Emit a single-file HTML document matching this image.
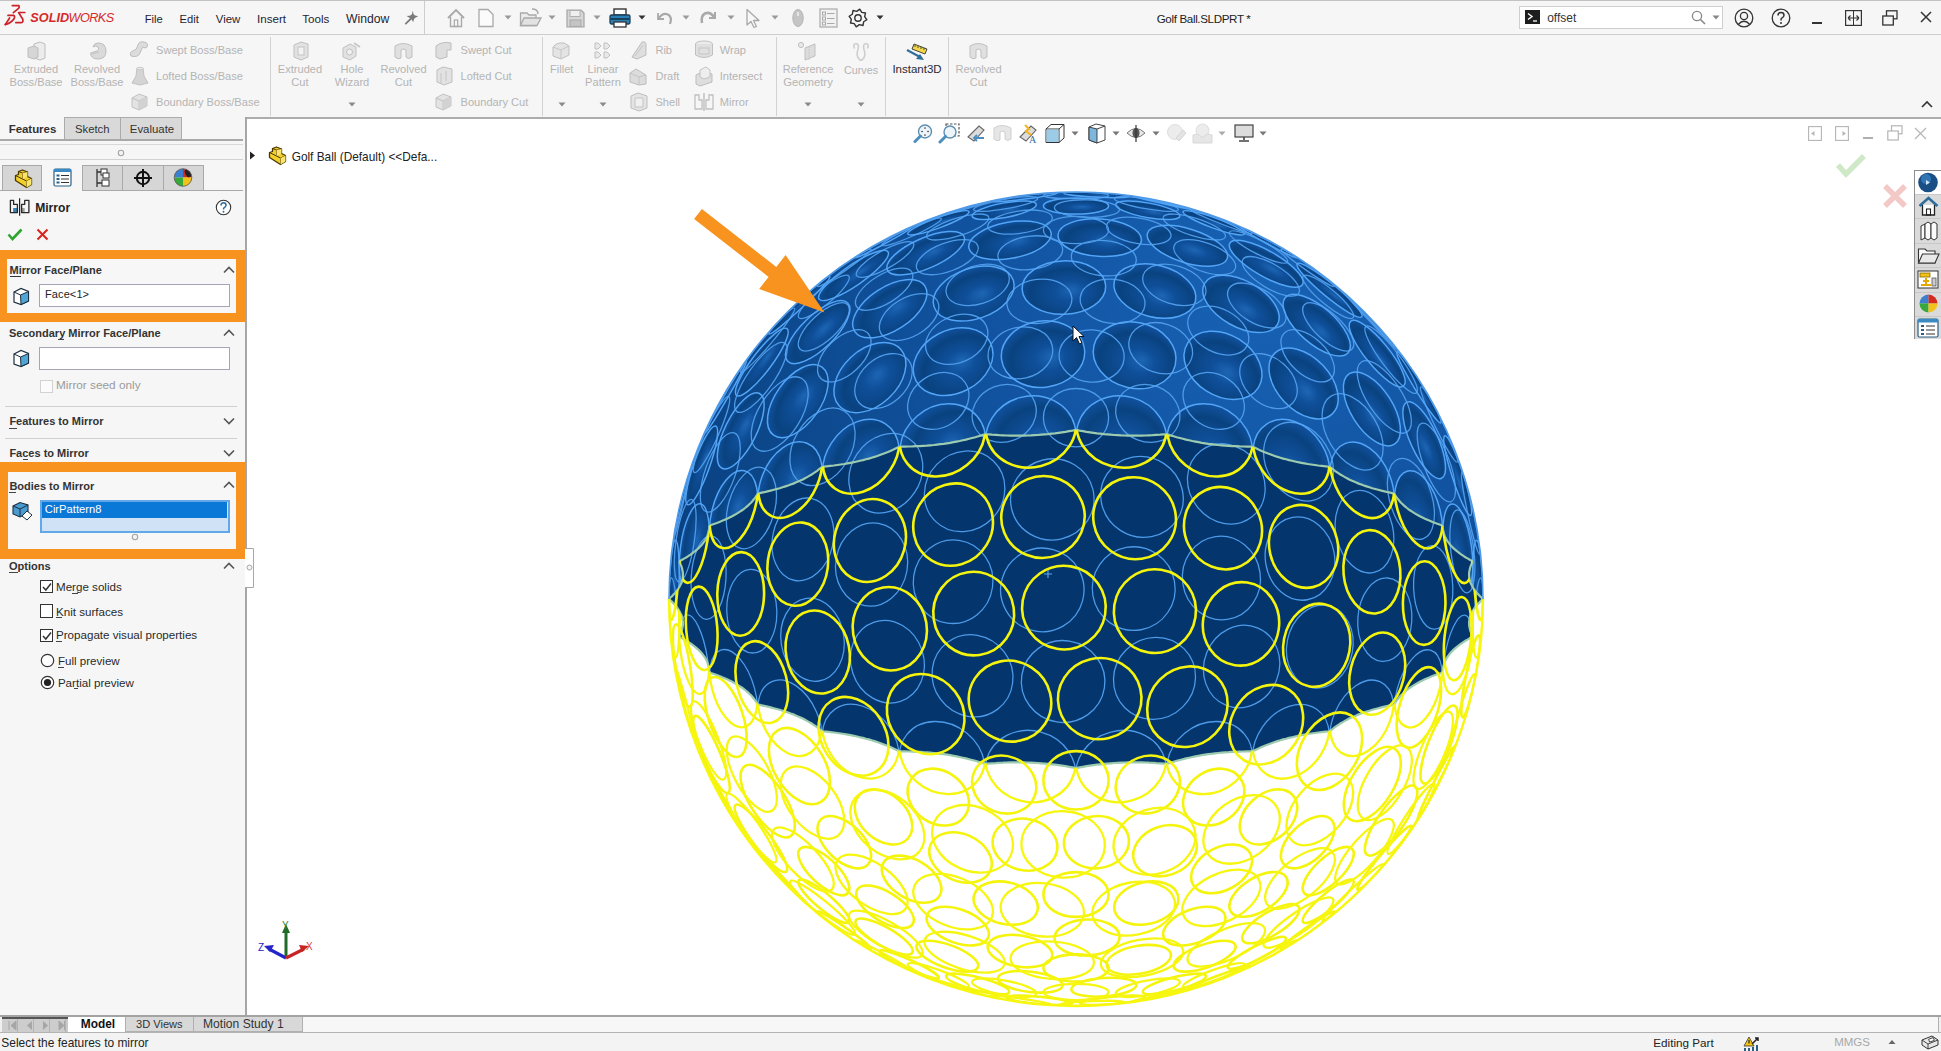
<!DOCTYPE html>
<html><head><meta charset="utf-8"><title>SOLIDWORKS - Golf Ball</title>
<style>
*{box-sizing:border-box}
html,body{margin:0;padding:0;width:1941px;height:1051px;overflow:hidden;background:#fff;font-family:"Liberation Sans",sans-serif;color:#222}
.a{position:absolute;display:block}
.t{position:absolute;white-space:nowrap;line-height:1}
</style></head><body>
<div class="a" style="left:0px;top:0px;width:1941px;height:35px;background:#f6f6f6;border-top:1px solid #c2c2c2;border-bottom:1px solid #cdcdcd"></div>
<svg class="a" style="left:0px;top:0px;" width="30" height="30" viewBox="0 0 30 30"><g fill="none" stroke="#cc2229" stroke-width="1.7" stroke-linecap="round" stroke-linejoin="round"><path d="M12.3 5.6 H18.6 Q19.8 6.3 18.6 8.3 L13.4 12.6"/><path d="M8 15.4 H13.6 Q15.4 16 14 18.8 Q11.5 23 5.2 24.6"/><path d="M9.6 18 L5.4 24.4"/><path d="M24.8 12.5 H18.6 L22.8 19.2 Q23.4 22.6 21.4 22.6 H15.8"/></g></svg>
<div class="t" style="left:30.3px;top:12.1px;font-size:12.7px;color:#d42a2a;font-weight:bold;font-style:italic;">SOLID</div>
<div class="t" style="left:68.6px;top:12.1px;font-size:12.7px;color:#d42a2a;font-weight:normal;font-style:italic;letter-spacing:-0.6px;">WORKS</div>
<div class="t" style="left:144.7px;top:13.7px;font-size:11.2px;color:#1f1f33;font-weight:normal;">File</div>
<div class="t" style="left:179.5px;top:13.7px;font-size:11.2px;color:#1f1f33;font-weight:normal;">Edit</div>
<div class="t" style="left:215.8px;top:13.5px;font-size:11.4px;color:#1f1f33;font-weight:normal;">View</div>
<div class="t" style="left:257.0px;top:13.4px;font-size:11.6px;color:#1f1f33;font-weight:normal;">Insert</div>
<div class="t" style="left:302.3px;top:13.4px;font-size:11.6px;color:#1f1f33;font-weight:normal;">Tools</div>
<div class="t" style="left:346.0px;top:12.9px;font-size:12.2px;color:#1f1f33;font-weight:normal;">Window</div>
<svg class="a" style="left:404px;top:9px;" width="16" height="16" viewBox="0 0 16 16"><path d="M8.8 1.7 Q9.2 5.5 10.6 6.3 Q12 7 14.2 7.2 Q11.2 8.6 10.4 9.6 Q9.6 10.8 9.2 13.2 Q7.8 10.2 6.6 9.6 Q4.6 8.4 2.6 7 Q5.8 6.8 7 6.2 Q8.2 5.2 8.8 1.7 Z" fill="#7a7a7a"/><path d="M7.6 9 L1.8 14.6" stroke="#7a7a7a" stroke-width="1.8" stroke-linecap="round"/></svg>
<div class="a" style="left:424px;top:1px;width:1px;height:33px;background:#cdcdcd"></div>
<svg class="a" style="left:446px;top:8px;" width="20" height="20" viewBox="0 0 20 20"><path d="M2 10 L10 2 L18 10" fill="none" stroke="#a9a9a9" stroke-width="1.8"/><path d="M4.5 9 V18.5 H15.5 V9" fill="none" stroke="#a9a9a9" stroke-width="1.4"/><rect x="8.3" y="12" width="3.4" height="6.5" fill="none" stroke="#a9a9a9" stroke-width="1.2"/></svg>
<svg class="a" style="left:477px;top:8px;" width="18" height="20" viewBox="0 0 18 20"><path d="M2 1.5 H11 L16 6.5 V18.5 H2 Z" fill="#fbfbfb" stroke="#a9a9a9" stroke-width="1.3"/></svg>
<svg class="a" style="left:504px;top:15px;" width="8" height="5" viewBox="0 0 8 5"><path d="M0.5 0.5 L7.5 0.5 L4 4.5 Z" fill="#9a9a9a"/></svg>
<svg class="a" style="left:519px;top:8px;" width="24" height="20" viewBox="0 0 24 20"><path d="M1.5 5 H8 L10 7 H17 V17.5 H1.5 Z" fill="#ececec" stroke="#a9a9a9" stroke-width="1.3"/><path d="M1.5 17.5 L5 10 H22 L18 17.5 Z" fill="#e2e2e2" stroke="#a9a9a9" stroke-width="1.3"/><path d="M13 1 Q19 1 19 6" fill="none" stroke="#a9a9a9" stroke-width="1.5"/></svg>
<svg class="a" style="left:548.4px;top:15px;" width="8" height="5" viewBox="0 0 8 5"><path d="M0.5 0.5 L7.5 0.5 L4 4.5 Z" fill="#9a9a9a"/></svg>
<svg class="a" style="left:566px;top:9px;" width="19" height="19" viewBox="0 0 19 19"><path d="M1 1 H15 L18 4 V18 H1 Z" fill="#d6d6d6" stroke="#a3a3a3" stroke-width="1.2"/><rect x="4" y="1.5" width="10" height="6" fill="#efefef" stroke="#b0b0b0"/><rect x="4" y="11" width="11" height="6.5" fill="#c4c4c4" stroke="#a8a8a8"/></svg>
<svg class="a" style="left:593px;top:15px;" width="8" height="5" viewBox="0 0 8 5"><path d="M0.5 0.5 L7.5 0.5 L4 4.5 Z" fill="#9a9a9a"/></svg>
<svg class="a" style="left:609px;top:8px;" width="22" height="20" viewBox="0 0 22 20"><rect x="5" y="1" width="12" height="6" fill="#fff" stroke="#333" stroke-width="1.4"/><rect x="1" y="7" width="20" height="9" rx="1.5" fill="#2a7fb4" stroke="#1d3f5a" stroke-width="1.3"/><rect x="1.5" y="10" width="19" height="2" fill="#16425e"/><rect x="5" y="14" width="12" height="5" fill="#fff" stroke="#333" stroke-width="1.3"/></svg>
<svg class="a" style="left:637.5px;top:15px;" width="8" height="5" viewBox="0 0 8 5"><path d="M0.5 0.5 L7.5 0.5 L4 4.5 Z" fill="#333"/></svg>
<svg class="a" style="left:654px;top:9px;" width="20" height="18" viewBox="0 0 20 18"><path d="M4 4 V10 H10" fill="none" stroke="#a9a9a9" stroke-width="1.8"/><path d="M4.5 9.5 Q9 3 14 5.5 Q18.5 8 16 15" fill="none" stroke="#a9a9a9" stroke-width="2.2"/></svg>
<svg class="a" style="left:682px;top:15px;" width="8" height="5" viewBox="0 0 8 5"><path d="M0.5 0.5 L7.5 0.5 L4 4.5 Z" fill="#9a9a9a"/></svg>
<svg class="a" style="left:699px;top:9px;" width="20" height="18" viewBox="0 0 20 18"><path d="M16 3 V9 H10" fill="none" stroke="#a9a9a9" stroke-width="2"/><path d="M15.5 8.5 Q11 2 6 4.5 Q1.5 7 3 14" fill="none" stroke="#a9a9a9" stroke-width="2.6"/></svg>
<svg class="a" style="left:726.6px;top:15px;" width="8" height="5" viewBox="0 0 8 5"><path d="M0.5 0.5 L7.5 0.5 L4 4.5 Z" fill="#9a9a9a"/></svg>
<svg class="a" style="left:745px;top:8px;" width="16" height="21" viewBox="0 0 16 21"><path d="M2 1.5 V17 L6 13.5 L9 19.5 L11.5 18.5 L8.5 12.5 H14 Z" fill="#f7f7f7" stroke="#a9a9a9" stroke-width="1.3" stroke-linejoin="round"/></svg>
<svg class="a" style="left:771px;top:15px;" width="8" height="5" viewBox="0 0 8 5"><path d="M0.5 0.5 L7.5 0.5 L4 4.5 Z" fill="#9a9a9a"/></svg>
<svg class="a" style="left:791px;top:8px;" width="14" height="20" viewBox="0 0 14 20"><ellipse cx="7" cy="10" rx="5.2" ry="8.5" fill="#c5c5c5" stroke="#b5b5b5"/><rect x="6" y="4" width="2" height="4" fill="#e6e6e6"/></svg>
<svg class="a" style="left:819px;top:8px;" width="19" height="20" viewBox="0 0 19 20"><rect x="1" y="1" width="17" height="18" fill="#f2f2f2" stroke="#a9a9a9" stroke-width="1.2"/><rect x="3.5" y="4" width="3" height="3" fill="none" stroke="#a9a9a9"/><rect x="3.5" y="9" width="3" height="3" fill="none" stroke="#a9a9a9"/><rect x="3.5" y="14" width="3" height="3" fill="none" stroke="#a9a9a9"/><path d="M8 5.5 H15.5 M8 10.5 H15.5 M8 15.5 H15.5" stroke="#a9a9a9" stroke-width="1.2"/></svg>
<svg class="a" style="left:848px;top:8px;" width="20" height="20" viewBox="0 0 20 20"><polygon points="18.83,11.76 15.65,13.78 15.00,17.48 11.33,16.67 8.24,18.83 6.22,15.65 2.52,15.00 3.33,11.33 1.17,8.24 4.35,6.22 5.00,2.52 8.67,3.33 11.76,1.17 13.78,4.35 17.48,5.00 16.67,8.67" fill="none" stroke="#333" stroke-width="1.4" stroke-linejoin="round"/><circle cx="10" cy="10" r="3.2" fill="none" stroke="#333" stroke-width="1.4"/></svg>
<svg class="a" style="left:876.4px;top:15px;" width="8" height="5" viewBox="0 0 8 5"><path d="M0.5 0.5 L7.5 0.5 L4 4.5 Z" fill="#333"/></svg>
<div class="t" style="left:1156.7px;top:13.0px;font-size:11.6px;color:#222;font-weight:normal;letter-spacing:-0.35px;">Golf Ball.SLDPRT *</div>
<div class="a" style="left:1519px;top:6px;width:204px;height:23px;background:#fff;border:1px solid #cfcfcf"></div>
<svg class="a" style="left:1525px;top:10px;" width="15" height="14" viewBox="0 0 15 14"><rect x="0" y="0" width="15" height="14" fill="#1e1e1e"/><path d="M3 3.5 L7 6.5 L3 9.5" fill="none" stroke="#fff" stroke-width="1.4"/><path d="M8 11 H12" stroke="#fff" stroke-width="1.3"/></svg>
<div class="t" style="left:1547.2px;top:12.4px;font-size:12px;color:#333;font-weight:normal;">offset</div>
<svg class="a" style="left:1691px;top:10px;" width="15" height="15" viewBox="0 0 15 15"><circle cx="6" cy="6" r="4.6" fill="none" stroke="#888" stroke-width="1.3"/><path d="M9.5 9.5 L14 14" stroke="#888" stroke-width="1.6"/></svg>
<svg class="a" style="left:1712px;top:15px;" width="8" height="5" viewBox="0 0 8 5"><path d="M0.5 0.5 L7.5 0.5 L4 4.5 Z" fill="#888"/></svg>
<svg class="a" style="left:1734px;top:8px;" width="20" height="20" viewBox="0 0 20 20"><circle cx="10" cy="10" r="8.8" fill="none" stroke="#333" stroke-width="1.3"/><circle cx="10" cy="8" r="3.6" fill="none" stroke="#333" stroke-width="1.3"/><path d="M4.2 16.5 Q10 10 15.8 16.5" fill="none" stroke="#333" stroke-width="1.3"/></svg>
<svg class="a" style="left:1771px;top:8px;" width="20" height="20" viewBox="0 0 20 20"><circle cx="10" cy="10" r="8.8" fill="none" stroke="#333" stroke-width="1.3"/><path d="M7 7.5 Q7 4.5 10 4.5 Q13 4.5 13 7.2 Q13 9 10.5 10.3 Q10 10.8 10 12.5" fill="none" stroke="#333" stroke-width="1.5"/><circle cx="10" cy="15" r="1" fill="#333"/></svg>
<div class="a" style="left:1812px;top:22px;width:10px;height:2px;background:#333"></div>
<svg class="a" style="left:1845px;top:10px;" width="17" height="16" viewBox="0 0 17 16"><rect x="0.6" y="0.6" width="15.8" height="14.8" fill="none" stroke="#333" stroke-width="1.2"/><path d="M8.5 1 V15" stroke="#333" stroke-width="1"/><path d="M3 8 H14 M3 8 L5.5 5.5 M3 8 L5.5 10.5 M14 8 L11.5 5.5 M14 8 L11.5 10.5" stroke="#333" stroke-width="1.1"/></svg>
<svg class="a" style="left:1882px;top:10px;" width="16" height="16" viewBox="0 0 16 16"><rect x="4.5" y="0.8" width="10.5" height="8" fill="none" stroke="#333" stroke-width="1.3"/><rect x="0.8" y="6" width="10.5" height="9" fill="#f6f6f6" stroke="#333" stroke-width="1.3"/></svg>
<svg class="a" style="left:1920px;top:11px;" width="12" height="12" viewBox="0 0 12 12"><path d="M1 1 L11 11 M11 1 L1 11" stroke="#333" stroke-width="1.5"/></svg>
<div class="a" style="left:0px;top:35px;width:1941px;height:83px;background:#f6f6f6"></div>
<div class="a" style="left:246px;top:117px;width:1695px;height:2px;background:#acacac"></div>
<div class="a" style="left:270px;top:37px;width:1px;height:79px;background:#d2d2d2"></div>
<div class="a" style="left:542px;top:37px;width:1px;height:79px;background:#d2d2d2"></div>
<div class="a" style="left:776px;top:37px;width:1px;height:79px;background:#d2d2d2"></div>
<div class="a" style="left:885px;top:37px;width:1px;height:79px;background:#d2d2d2"></div>
<div class="a" style="left:948px;top:37px;width:1px;height:79px;background:#d2d2d2"></div>
<svg class="a" style="left:26px;top:41px;" width="21" height="20" viewBox="0 0 21 20"><g stroke="#bdbdbd" stroke-width="1"><path d="M8 3 L14 1 L19 3 V17 L14 19 L8 17 Z" fill="#ececec"/><path d="M2 7 L8 5 L12 7 V16 L8 18 L2 16 Z" fill="#d6d6d6"/></g></svg>
<div class="t" style="left:-64.0px;top:64.3px;width:200px;text-align:center;font-size:11.1px;color:#b4b4b4;font-weight:normal;">Extruded</div>
<div class="t" style="left:-64.0px;top:77.3px;width:200px;text-align:center;font-size:11.1px;color:#b4b4b4;font-weight:normal;">Boss/Base</div>
<svg class="a" style="left:88px;top:41px;" width="20" height="20" viewBox="0 0 20 20"><path d="M10 2 Q18 2 18 10 Q18 18 10 18 Q3 18 2.5 12 L9 10 Q12 9 10 6 Q8 4 5 6 Q6 2 10 2 Z" fill="#dadada" stroke="#bdbdbd"/><path d="M4 13 L11 11" stroke="#c4c4c4"/></svg>
<div class="t" style="left:-3.0px;top:64.3px;width:200px;text-align:center;font-size:11.1px;color:#b4b4b4;font-weight:normal;">Revolved</div>
<div class="t" style="left:-3.0px;top:77.3px;width:200px;text-align:center;font-size:11.1px;color:#b4b4b4;font-weight:normal;">Boss/Base</div>
<svg class="a" style="left:128px;top:40px;" width="22" height="19" viewBox="0 0 22 19"><path d="M3 16 Q1 12 5 11 Q9 10 10 5 Q11 1 16 2 Q21 3 19 7 Q17 9 15 7 Q13 10 12 13 Q10 18 3 16 Z" fill="#dcdcdc" stroke="#bdbdbd"/></svg>
<div class="t" style="left:156.0px;top:45.1px;font-size:11.1px;color:#b4b4b4;font-weight:normal;">Swept Boss/Base</div>
<svg class="a" style="left:131px;top:66px;" width="18" height="20" viewBox="0 0 18 20"><path d="M6 2 H12 L13 10 L17 17 L9 19 L1 17 L5 10 Z" fill="#d4d4d4" stroke="#c2c2c2"/><ellipse cx="9" cy="2.5" rx="3" ry="1.2" fill="#eee" stroke="#c8c8c8"/></svg>
<div class="t" style="left:156.0px;top:71.0px;font-size:11.1px;color:#b4b4b4;font-weight:normal;">Lofted Boss/Base</div>
<svg class="a" style="left:130px;top:92px;" width="20" height="20" viewBox="0 0 20 20"><g stroke="#c2c2c2" stroke-width="1" fill="#e3e3e3"><path d="M2 6 L9 2 L17 5 L17 14 L9 18 L2 15 Z"/><path d="M2 6 L9 9 L17 5 M9 9 V18" fill="none"/></g><path d="M9 9 L17 5 L17 14 L9 18 Z" fill="#d2d2d2"/></svg>
<div class="t" style="left:156.0px;top:97.2px;font-size:11.1px;color:#b4b4b4;font-weight:normal;">Boundary Boss/Base</div>
<svg class="a" style="left:292px;top:41px;" width="18" height="20" viewBox="0 0 18 20"><path d="M2 4 L9 1 L16 3 V16 L9 19 L2 16 Z" fill="#e2e2e2" stroke="#c0c0c0"/><rect x="6" y="6" width="6" height="8" fill="#f2f2f2" stroke="#c4c4c4"/></svg>
<div class="t" style="left:200.0px;top:64.3px;width:200px;text-align:center;font-size:11.1px;color:#b4b4b4;font-weight:normal;">Extruded</div>
<div class="t" style="left:200.0px;top:77.3px;width:200px;text-align:center;font-size:11.1px;color:#b4b4b4;font-weight:normal;">Cut</div>
<svg class="a" style="left:341px;top:41px;" width="21" height="20" viewBox="0 0 21 20"><path d="M2 7 L9 3 L15 6 V15 L9 19 L2 16 Z" fill="#e2e2e2" stroke="#c0c0c0"/><circle cx="8.5" cy="11" r="3" fill="#f0f0f0" stroke="#c0c0c0"/><path d="M13 2 L19 6" stroke="#c8c8c8" stroke-width="2"/></svg>
<div class="t" style="left:252.0px;top:64.3px;width:200px;text-align:center;font-size:11.1px;color:#b4b4b4;font-weight:normal;">Hole</div>
<div class="t" style="left:252.0px;top:77.3px;width:200px;text-align:center;font-size:11.1px;color:#b4b4b4;font-weight:normal;">Wizard</div>
<svg class="a" style="left:347.5px;top:102.3px;" width="8" height="5" viewBox="0 0 8 5"><path d="M0.5 0.5 L7.5 0.5 L4 4.5 Z" fill="#8a8a8a"/></svg>
<svg class="a" style="left:393px;top:41px;" width="21" height="20" viewBox="0 0 21 20"><path d="M2 5 Q10 0 19 5 V16 Q15 19 13 16 V9 Q10 7 8 9 V17 Q5 19 2 16 Z" fill="#e0e0e0" stroke="#bfbfbf"/></svg>
<div class="t" style="left:303.5px;top:64.3px;width:200px;text-align:center;font-size:11.1px;color:#b4b4b4;font-weight:normal;">Revolved</div>
<div class="t" style="left:303.5px;top:77.3px;width:200px;text-align:center;font-size:11.1px;color:#b4b4b4;font-weight:normal;">Cut</div>
<svg class="a" style="left:434px;top:40px;" width="20" height="20" viewBox="0 0 20 20"><path d="M2 6 Q8 1 17 3 V10 H13 V17 L6 19 L2 17 Z" fill="#dedede" stroke="#bdbdbd"/></svg>
<div class="t" style="left:460.5px;top:45.1px;font-size:11.1px;color:#b4b4b4;font-weight:normal;">Swept Cut</div>
<svg class="a" style="left:435px;top:66px;" width="19" height="20" viewBox="0 0 19 20"><path d="M2 4 L8 1 L17 3 V16 L9 19 L2 16 Z" fill="#e2e2e2" stroke="#bfbfbf"/><path d="M6 7 V17 M11 5 V15" stroke="#c4c4c4"/></svg>
<div class="t" style="left:460.5px;top:71.0px;font-size:11.1px;color:#b4b4b4;font-weight:normal;">Lofted Cut</div>
<svg class="a" style="left:434px;top:92px;" width="20" height="20" viewBox="0 0 20 20"><g stroke="#c2c2c2" stroke-width="1" fill="#e3e3e3"><path d="M2 6 L9 2 L17 5 L17 14 L9 18 L2 15 Z"/><path d="M2 6 L9 9 L17 5 M9 9 V18" fill="none"/></g><path d="M9 9 L17 5 L17 14 L9 18 Z" fill="#d2d2d2"/></svg>
<div class="t" style="left:460.5px;top:97.2px;font-size:11.1px;color:#b4b4b4;font-weight:normal;">Boundary Cut</div>
<svg class="a" style="left:551px;top:41px;" width="20" height="20" viewBox="0 0 20 20"><path d="M2 6 Q6 1 13 2 L18 5 V14 L10 18 L2 15 Z" fill="#e4e4e4" stroke="#c0c0c0"/><path d="M2 6 L10 9 L18 5 M10 9 V18" fill="none" stroke="#c6c6c6"/></svg>
<div class="t" style="left:461.7px;top:64.3px;width:200px;text-align:center;font-size:11.1px;color:#b4b4b4;font-weight:normal;">Fillet</div>
<svg class="a" style="left:557.6px;top:102.3px;" width="8" height="5" viewBox="0 0 8 5"><path d="M0.5 0.5 L7.5 0.5 L4 4.5 Z" fill="#8a8a8a"/></svg>
<svg class="a" style="left:594px;top:41px;" width="18" height="20" viewBox="0 0 18 20"><g fill="#e8e8e8" stroke="#c0c0c0"><path d="M1 2 H4 L7 5 L4 8 H1 Z"/><path d="M10 2 H13 L16 5 L13 8 H10 Z"/><path d="M1 11 H4 L7 14 L4 17 H1 Z"/><path d="M10 11 H13 L16 14 L13 17 H10 Z"/></g></svg>
<div class="t" style="left:503.0px;top:64.3px;width:200px;text-align:center;font-size:11.1px;color:#b4b4b4;font-weight:normal;">Linear</div>
<div class="t" style="left:503.0px;top:77.3px;width:200px;text-align:center;font-size:11.1px;color:#b4b4b4;font-weight:normal;">Pattern</div>
<svg class="a" style="left:599px;top:102.3px;" width="8" height="5" viewBox="0 0 8 5"><path d="M0.5 0.5 L7.5 0.5 L4 4.5 Z" fill="#8a8a8a"/></svg>
<svg class="a" style="left:629px;top:40px;" width="20" height="20" viewBox="0 0 20 20"><path d="M3 17 L13 2 Q17 1 17 5 V15 L8 19 Z" fill="#dedede" stroke="#bdbdbd"/><path d="M6 16 L14 5" stroke="#c8c8c8"/></svg>
<div class="t" style="left:655.4px;top:45.1px;font-size:11.1px;color:#b4b4b4;font-weight:normal;">Rib</div>
<svg class="a" style="left:628px;top:67px;" width="21" height="19" viewBox="0 0 21 19"><path d="M2 6 L8 2 L18 8 V17 L11 18 L2 15 Z" fill="#dcdcdc" stroke="#bdbdbd"/><path d="M2 6 L11 10 V18 M11 10 L18 8" fill="none" stroke="#c4c4c4"/></svg>
<div class="t" style="left:655.4px;top:71.0px;font-size:11.1px;color:#b4b4b4;font-weight:normal;">Draft</div>
<svg class="a" style="left:629px;top:92px;" width="20" height="20" viewBox="0 0 20 20"><path d="M2 4 L9 1 L18 4 V16 L10 19 L2 16 Z" fill="#e4e4e4" stroke="#bdbdbd"/><path d="M6 6 L14 6 V15 L6 15 Z" fill="#f0f0f0" stroke="#c4c4c4"/></svg>
<div class="t" style="left:655.4px;top:97.2px;font-size:11.1px;color:#b4b4b4;font-weight:normal;">Shell</div>
<svg class="a" style="left:694px;top:40px;" width="20" height="20" viewBox="0 0 20 20"><ellipse cx="10" cy="4" rx="8.5" ry="3" fill="#ececec" stroke="#c0c0c0"/><path d="M1.5 4 V15 Q10 20 18.5 15 V4" fill="#e0e0e0" stroke="#c0c0c0"/><rect x="5" y="8" width="10" height="6" fill="none" stroke="#c4c4c4"/></svg>
<div class="t" style="left:719.7px;top:45.1px;font-size:11.1px;color:#b4b4b4;font-weight:normal;">Wrap</div>
<svg class="a" style="left:694px;top:66px;" width="20" height="21" viewBox="0 0 20 21"><path d="M2 9 L10 5 L18 8 V16 L6 20 L2 18 Z" fill="#dedede" stroke="#bdbdbd"/><path d="M6 4 L12 1 L16 4 V11 L10 13 L6 11 Z" fill="#eeeeee" stroke="#c2c2c2"/></svg>
<div class="t" style="left:719.7px;top:71.0px;font-size:11.1px;color:#b4b4b4;font-weight:normal;">Intersect</div>
<svg class="a" style="left:694px;top:92px;" width="20" height="20" viewBox="0 0 20 20"><g fill="none" stroke="#c0c0c0" stroke-width="1.3"><path d="M1 3 H5 V8 H8 V17 H1 Z"/><path d="M19 3 H15 V8 H12 V17 H19 Z"/></g><path d="M10 1 V19" stroke="#bdbdbd" stroke-width="1.4"/></svg>
<div class="t" style="left:719.7px;top:97.2px;font-size:11.1px;color:#b4b4b4;font-weight:normal;">Mirror</div>
<svg class="a" style="left:797px;top:41px;" width="21" height="21" viewBox="0 0 21 21"><circle cx="4" cy="4" r="2.6" fill="#e8e8e8" stroke="#c0c0c0"/><path d="M8 7 L18 3 V15 L8 19 Z" fill="#dcdcdc" stroke="#c0c0c0"/><path d="M12 5 V20" stroke="#c8c8c8" stroke-dasharray="2 1"/></svg>
<div class="t" style="left:708.0px;top:64.4px;width:200px;text-align:center;font-size:10.95px;color:#b4b4b4;font-weight:normal;">Reference</div>
<div class="t" style="left:708.0px;top:77.1px;width:200px;text-align:center;font-size:11.3px;color:#b4b4b4;font-weight:normal;">Geometry</div>
<svg class="a" style="left:804.2px;top:102.3px;" width="8" height="5" viewBox="0 0 8 5"><path d="M0.5 0.5 L7.5 0.5 L4 4.5 Z" fill="#8a8a8a"/></svg>
<svg class="a" style="left:851px;top:41px;" width="20" height="21" viewBox="0 0 20 21"><path d="M3.5 7.5 Q1.5 3 5 2.5 Q8.5 3 7 8.5 Q4.5 14.5 8.5 18.5 Q10 19.8 11.5 18.5 Q15.5 14.5 13 8.5 Q11.5 3 15 2.5 Q18.5 3 16.5 7.5" fill="none" stroke="#cfcfcf" stroke-width="1.7"/></svg>
<div class="t" style="left:761.0px;top:64.6px;width:200px;text-align:center;font-size:10.8px;color:#b4b4b4;font-weight:normal;">Curves</div>
<svg class="a" style="left:856.6px;top:102.3px;" width="8" height="5" viewBox="0 0 8 5"><path d="M0.5 0.5 L7.5 0.5 L4 4.5 Z" fill="#8a8a8a"/></svg>
<svg class="a" style="left:906px;top:42px;" width="22" height="19" viewBox="0 0 22 19"><path d="M8 2 L21 7 L19 12 L6 7 Z" fill="#f1d84a" stroke="#333" stroke-width="0.9"/><path d="M9 3 V5 M12 4 V6 M15 5 V7 M18 6 V8" stroke="#333" stroke-width="0.8"/><path d="M1 8 L14 15" stroke="#2f6d9a" stroke-width="2"/><path d="M10 17 L18 18 L14 12 Z" fill="#2f6d9a"/></svg>
<div class="t" style="left:817.0px;top:64.0px;width:200px;text-align:center;font-size:11.5px;color:#2a2a35;font-weight:normal;">Instant3D</div>
<svg class="a" style="left:968px;top:41px;" width="21" height="20" viewBox="0 0 21 20"><path d="M2 5 Q10 0 19 5 V16 Q15 19 13 16 V9 Q10 7 8 9 V17 Q5 19 2 16 Z" fill="#e0e0e0" stroke="#bfbfbf"/></svg>
<div class="t" style="left:878.5px;top:64.3px;width:200px;text-align:center;font-size:11.1px;color:#b4b4b4;font-weight:normal;">Revolved</div>
<div class="t" style="left:878.5px;top:77.3px;width:200px;text-align:center;font-size:11.1px;color:#b4b4b4;font-weight:normal;">Cut</div>
<svg class="a" style="left:1921px;top:100px;" width="12" height="8" viewBox="0 0 12 8"><path d="M1 7 L6 2 L11 7" fill="none" stroke="#333" stroke-width="1.6"/></svg>
<div class="a" style="left:0px;top:117px;width:245px;height:899px;background:#f6f6f6"></div>
<div class="a" style="left:245px;top:117px;width:2px;height:899px;background:#a6a6a6"></div>
<div class="t" style="left:8.7px;top:123.8px;font-size:11.5px;color:#333;font-weight:bold;letter-spacing:-0.05px;">Features</div>
<div class="a" style="left:64px;top:117px;width:57px;height:23px;background:#d9d9d9;border:1px solid #ababab;border-bottom:none"></div>
<div class="a" style="left:120px;top:117px;width:62px;height:23px;background:#d9d9d9;border:1px solid #ababab;border-bottom:none"></div>
<div class="t" style="left:75.0px;top:123.9px;font-size:11.3px;color:#333;font-weight:normal;">Sketch</div>
<div class="t" style="left:129.8px;top:123.8px;font-size:11.4px;color:#333;font-weight:normal;">Evaluate</div>
<div class="a" style="left:0px;top:139px;width:243px;height:2px;background:#a9a9a9"></div>
<div class="a" style="left:0px;top:144px;width:243px;height:1px;background:#d8d8d8"></div>
<svg class="a" style="left:117px;top:149px;" width="8" height="8" viewBox="0 0 8 8"><circle cx="4" cy="4" r="2.7" fill="#f4f4f4" stroke="#a5a5a5" stroke-width="1.1"/></svg>
<div class="a" style="left:0px;top:159px;width:243px;height:1px;background:#d2d2d2"></div>
<div class="a" style="left:2px;top:165px;width:40px;height:26px;background:#d6d6d6;border:1px solid #a9a9a9;border-bottom:none"></div>
<div class="a" style="left:82px;top:165px;width:41px;height:26px;background:#d6d6d6;border:1px solid #a9a9a9;border-bottom:none"></div>
<div class="a" style="left:122px;top:165px;width:42px;height:26px;background:#d6d6d6;border:1px solid #a9a9a9;border-bottom:none"></div>
<div class="a" style="left:163px;top:165px;width:41px;height:26px;background:#d6d6d6;border:1px solid #a9a9a9;border-bottom:none"></div>
<div class="a" style="left:0px;top:190px;width:243px;height:1px;background:#a9a9a9"></div>
<div class="a" style="left:42px;top:190px;width:40px;height:1px;background:#f7f7f7"></div>
<svg class="a" style="left:8px;top:163px;" width="30" height="30" viewBox="0 0 30 30"><path d="M7.5 12.5 L10.5 11.5 V8.5 L14.5 7 L19.5 9 V13.5 L23.5 15.5 V21.5 L18.5 24.5 L7.5 17.5 Z" fill="#f3cf2a" stroke="#4a3800" stroke-width="1.3" stroke-linejoin="round"/><path d="M10.5 8.5 L14.5 10 L19.5 9 M14.5 10 V16 M7.5 12.5 L18.5 18 L23.5 15.5 M18.5 18 V24.5" fill="none" stroke="#4a3800" stroke-width="1"/><path d="M14.5 10 L19.5 9 V13.5 L14.5 16 Z M18.5 18 L23.5 15.5 V21.5 L18.5 24.5 Z" fill="#fbe46a"/></svg>
<svg class="a" style="left:53px;top:168px;" width="19" height="19" viewBox="0 0 19 19"><rect x="1" y="1" width="17" height="17" rx="1.5" fill="#fff" stroke="#2b5f86" stroke-width="1.2"/><rect x="1" y="1" width="17" height="3" fill="#3a8ac3"/><rect x="3.5" y="6.5" width="3" height="2" fill="#2b5f86"/><rect x="3.5" y="10" width="3" height="2" fill="#2b5f86"/><rect x="3.5" y="13.5" width="3" height="2" fill="#2b5f86"/><path d="M8 7.5 H16 M8 11 H16 M8 14.5 H16" stroke="#333" stroke-width="1"/></svg>
<svg class="a" style="left:94px;top:168px;" width="18" height="20" viewBox="0 0 18 20"><path d="M3 1 V19 M3 4 H8 M3 15 H8" stroke="#333" stroke-width="1.3" fill="none"/><rect x="7" y="1" width="6" height="6" fill="#fff" stroke="#333"/><rect x="9" y="5" width="6" height="5" fill="#fff" stroke="#333"/><rect x="8" y="12" width="7" height="6" fill="#fff" stroke="#333"/></svg>
<svg class="a" style="left:133px;top:168px;" width="20" height="20" viewBox="0 0 20 20"><circle cx="10" cy="10" r="6.2" fill="none" stroke="#111" stroke-width="2"/><path d="M10 1 V19 M1 10 H19" stroke="#111" stroke-width="2"/></svg>
<svg class="a" style="left:173px;top:167px;" width="20" height="21" viewBox="0 0 20 21"><defs><clipPath id="dmc"><circle cx="10" cy="10.5" r="8.8"/></clipPath></defs><g clip-path="url(#dmc)"><rect x="0" y="0" width="10" height="10.5" fill="#3c7fd0"/><rect x="10" y="0" width="10" height="10.5" fill="#d42a1f"/><rect x="0" y="10.5" width="10" height="10.5" fill="#38a83a"/><rect x="10" y="10.5" width="10" height="10.5" fill="#f2c21b"/><ellipse cx="15" cy="6" rx="2.8" ry="4.5" fill="#222" transform="rotate(-25 15 6)"/></g><circle cx="10" cy="10.5" r="8.8" fill="none" stroke="#555" stroke-width="0.8"/></svg>
<svg class="a" style="left:8px;top:196px;" width="24" height="22" viewBox="0 0 24 22"><rect x="5.1" y="12" width="4.3" height="4.6" fill="#3a86b8"/><rect x="13.6" y="12" width="3.1" height="4.6" fill="#a0a0a0"/><g fill="none" stroke="#2a2a2a" stroke-width="1.3" stroke-linejoin="round"><path d="M2.4 4.4 H5.6 V8.4 H9.4 V16.6 H2.4 Z"/><path d="M13.6 8.4 H16.7 V4.4 H20.9 V16.6 H13.6 Z"/></g><path d="M11.6 2.3 V19.7" stroke="#222" stroke-width="1.2"/></svg>
<div class="t" style="left:35.2px;top:202.1px;font-size:12.1px;color:#222;font-weight:bold;">Mirror</div>
<svg class="a" style="left:215px;top:199px;" width="17" height="17" viewBox="0 0 17 17"><circle cx="8.5" cy="8.5" r="7.2" fill="#fff" stroke="#333" stroke-width="1.1"/><path d="M6 6.5 Q6 3.8 8.5 3.8 Q11 3.8 11 6.3 Q11 7.8 9 8.8 Q8.5 9.3 8.5 10.6" fill="none" stroke="#2e6b9e" stroke-width="1.5"/><circle cx="8.5" cy="12.8" r="0.95" fill="#2e6b9e"/></svg>
<svg class="a" style="left:7px;top:228px;" width="16" height="13" viewBox="0 0 16 13"><path d="M1.5 6.5 L5.5 11 L14.5 1.5" fill="none" stroke="#2fa52f" stroke-width="2.6"/></svg>
<svg class="a" style="left:36px;top:228px;" width="13" height="13" viewBox="0 0 13 13"><path d="M1.5 1.5 L11.5 11.5 M11.5 1.5 L1.5 11.5" stroke="#d9241c" stroke-width="2"/></svg>
<div class="a" style="left:0px;top:250px;width:245px;height:72px;background:#f7931e"></div>
<div class="a" style="left:7px;top:259px;width:229px;height:54px;background:#f7f7f7"></div>
<div class="t" style="left:9.5px;top:265.1px;font-size:11.0px;color:#333;font-weight:bold;">Mirror Face/Plane</div>
<div class="a" style="left:9.5px;top:275.5px;width:11px;height:1px;background:#333"></div>
<svg class="a" style="left:223px;top:266px;" width="12" height="8" viewBox="0 0 12 8"><path d="M1 6.5 L6 1.5 L11 6.5" fill="none" stroke="#555" stroke-width="1.6"/></svg>
<svg class="a" style="left:12px;top:287px;" width="18" height="19" viewBox="0 0 18 19"><path d="M2 5 L9 1.5 L16.5 4.5 V14 L9 17.5 L2 15 Z" fill="#fff" stroke="#1c2f40" stroke-width="1.2"/><path d="M8.5 8 L16.5 4.5 V14 L9 17.5 Z" fill="#4fa6d4" stroke="#1c2f40" stroke-width="1"/><path d="M2 5 L8.5 8" fill="none" stroke="#1c2f40" stroke-width="1"/></svg>
<div class="a" style="left:39px;top:284px;width:191px;height:23px;background:#fff;border:1px solid #a5a5b5"></div>
<div class="t" style="left:45.0px;top:288.7px;font-size:11px;color:#222;font-weight:normal;letter-spacing:0.1px;">Face&lt;1&gt;</div>
<div class="t" style="left:9.0px;top:328.4px;font-size:11.0px;color:#333;font-weight:bold;">Secondary Mirror Face/Plane</div>
<svg class="a" style="left:223px;top:329px;" width="12" height="8" viewBox="0 0 12 8"><path d="M1 6.5 L6 1.5 L11 6.5" fill="none" stroke="#555" stroke-width="1.6"/></svg>
<svg class="a" style="left:12px;top:349px;" width="18" height="19" viewBox="0 0 18 19"><path d="M2 5 L9 1.5 L16.5 4.5 V14 L9 17.5 L2 15 Z" fill="#fff" stroke="#1c2f40" stroke-width="1.2"/><path d="M8.5 8 L16.5 4.5 V14 L9 17.5 Z" fill="#4fa6d4" stroke="#1c2f40" stroke-width="1"/><path d="M2 5 L8.5 8" fill="none" stroke="#1c2f40" stroke-width="1"/></svg>
<div class="a" style="left:39px;top:347px;width:191px;height:23px;background:#fff;border:1px solid #a5a5b5"></div>
<div class="a" style="left:40px;top:380px;width:13px;height:13px;background:#fbfbfb;border:1px solid #d2d2d2"></div>
<div class="t" style="left:56.0px;top:380.3px;font-size:11.8px;color:#9a9a9a;font-weight:normal;">Mirror seed only</div>
<div class="a" style="left:5px;top:406px;width:232px;height:1px;background:#cfcfcf"></div>
<div class="t" style="left:9.4px;top:416.1px;font-size:11.0px;color:#333;font-weight:bold;">Features to Mirror</div>
<svg class="a" style="left:223px;top:417px;" width="12" height="8" viewBox="0 0 12 8"><path d="M1 1.5 L6 6.5 L11 1.5" fill="none" stroke="#555" stroke-width="1.6"/></svg>
<div class="a" style="left:5px;top:438px;width:232px;height:1px;background:#cfcfcf"></div>
<div class="t" style="left:9.4px;top:448.4px;font-size:11.0px;color:#333;font-weight:bold;">Faces to Mirror</div>
<svg class="a" style="left:223px;top:449px;" width="12" height="8" viewBox="0 0 12 8"><path d="M1 1.5 L6 6.5 L11 1.5" fill="none" stroke="#555" stroke-width="1.6"/></svg>
<div class="a" style="left:0px;top:462px;width:245px;height:97px;background:#f7931e"></div>
<div class="a" style="left:8px;top:472px;width:228px;height:77px;background:#f7f7f7"></div>
<div class="t" style="left:9.4px;top:480.5px;font-size:11.0px;color:#333;font-weight:bold;">Bodies to Mirror</div>
<svg class="a" style="left:223px;top:481px;" width="12" height="8" viewBox="0 0 12 8"><path d="M1 6.5 L6 1.5 L11 6.5" fill="none" stroke="#555" stroke-width="1.6"/></svg>
<svg class="a" style="left:11px;top:500px;" width="22" height="22" viewBox="0 0 22 22"><path d="M2 6 L9 2.5 L17 5 V13 L9 17 L2 14 Z" fill="#4a9bd0" stroke="#1c2f40" stroke-width="1.1"/><path d="M2 6 L9 9 L17 5 M9 9 V17" fill="none" stroke="#1c2f40" stroke-width="1"/><path d="M11 16 L16 11 L21 15 L16 20 Z" fill="#fff" stroke="#1c2f40" stroke-width="1"/></svg>
<div class="a" style="left:39.5px;top:499.5px;width:190px;height:33px;background:#cfe2f6;border:2px solid #62a8e8"></div>
<div class="a" style="left:42px;top:502px;width:185px;height:16px;background:#0a78d7"></div>
<div class="t" style="left:44.8px;top:503.8px;font-size:11.2px;color:#fff;font-weight:normal;">CirPattern8</div>
<svg class="a" style="left:131px;top:533px;" width="8" height="8" viewBox="0 0 8 8"><circle cx="4" cy="4" r="2.7" fill="#f4f4f4" stroke="#a5a5a5" stroke-width="1.1"/></svg>
<div class="t" style="left:9.0px;top:560.7px;font-size:11.0px;color:#333;font-weight:bold;">Options</div>
<svg class="a" style="left:223px;top:562px;" width="12" height="8" viewBox="0 0 12 8"><path d="M1 6.5 L6 1.5 L11 6.5" fill="none" stroke="#555" stroke-width="1.6"/></svg>
<div class="a" style="left:39.5px;top:579.5px;width:13.5px;height:13.5px;background:#fff;border:1.3px solid #333"></div><svg class="a" style="left:39.5px;top:579.5px;" width="14" height="14" viewBox="0 0 14 14"><path d="M3 7 L5.8 10 L11 3.5" fill="none" stroke="#333" stroke-width="1.5"/></svg>
<div class="t" style="left:56.0px;top:581.2px;font-size:11.6px;color:#2a2a2a;font-weight:normal;">Merge solids</div>
<div class="a" style="left:39.5px;top:604px;width:13.5px;height:13.5px;background:#fff;border:1.3px solid #333"></div>
<div class="t" style="left:56.0px;top:605.6px;font-size:11.6px;color:#2a2a2a;font-weight:normal;">Knit surfaces</div>
<div class="a" style="left:39.5px;top:628.5px;width:13.5px;height:13.5px;background:#fff;border:1.3px solid #333"></div><svg class="a" style="left:39.5px;top:628.5px;" width="14" height="14" viewBox="0 0 14 14"><path d="M3 7 L5.8 10 L11 3.5" fill="none" stroke="#333" stroke-width="1.5"/></svg>
<div class="t" style="left:56.0px;top:629.1px;font-size:11.6px;color:#2a2a2a;font-weight:normal;">Propagate visual properties</div>
<svg class="a" style="left:40px;top:653px;" width="15" height="15" viewBox="0 0 15 15"><circle cx="7.5" cy="7.5" r="6.2" fill="#fff" stroke="#333" stroke-width="1.2"/></svg>
<div class="t" style="left:57.9px;top:655.2px;font-size:11.6px;color:#2a2a2a;font-weight:normal;">Full preview</div>
<svg class="a" style="left:40px;top:675px;" width="15" height="15" viewBox="0 0 15 15"><circle cx="7.5" cy="7.5" r="6.2" fill="#fff" stroke="#333" stroke-width="1.2"/><circle cx="7.5" cy="7.5" r="3.6" fill="#222"/></svg>
<div class="t" style="left:57.9px;top:676.6px;font-size:11.6px;color:#2a2a2a;font-weight:normal;">Partial preview</div>
<div class="a" style="left:9.4px;top:427.5px;width:8px;height:1px;background:#444"></div>
<div class="a" style="left:22.6px;top:459px;width:5px;height:1px;background:#444"></div>
<div class="a" style="left:9.4px;top:491.5px;width:7px;height:1px;background:#444"></div>
<div class="a" style="left:9px;top:571.5px;width:9px;height:1px;background:#444"></div>
<div class="a" style="left:72.3px;top:592.5px;width:6px;height:1px;background:#444"></div>
<div class="a" style="left:56px;top:616.5px;width:6px;height:1px;background:#444"></div>
<div class="a" style="left:56px;top:640.5px;width:6px;height:1px;background:#444"></div>
<div class="a" style="left:58px;top:667px;width:5.5px;height:1px;background:#444"></div>
<div class="a" style="left:74px;top:688px;width:4px;height:1px;background:#444"></div>
<div class="a" style="left:58px;top:339px;width:5.5px;height:1px;background:#444"></div>
<div class="a" style="left:247px;top:119px;width:1694px;height:897px;background:#fff"></div>
<svg class="a" style="left:249px;top:151px;" width="7" height="9" viewBox="0 0 7 9"><path d="M1 0.5 L6 4.5 L1 8.5 Z" fill="#222"/></svg>
<svg class="a" style="left:262px;top:140px;" width="30" height="30" viewBox="0 0 30 30"><path d="M7.5 12.5 L10.5 11.5 V8.5 L14.5 7 L19.5 9 V13.5 L23.5 15.5 V21.5 L18.5 24.5 L7.5 17.5 Z" fill="#f3cf2a" stroke="#4a3800" stroke-width="1.3" stroke-linejoin="round"/><path d="M10.5 8.5 L14.5 10 L19.5 9 M14.5 10 V16 M7.5 12.5 L18.5 18 L23.5 15.5 M18.5 18 V24.5" fill="none" stroke="#4a3800" stroke-width="1"/><path d="M14.5 10 L19.5 9 V13.5 L14.5 16 Z M18.5 18 L23.5 15.5 V21.5 L18.5 24.5 Z" fill="#fbe46a"/></svg>
<div class="t" style="left:291.7px;top:151.5px;font-size:11.85px;color:#222;font-weight:normal;">Golf Ball (Default) &lt;&lt;Defa...</div>
<svg class="a" style="left:913px;top:123px;" width="21" height="21" viewBox="0 0 21 21"><circle cx="12" cy="8.5" r="6.5" fill="#eef5fa" stroke="#5d8fb0" stroke-width="1.4"/><path d="M7.5 13 L2 18.5" stroke="#4c8fbf" stroke-width="3" stroke-linecap="round"/><path d="M12 5 L12 5.1 M9 8.5 L9.1 8.5 M15 8.5 L15.1 8.5 M12 12 L12 12.1" stroke="#333" stroke-width="1.6" stroke-linecap="round"/></svg>
<svg class="a" style="left:938px;top:123px;" width="23" height="21" viewBox="0 0 23 21"><rect x="8" y="1" width="13" height="12" fill="none" stroke="#555" stroke-width="1.2" stroke-dasharray="2.5 1.5"/><circle cx="12" cy="9" r="6" fill="#eef5fa" stroke="#5d8fb0" stroke-width="1.4"/><path d="M7.5 13.5 L2 19" stroke="#4c8fbf" stroke-width="3" stroke-linecap="round"/></svg>
<svg class="a" style="left:965px;top:123px;" width="22" height="21" viewBox="0 0 22 21"><path d="M3 14 L14 3 L19 7 L9 18 Z" fill="#dcdcdc" stroke="#666" stroke-width="1.1"/><path d="M9 15 H19 M12 12 L9 15 L12 18" fill="none" stroke="#4c8fbf" stroke-width="1.8"/></svg>
<svg class="a" style="left:992px;top:123px;" width="21" height="21" viewBox="0 0 21 21"><path d="M2 5 Q10 0 19 5 V16 Q15 19 13 16 V9 Q10 7 8 9 V17 Q5 19 2 16 Z" fill="#e6e6e6" stroke="#cfcfcf"/></svg>
<svg class="a" style="left:1017px;top:123px;" width="22" height="21" viewBox="0 0 22 21"><path d="M3 14 L14 3 L19 7 L9 18 Z" fill="#dcdcdc" stroke="#666" stroke-width="1.1"/><path d="M8 2 L12 6 L9 8 L14 12" fill="none" stroke="#f2b51b" stroke-width="2"/><text x="12" y="20" font-size="10" font-family="Liberation Serif" fill="#2f6d9a">A</text></svg>
<svg class="a" style="left:1044px;top:123px;" width="22" height="21" viewBox="0 0 22 21"><path d="M2 6 L7 1.5 H20 V15 L15 19.5 H2 Z" fill="#fff" stroke="#333" stroke-width="1"/><path d="M2 6 H15 V19.5 M15 6 L20 1.5" fill="none" stroke="#333"/><rect x="2.5" y="6.5" width="12" height="12.5" fill="#9ccbe8"/></svg>
<svg class="a" style="left:1070.8px;top:131px;" width="8" height="5" viewBox="0 0 8 5"><path d="M0.5 0.5 L7.5 0.5 L4 4.5 Z" fill="#777"/></svg>
<svg class="a" style="left:1087px;top:123px;" width="20" height="21" viewBox="0 0 20 21"><path d="M2 4 L9 1 L18 3 V17 L10 20 L2 17 Z" fill="#fff" stroke="#444" stroke-width="1"/><path d="M2 4 L10 6 V20 L2 17 Z" fill="#7fb6dc" stroke="#333" stroke-width="0.9"/><path d="M10 6 L18 3" stroke="#444"/></svg>
<svg class="a" style="left:1111.5px;top:131px;" width="8" height="5" viewBox="0 0 8 5"><path d="M0.5 0.5 L7.5 0.5 L4 4.5 Z" fill="#777"/></svg>
<svg class="a" style="left:1126px;top:123px;" width="20" height="21" viewBox="0 0 20 21"><path d="M1 10 Q10 1 19 10 Q10 19 1 10 Z" fill="#e8e8e8" stroke="#777" stroke-width="1"/><ellipse cx="10" cy="10" rx="3.5" ry="5" fill="#555"/><path d="M10 2 V19" stroke="#333" stroke-width="1.2"/></svg>
<svg class="a" style="left:1152px;top:131px;" width="8" height="5" viewBox="0 0 8 5"><path d="M0.5 0.5 L7.5 0.5 L4 4.5 Z" fill="#777"/></svg>
<svg class="a" style="left:1166px;top:123px;" width="21" height="21" viewBox="0 0 21 21"><circle cx="9" cy="9" r="7.5" fill="#ececec" stroke="#dedede"/><path d="M10 15 L17 7 L20 10 L13 18 Z" fill="#e4e4e4" stroke="#d6d6d6"/></svg>
<svg class="a" style="left:1192px;top:123px;" width="21" height="21" viewBox="0 0 21 21"><circle cx="10.5" cy="7.5" r="6.5" fill="#ececec" stroke="#dedede"/><path d="M1 12 L6 11 L10.5 15 L15 11 L20 12 V20 H1 Z" fill="#e6e6e6" stroke="#d8d8d8"/></svg>
<svg class="a" style="left:1218px;top:131px;" width="8" height="5" viewBox="0 0 8 5"><path d="M0.5 0.5 L7.5 0.5 L4 4.5 Z" fill="#aaa"/></svg>
<svg class="a" style="left:1234px;top:123px;" width="20" height="21" viewBox="0 0 20 21"><rect x="1" y="2" width="18" height="12" fill="#dcdcdc" stroke="#444" stroke-width="1.2"/><path d="M10 14 V17 M5 18 H15" stroke="#444" stroke-width="1.6"/></svg>
<svg class="a" style="left:1259px;top:131px;" width="8" height="5" viewBox="0 0 8 5"><path d="M0.5 0.5 L7.5 0.5 L4 4.5 Z" fill="#777"/></svg>
<svg class="a" style="left:1808px;top:126px;" width="14" height="15" viewBox="0 0 14 15"><rect x="0.6" y="0.6" width="12.8" height="13.8" fill="none" stroke="#b5b5b5" stroke-width="1.1"/><path d="M3 7.5 L6.5 5 V10 Z" fill="#b5b5b5"/></svg>
<svg class="a" style="left:1835px;top:126px;" width="14" height="15" viewBox="0 0 14 15"><rect x="0.6" y="0.6" width="12.8" height="13.8" fill="none" stroke="#b5b5b5" stroke-width="1.1"/><path d="M11 7.5 L7.5 5 V10 Z" fill="#b5b5b5"/></svg>
<div class="a" style="left:1863px;top:137px;width:10px;height:2px;background:#b0b0b0"></div>
<svg class="a" style="left:1887px;top:125px;" width="16" height="16" viewBox="0 0 16 16"><rect x="4.5" y="0.8" width="10.5" height="8" fill="none" stroke="#b5b5b5" stroke-width="1.2"/><rect x="0.8" y="6" width="10.5" height="9" fill="#fff" stroke="#b5b5b5" stroke-width="1.2"/></svg>
<svg class="a" style="left:1914px;top:127px;" width="13" height="13" viewBox="0 0 13 13"><path d="M1 1 L12 12 M12 1 L1 12" stroke="#b5b5b5" stroke-width="1.2"/></svg>
<svg class="a" style="left:1836px;top:153px;" width="30" height="25" viewBox="0 0 30 25"><path d="M2 12 L10 21 L28 3" fill="none" stroke="#cfe8c8" stroke-width="5.5"/></svg>
<svg class="a" style="left:1882px;top:183px;" width="26" height="26" viewBox="0 0 26 26"><path d="M3 3 L23 23 M23 3 L3 23" stroke="#f2c9c6" stroke-width="5.5"/></svg>
<div class="a" style="left:1914px;top:170px;width:27px;height:169px;background:#dadada;border-left:1px solid #8e8e8e;border-top:1px solid #8e8e8e"></div>
<div class="a" style="left:1915px;top:171px;width:26px;height:23px;background:#fff"></div>
<div class="a" style="left:1915px;top:194px;width:26px;height:1px;background:#c8c8c8"></div>
<div class="a" style="left:1915px;top:218px;width:26px;height:1px;background:#c8c8c8"></div>
<div class="a" style="left:1915px;top:243px;width:26px;height:1px;background:#c8c8c8"></div>
<div class="a" style="left:1915px;top:267px;width:26px;height:1px;background:#c8c8c8"></div>
<div class="a" style="left:1915px;top:292px;width:26px;height:1px;background:#c8c8c8"></div>
<div class="a" style="left:1915px;top:316px;width:26px;height:1px;background:#c8c8c8"></div>
<svg class="a" style="left:1917px;top:172px;" width="22" height="21" viewBox="0 0 22 21"><circle cx="11" cy="10.5" r="9.8" fill="#1a4f86"/><circle cx="9" cy="7" r="5" fill="#3d86c8" opacity="0.7"/><path d="M9 8 L13 10.5 L9 13 Z" fill="#cfe3f5"/></svg>
<svg class="a" style="left:1918px;top:196px;" width="21" height="21" viewBox="0 0 21 21"><path d="M1.5 10 L10.5 2 L19.5 10" fill="none" stroke="#2c6d9e" stroke-width="2.5"/><path d="M4.5 9 V19 H16.5 V9" fill="#fff" stroke="#222" stroke-width="1.3"/><rect x="8.5" y="13" width="4" height="6" fill="none" stroke="#222" stroke-width="1.1"/></svg>
<svg class="a" style="left:1918px;top:220px;" width="21" height="21" viewBox="0 0 21 21"><g fill="#fafafa" stroke="#333" stroke-width="1"><path d="M3 6 L7 4 V18 L3 20 Z"/><path d="M7 4 L10 2 L13 4 V18 L10 20 L7 18 Z"/><path d="M13 4 L16 2 L19 4 V18 L16 20 L13 18 Z"/></g></svg>
<svg class="a" style="left:1917px;top:245px;" width="23" height="21" viewBox="0 0 23 21"><path d="M1.5 4 H8 L10 6 H18 V18 H1.5 Z" fill="#fafafa" stroke="#333" stroke-width="1.1"/><path d="M1.5 18 L5.5 9 H22 L18 18 Z" fill="#e8e8e8" stroke="#333" stroke-width="1.1"/></svg>
<svg class="a" style="left:1917px;top:269px;" width="22" height="21" viewBox="0 0 22 21"><rect x="1" y="2" width="20" height="17" fill="#fff" stroke="#333" stroke-width="1"/><rect x="3" y="4" width="10" height="4" fill="#f1c21a" stroke="#8a6a00" stroke-width="0.8"/><path d="M4 16 H14 M9 9 V16 M6 12 H12" stroke="#e5a800" stroke-width="2"/><rect x="15" y="9" width="4" height="8" fill="#ccc" stroke="#555" stroke-width="0.8"/></svg>
<svg class="a" style="left:1918px;top:293px;" width="21" height="21" viewBox="0 0 21 21"><defs><clipPath id="dm2"><circle cx="10.5" cy="10.5" r="9"/></clipPath></defs><g clip-path="url(#dm2)"><rect x="0" y="0" width="10.5" height="10.5" fill="#3c7fd0"/><rect x="10.5" y="0" width="11" height="10.5" fill="#d42a1f"/><rect x="0" y="10.5" width="10.5" height="11" fill="#38a83a"/><rect x="10.5" y="10.5" width="11" height="11" fill="#f2c21b"/></g></svg>
<svg class="a" style="left:1917px;top:318px;" width="22" height="20" viewBox="0 0 22 20"><rect x="1" y="1" width="20" height="18" rx="1.5" fill="#fff" stroke="#2b5f86" stroke-width="1.2"/><rect x="1" y="1" width="20" height="3.5" fill="#3a8ac3"/><rect x="4" y="7" width="3" height="2" fill="#2b5f86"/><rect x="4" y="11" width="3" height="2" fill="#2b5f86"/><rect x="4" y="15" width="3" height="2" fill="#2b5f86"/><path d="M9 8 H18 M9 12 H18 M9 16 H18" stroke="#333" stroke-width="1"/></svg>
<svg class="a" style="left:255px;top:918px;" width="62" height="46" viewBox="0 0 62 46"><path d="M31 40 L31 12" stroke="#1f6b28" stroke-width="3"/><path d="M27 15 L31 6 L35 15 Z" fill="#1f6b28"/><path d="M31 40 L14 31" stroke="#2424c8" stroke-width="3.2"/><path d="M19 27 L9 28 L15 34 Z" fill="#2424c8"/><path d="M31 40 L49 31" stroke="#c82424" stroke-width="3.2"/><path d="M44 27 L54 28 L47 34 Z" fill="#c82424"/><text x="27" y="11" font-size="10" font-family="Liberation Sans" fill="#2f8a36">Y</text><text x="3" y="33" font-size="10" font-family="Liberation Sans" fill="#2424c8">Z</text><text x="51" y="32" font-size="10" font-family="Liberation Sans" fill="#d83a3a">X</text></svg>
<svg class="a" style="left:245px;top:548px;" width="10" height="40" viewBox="0 0 10 40"><path d="M0 0.5 H8.5 V39.5 H0" fill="#fff" stroke="#a8a8a8"/><circle cx="4.5" cy="19.5" r="2.5" fill="#f4f4f4" stroke="#a5a5a5"/></svg>
<svg class="a" style="left:0;top:0" width="1941" height="1051" viewBox="0 0 1941 1051">
<defs>
<clipPath id="cTop"><path clip-rule="evenodd" d="M 669.0 599.0 A 407.0 407.0 0 0 1 1483.0 599.0 Z M 1483.0 599.0 L 1483.0 599.0 L 1481.4 597.5 L 1479.9 596.1 L 1478.5 594.6 L 1477.1 593.2 L 1475.9 591.7 L 1474.8 590.3 L 1473.8 588.9 L 1472.9 587.5 L 1472.1 586.0 L 1471.4 584.6 L 1470.7 583.2 L 1470.2 581.8 L 1469.8 580.4 L 1469.5 578.9 L 1469.3 577.5 L 1469.1 576.0 L 1469.1 574.6 L 1469.1 573.1 L 1469.3 571.7 L 1469.6 570.2 L 1469.9 568.7 L 1470.3 567.2 L 1470.9 565.6 L 1471.5 564.1 L 1472.2 562.5 L 1472.1 561.0 L 1469.8 559.7 L 1467.5 558.4 L 1465.4 557.2 L 1463.4 555.9 L 1461.5 554.6 L 1459.7 553.3 L 1457.9 552.0 L 1456.3 550.7 L 1454.8 549.4 L 1453.4 548.1 L 1452.0 546.7 L 1450.8 545.4 L 1449.6 544.0 L 1448.6 542.7 L 1447.6 541.3 L 1446.7 539.9 L 1445.9 538.5 L 1445.2 537.0 L 1444.6 535.6 L 1444.1 534.1 L 1443.7 532.6 L 1443.3 531.1 L 1443.0 529.5 L 1442.8 527.9 L 1442.7 526.3 L 1441.0 525.0 L 1438.0 524.0 L 1435.2 523.0 L 1432.5 521.9 L 1429.8 520.8 L 1427.3 519.7 L 1424.9 518.7 L 1422.5 517.5 L 1420.3 516.4 L 1418.1 515.3 L 1416.0 514.1 L 1414.0 512.9 L 1412.1 511.7 L 1410.3 510.5 L 1408.6 509.3 L 1406.9 508.0 L 1405.3 506.7 L 1403.8 505.4 L 1402.4 504.0 L 1401.0 502.7 L 1399.7 501.3 L 1398.5 499.8 L 1397.4 498.4 L 1396.3 496.9 L 1395.3 495.4 L 1394.3 493.8 L 1391.2 492.9 L 1387.8 492.2 L 1384.5 491.4 L 1381.3 490.6 L 1378.2 489.8 L 1375.2 489.0 L 1372.3 488.2 L 1369.4 487.3 L 1366.6 486.4 L 1363.9 485.5 L 1361.3 484.5 L 1358.7 483.6 L 1356.3 482.6 L 1353.9 481.5 L 1351.5 480.5 L 1349.2 479.4 L 1347.0 478.2 L 1344.9 477.1 L 1342.8 475.9 L 1340.7 474.7 L 1338.7 473.4 L 1336.8 472.1 L 1334.9 470.8 L 1333.1 469.4 L 1331.3 468.0 L 1329.2 466.7 L 1325.5 466.3 L 1321.8 465.9 L 1318.2 465.5 L 1314.7 465.0 L 1311.2 464.5 L 1307.8 464.0 L 1304.5 463.4 L 1301.3 462.8 L 1298.1 462.2 L 1295.0 461.5 L 1292.0 460.8 L 1289.0 460.1 L 1286.0 459.3 L 1283.1 458.6 L 1280.3 457.7 L 1277.5 456.9 L 1274.8 456.0 L 1272.1 455.0 L 1269.4 454.0 L 1266.7 453.0 L 1264.1 452.0 L 1261.6 450.9 L 1259.0 449.8 L 1256.5 448.6 L 1254.0 447.4 L 1250.9 446.6 L 1247.1 446.6 L 1243.3 446.5 L 1239.5 446.4 L 1235.9 446.2 L 1232.3 446.1 L 1228.7 445.8 L 1225.2 445.6 L 1221.7 445.3 L 1218.3 445.0 L 1214.9 444.6 L 1211.6 444.2 L 1208.3 443.8 L 1205.0 443.3 L 1201.8 442.8 L 1198.6 442.2 L 1195.4 441.6 L 1192.3 441.0 L 1189.1 440.3 L 1186.0 439.6 L 1182.9 438.8 L 1179.8 438.0 L 1176.7 437.2 L 1173.6 436.3 L 1170.5 435.4 L 1167.4 434.4 L 1163.8 434.4 L 1160.1 434.7 L 1156.3 434.9 L 1152.7 435.2 L 1149.0 435.3 L 1145.4 435.5 L 1141.8 435.6 L 1138.3 435.7 L 1134.7 435.7 L 1131.2 435.7 L 1127.8 435.6 L 1124.3 435.5 L 1120.9 435.4 L 1117.4 435.2 L 1114.0 435.0 L 1110.6 434.7 L 1107.2 434.4 L 1103.8 434.1 L 1100.3 433.7 L 1096.9 433.3 L 1093.5 432.8 L 1090.0 432.3 L 1086.5 431.8 L 1083.0 431.2 L 1079.5 430.6 L 1076.0 429.9 L 1072.5 430.6 L 1069.0 431.2 L 1065.5 431.8 L 1062.0 432.3 L 1058.5 432.8 L 1055.1 433.3 L 1051.7 433.7 L 1048.2 434.1 L 1044.8 434.4 L 1041.4 434.7 L 1038.0 435.0 L 1034.6 435.2 L 1031.1 435.4 L 1027.7 435.5 L 1024.2 435.6 L 1020.8 435.7 L 1017.3 435.7 L 1013.7 435.7 L 1010.2 435.6 L 1006.6 435.5 L 1003.0 435.3 L 999.3 435.2 L 995.7 434.9 L 991.9 434.7 L 988.2 434.4 L 984.6 434.4 L 981.5 435.4 L 978.4 436.3 L 975.3 437.2 L 972.2 438.0 L 969.1 438.8 L 966.0 439.6 L 962.9 440.3 L 959.7 441.0 L 956.6 441.6 L 953.4 442.2 L 950.2 442.8 L 947.0 443.3 L 943.7 443.8 L 940.4 444.2 L 937.1 444.6 L 933.7 445.0 L 930.3 445.3 L 926.8 445.6 L 923.3 445.8 L 919.7 446.1 L 916.1 446.2 L 912.5 446.4 L 908.7 446.5 L 904.9 446.6 L 901.1 446.6 L 898.0 447.4 L 895.5 448.6 L 893.0 449.8 L 890.4 450.9 L 887.9 452.0 L 885.3 453.0 L 882.6 454.0 L 879.9 455.0 L 877.2 456.0 L 874.5 456.9 L 871.7 457.7 L 868.9 458.6 L 866.0 459.3 L 863.0 460.1 L 860.0 460.8 L 857.0 461.5 L 853.9 462.2 L 850.7 462.8 L 847.5 463.4 L 844.2 464.0 L 840.8 464.5 L 837.3 465.0 L 833.8 465.5 L 830.2 465.9 L 826.5 466.3 L 822.8 466.7 L 820.7 468.0 L 818.9 469.4 L 817.1 470.8 L 815.2 472.1 L 813.3 473.4 L 811.3 474.7 L 809.2 475.9 L 807.1 477.1 L 805.0 478.2 L 802.8 479.4 L 800.5 480.5 L 798.1 481.5 L 795.7 482.6 L 793.3 483.6 L 790.7 484.5 L 788.1 485.5 L 785.4 486.4 L 782.6 487.3 L 779.7 488.2 L 776.8 489.0 L 773.8 489.8 L 770.7 490.6 L 767.5 491.4 L 764.2 492.2 L 760.8 492.9 L 757.7 493.8 L 756.7 495.4 L 755.7 496.9 L 754.6 498.4 L 753.5 499.8 L 752.3 501.3 L 751.0 502.7 L 749.6 504.0 L 748.2 505.4 L 746.7 506.7 L 745.1 508.0 L 743.4 509.3 L 741.7 510.5 L 739.9 511.7 L 738.0 512.9 L 736.0 514.1 L 733.9 515.3 L 731.7 516.4 L 729.5 517.5 L 727.1 518.7 L 724.7 519.7 L 722.2 520.8 L 719.5 521.9 L 716.8 523.0 L 714.0 524.0 L 711.0 525.0 L 709.3 526.3 L 709.2 527.9 L 709.0 529.5 L 708.7 531.1 L 708.3 532.6 L 707.9 534.1 L 707.4 535.6 L 706.8 537.0 L 706.1 538.5 L 705.3 539.9 L 704.4 541.3 L 703.4 542.7 L 702.4 544.0 L 701.2 545.4 L 700.0 546.7 L 698.6 548.1 L 697.2 549.4 L 695.7 550.7 L 694.1 552.0 L 692.3 553.3 L 690.5 554.6 L 688.6 555.9 L 686.6 557.2 L 684.5 558.4 L 682.2 559.7 L 679.9 561.0 L 679.8 562.5 L 680.5 564.1 L 681.1 565.6 L 681.7 567.2 L 682.1 568.7 L 682.4 570.2 L 682.7 571.7 L 682.9 573.1 L 682.9 574.6 L 682.9 576.0 L 682.7 577.5 L 682.5 578.9 L 682.2 580.4 L 681.8 581.8 L 681.3 583.2 L 680.6 584.6 L 679.9 586.0 L 679.1 587.5 L 678.2 588.9 L 677.2 590.3 L 676.1 591.7 L 674.9 593.2 L 673.5 594.6 L 672.1 596.1 L 670.6 597.5 L 669.0 599.0 Z"/></clipPath>
<clipPath id="cBot"><path clip-rule="evenodd" d="M 669.0 599.0 A 407.0 407.0 0 0 0 1483.0 599.0 Z M 669.0 599.0 L 669.0 599.0 L 670.6 600.5 L 672.1 601.9 L 673.5 603.4 L 674.9 604.8 L 676.1 606.3 L 677.2 607.7 L 678.2 609.1 L 679.1 610.5 L 679.9 612.0 L 680.6 613.4 L 681.3 614.8 L 681.8 616.2 L 682.2 617.6 L 682.5 619.1 L 682.7 620.5 L 682.9 622.0 L 682.9 623.4 L 682.9 624.9 L 682.7 626.3 L 682.4 627.8 L 682.1 629.3 L 681.7 630.8 L 681.1 632.4 L 680.5 633.9 L 679.8 635.5 L 679.9 637.0 L 682.2 638.3 L 684.5 639.6 L 686.6 640.8 L 688.6 642.1 L 690.5 643.4 L 692.3 644.7 L 694.1 646.0 L 695.7 647.3 L 697.2 648.6 L 698.6 649.9 L 700.0 651.3 L 701.2 652.6 L 702.4 654.0 L 703.4 655.3 L 704.4 656.7 L 705.3 658.1 L 706.1 659.5 L 706.8 661.0 L 707.4 662.4 L 707.9 663.9 L 708.3 665.4 L 708.7 666.9 L 709.0 668.5 L 709.2 670.1 L 709.3 671.7 L 711.0 673.0 L 714.0 674.0 L 716.8 675.0 L 719.5 676.1 L 722.2 677.2 L 724.7 678.3 L 727.1 679.3 L 729.5 680.5 L 731.7 681.6 L 733.9 682.7 L 736.0 683.9 L 738.0 685.1 L 739.9 686.3 L 741.7 687.5 L 743.4 688.7 L 745.1 690.0 L 746.7 691.3 L 748.2 692.6 L 749.6 694.0 L 751.0 695.3 L 752.3 696.7 L 753.5 698.2 L 754.6 699.6 L 755.7 701.1 L 756.7 702.6 L 757.7 704.2 L 760.8 705.1 L 764.2 705.8 L 767.5 706.6 L 770.7 707.4 L 773.8 708.2 L 776.8 709.0 L 779.7 709.8 L 782.6 710.7 L 785.4 711.6 L 788.1 712.5 L 790.7 713.5 L 793.3 714.4 L 795.7 715.4 L 798.1 716.5 L 800.5 717.5 L 802.8 718.6 L 805.0 719.8 L 807.1 720.9 L 809.2 722.1 L 811.3 723.3 L 813.3 724.6 L 815.2 725.9 L 817.1 727.2 L 818.9 728.6 L 820.7 730.0 L 822.8 731.3 L 826.5 731.7 L 830.2 732.1 L 833.8 732.5 L 837.3 733.0 L 840.8 733.5 L 844.2 734.0 L 847.5 734.6 L 850.7 735.2 L 853.9 735.8 L 857.0 736.5 L 860.0 737.2 L 863.0 737.9 L 866.0 738.7 L 868.9 739.4 L 871.7 740.3 L 874.5 741.1 L 877.2 742.0 L 879.9 743.0 L 882.6 744.0 L 885.3 745.0 L 887.9 746.0 L 890.4 747.1 L 893.0 748.2 L 895.5 749.4 L 898.0 750.6 L 901.1 751.4 L 904.9 751.4 L 908.7 751.5 L 912.5 751.6 L 916.1 751.8 L 919.7 751.9 L 923.3 752.2 L 926.8 752.4 L 930.3 752.7 L 933.7 753.0 L 937.1 753.4 L 940.4 753.8 L 943.7 754.2 L 947.0 754.7 L 950.2 755.2 L 953.4 755.8 L 956.6 756.4 L 959.7 757.0 L 962.9 757.7 L 966.0 758.4 L 969.1 759.2 L 972.2 760.0 L 975.3 760.8 L 978.4 761.7 L 981.5 762.6 L 984.6 763.6 L 988.2 763.6 L 991.9 763.3 L 995.7 763.1 L 999.3 762.8 L 1003.0 762.7 L 1006.6 762.5 L 1010.2 762.4 L 1013.7 762.3 L 1017.3 762.3 L 1020.8 762.3 L 1024.2 762.4 L 1027.7 762.5 L 1031.1 762.6 L 1034.6 762.8 L 1038.0 763.0 L 1041.4 763.3 L 1044.8 763.6 L 1048.2 763.9 L 1051.7 764.3 L 1055.1 764.7 L 1058.5 765.2 L 1062.0 765.7 L 1065.5 766.2 L 1069.0 766.8 L 1072.5 767.4 L 1076.0 768.1 L 1079.5 767.4 L 1083.0 766.8 L 1086.5 766.2 L 1090.0 765.7 L 1093.5 765.2 L 1096.9 764.7 L 1100.3 764.3 L 1103.8 763.9 L 1107.2 763.6 L 1110.6 763.3 L 1114.0 763.0 L 1117.4 762.8 L 1120.9 762.6 L 1124.3 762.5 L 1127.8 762.4 L 1131.2 762.3 L 1134.7 762.3 L 1138.3 762.3 L 1141.8 762.4 L 1145.4 762.5 L 1149.0 762.7 L 1152.7 762.8 L 1156.3 763.1 L 1160.1 763.3 L 1163.8 763.6 L 1167.4 763.6 L 1170.5 762.6 L 1173.6 761.7 L 1176.7 760.8 L 1179.8 760.0 L 1182.9 759.2 L 1186.0 758.4 L 1189.1 757.7 L 1192.3 757.0 L 1195.4 756.4 L 1198.6 755.8 L 1201.8 755.2 L 1205.0 754.7 L 1208.3 754.2 L 1211.6 753.8 L 1214.9 753.4 L 1218.3 753.0 L 1221.7 752.7 L 1225.2 752.4 L 1228.7 752.2 L 1232.3 751.9 L 1235.9 751.8 L 1239.5 751.6 L 1243.3 751.5 L 1247.1 751.4 L 1250.9 751.4 L 1254.0 750.6 L 1256.5 749.4 L 1259.0 748.2 L 1261.6 747.1 L 1264.1 746.0 L 1266.7 745.0 L 1269.4 744.0 L 1272.1 743.0 L 1274.8 742.0 L 1277.5 741.1 L 1280.3 740.3 L 1283.1 739.4 L 1286.0 738.7 L 1289.0 737.9 L 1292.0 737.2 L 1295.0 736.5 L 1298.1 735.8 L 1301.3 735.2 L 1304.5 734.6 L 1307.8 734.0 L 1311.2 733.5 L 1314.7 733.0 L 1318.2 732.5 L 1321.8 732.1 L 1325.5 731.7 L 1329.2 731.3 L 1331.3 730.0 L 1333.1 728.6 L 1334.9 727.2 L 1336.8 725.9 L 1338.7 724.6 L 1340.7 723.3 L 1342.8 722.1 L 1344.9 720.9 L 1347.0 719.8 L 1349.2 718.6 L 1351.5 717.5 L 1353.9 716.5 L 1356.3 715.4 L 1358.7 714.4 L 1361.3 713.5 L 1363.9 712.5 L 1366.6 711.6 L 1369.4 710.7 L 1372.3 709.8 L 1375.2 709.0 L 1378.2 708.2 L 1381.3 707.4 L 1384.5 706.6 L 1387.8 705.8 L 1391.2 705.1 L 1394.3 704.2 L 1395.3 702.6 L 1396.3 701.1 L 1397.4 699.6 L 1398.5 698.2 L 1399.7 696.7 L 1401.0 695.3 L 1402.4 694.0 L 1403.8 692.6 L 1405.3 691.3 L 1406.9 690.0 L 1408.6 688.7 L 1410.3 687.5 L 1412.1 686.3 L 1414.0 685.1 L 1416.0 683.9 L 1418.1 682.7 L 1420.3 681.6 L 1422.5 680.5 L 1424.9 679.3 L 1427.3 678.3 L 1429.8 677.2 L 1432.5 676.1 L 1435.2 675.0 L 1438.0 674.0 L 1441.0 673.0 L 1442.7 671.7 L 1442.8 670.1 L 1443.0 668.5 L 1443.3 666.9 L 1443.7 665.4 L 1444.1 663.9 L 1444.6 662.4 L 1445.2 661.0 L 1445.9 659.5 L 1446.7 658.1 L 1447.6 656.7 L 1448.6 655.3 L 1449.6 654.0 L 1450.8 652.6 L 1452.0 651.3 L 1453.4 649.9 L 1454.8 648.6 L 1456.3 647.3 L 1457.9 646.0 L 1459.7 644.7 L 1461.5 643.4 L 1463.4 642.1 L 1465.4 640.8 L 1467.5 639.6 L 1469.8 638.3 L 1472.1 637.0 L 1472.2 635.5 L 1471.5 633.9 L 1470.9 632.4 L 1470.3 630.8 L 1469.9 629.3 L 1469.6 627.8 L 1469.3 626.3 L 1469.1 624.9 L 1469.1 623.4 L 1469.1 622.0 L 1469.3 620.5 L 1469.5 619.1 L 1469.8 617.6 L 1470.2 616.2 L 1470.7 614.8 L 1471.4 613.4 L 1472.1 612.0 L 1472.9 610.5 L 1473.8 609.1 L 1474.8 607.7 L 1475.9 606.3 L 1477.1 604.8 L 1478.5 603.4 L 1479.9 601.9 L 1481.4 600.5 L 1483.0 599.0 Z"/></clipPath>
<clipPath id="cAL"><path d="M 669.0 599.0 A 407.0 407.0 0 0 1 1483.0 599.0 L 1483.0 599.0 L 1481.4 600.5 L 1479.9 601.9 L 1478.5 603.4 L 1477.1 604.8 L 1475.9 606.3 L 1474.8 607.7 L 1473.8 609.1 L 1472.9 610.5 L 1472.1 612.0 L 1471.4 613.4 L 1470.7 614.8 L 1470.2 616.2 L 1469.8 617.6 L 1469.5 619.1 L 1469.3 620.5 L 1469.1 622.0 L 1469.1 623.4 L 1469.1 624.9 L 1469.3 626.3 L 1469.6 627.8 L 1469.9 629.3 L 1470.3 630.8 L 1470.9 632.4 L 1471.5 633.9 L 1472.2 635.5 L 1472.1 637.0 L 1469.8 638.3 L 1467.5 639.6 L 1465.4 640.8 L 1463.4 642.1 L 1461.5 643.4 L 1459.7 644.7 L 1457.9 646.0 L 1456.3 647.3 L 1454.8 648.6 L 1453.4 649.9 L 1452.0 651.3 L 1450.8 652.6 L 1449.6 654.0 L 1448.6 655.3 L 1447.6 656.7 L 1446.7 658.1 L 1445.9 659.5 L 1445.2 661.0 L 1444.6 662.4 L 1444.1 663.9 L 1443.7 665.4 L 1443.3 666.9 L 1443.0 668.5 L 1442.8 670.1 L 1442.7 671.7 L 1441.0 673.0 L 1438.0 674.0 L 1435.2 675.0 L 1432.5 676.1 L 1429.8 677.2 L 1427.3 678.3 L 1424.9 679.3 L 1422.5 680.5 L 1420.3 681.6 L 1418.1 682.7 L 1416.0 683.9 L 1414.0 685.1 L 1412.1 686.3 L 1410.3 687.5 L 1408.6 688.7 L 1406.9 690.0 L 1405.3 691.3 L 1403.8 692.6 L 1402.4 694.0 L 1401.0 695.3 L 1399.7 696.7 L 1398.5 698.2 L 1397.4 699.6 L 1396.3 701.1 L 1395.3 702.6 L 1394.3 704.2 L 1391.2 705.1 L 1387.8 705.8 L 1384.5 706.6 L 1381.3 707.4 L 1378.2 708.2 L 1375.2 709.0 L 1372.3 709.8 L 1369.4 710.7 L 1366.6 711.6 L 1363.9 712.5 L 1361.3 713.5 L 1358.7 714.4 L 1356.3 715.4 L 1353.9 716.5 L 1351.5 717.5 L 1349.2 718.6 L 1347.0 719.8 L 1344.9 720.9 L 1342.8 722.1 L 1340.7 723.3 L 1338.7 724.6 L 1336.8 725.9 L 1334.9 727.2 L 1333.1 728.6 L 1331.3 730.0 L 1329.2 731.3 L 1325.5 731.7 L 1321.8 732.1 L 1318.2 732.5 L 1314.7 733.0 L 1311.2 733.5 L 1307.8 734.0 L 1304.5 734.6 L 1301.3 735.2 L 1298.1 735.8 L 1295.0 736.5 L 1292.0 737.2 L 1289.0 737.9 L 1286.0 738.7 L 1283.1 739.4 L 1280.3 740.3 L 1277.5 741.1 L 1274.8 742.0 L 1272.1 743.0 L 1269.4 744.0 L 1266.7 745.0 L 1264.1 746.0 L 1261.6 747.1 L 1259.0 748.2 L 1256.5 749.4 L 1254.0 750.6 L 1250.9 751.4 L 1247.1 751.4 L 1243.3 751.5 L 1239.5 751.6 L 1235.9 751.8 L 1232.3 751.9 L 1228.7 752.2 L 1225.2 752.4 L 1221.7 752.7 L 1218.3 753.0 L 1214.9 753.4 L 1211.6 753.8 L 1208.3 754.2 L 1205.0 754.7 L 1201.8 755.2 L 1198.6 755.8 L 1195.4 756.4 L 1192.3 757.0 L 1189.1 757.7 L 1186.0 758.4 L 1182.9 759.2 L 1179.8 760.0 L 1176.7 760.8 L 1173.6 761.7 L 1170.5 762.6 L 1167.4 763.6 L 1163.8 763.6 L 1160.1 763.3 L 1156.3 763.1 L 1152.7 762.8 L 1149.0 762.7 L 1145.4 762.5 L 1141.8 762.4 L 1138.3 762.3 L 1134.7 762.3 L 1131.2 762.3 L 1127.8 762.4 L 1124.3 762.5 L 1120.9 762.6 L 1117.4 762.8 L 1114.0 763.0 L 1110.6 763.3 L 1107.2 763.6 L 1103.8 763.9 L 1100.3 764.3 L 1096.9 764.7 L 1093.5 765.2 L 1090.0 765.7 L 1086.5 766.2 L 1083.0 766.8 L 1079.5 767.4 L 1076.0 768.1 L 1072.5 767.4 L 1069.0 766.8 L 1065.5 766.2 L 1062.0 765.7 L 1058.5 765.2 L 1055.1 764.7 L 1051.7 764.3 L 1048.2 763.9 L 1044.8 763.6 L 1041.4 763.3 L 1038.0 763.0 L 1034.6 762.8 L 1031.1 762.6 L 1027.7 762.5 L 1024.2 762.4 L 1020.8 762.3 L 1017.3 762.3 L 1013.7 762.3 L 1010.2 762.4 L 1006.6 762.5 L 1003.0 762.7 L 999.3 762.8 L 995.7 763.1 L 991.9 763.3 L 988.2 763.6 L 984.6 763.6 L 981.5 762.6 L 978.4 761.7 L 975.3 760.8 L 972.2 760.0 L 969.1 759.2 L 966.0 758.4 L 962.9 757.7 L 959.7 757.0 L 956.6 756.4 L 953.4 755.8 L 950.2 755.2 L 947.0 754.7 L 943.7 754.2 L 940.4 753.8 L 937.1 753.4 L 933.7 753.0 L 930.3 752.7 L 926.8 752.4 L 923.3 752.2 L 919.7 751.9 L 916.1 751.8 L 912.5 751.6 L 908.7 751.5 L 904.9 751.4 L 901.1 751.4 L 898.0 750.6 L 895.5 749.4 L 893.0 748.2 L 890.4 747.1 L 887.9 746.0 L 885.3 745.0 L 882.6 744.0 L 879.9 743.0 L 877.2 742.0 L 874.5 741.1 L 871.7 740.3 L 868.9 739.4 L 866.0 738.7 L 863.0 737.9 L 860.0 737.2 L 857.0 736.5 L 853.9 735.8 L 850.7 735.2 L 847.5 734.6 L 844.2 734.0 L 840.8 733.5 L 837.3 733.0 L 833.8 732.5 L 830.2 732.1 L 826.5 731.7 L 822.8 731.3 L 820.7 730.0 L 818.9 728.6 L 817.1 727.2 L 815.2 725.9 L 813.3 724.6 L 811.3 723.3 L 809.2 722.1 L 807.1 720.9 L 805.0 719.8 L 802.8 718.6 L 800.5 717.5 L 798.1 716.5 L 795.7 715.4 L 793.3 714.4 L 790.7 713.5 L 788.1 712.5 L 785.4 711.6 L 782.6 710.7 L 779.7 709.8 L 776.8 709.0 L 773.8 708.2 L 770.7 707.4 L 767.5 706.6 L 764.2 705.8 L 760.8 705.1 L 757.7 704.2 L 756.7 702.6 L 755.7 701.1 L 754.6 699.6 L 753.5 698.2 L 752.3 696.7 L 751.0 695.3 L 749.6 694.0 L 748.2 692.6 L 746.7 691.3 L 745.1 690.0 L 743.4 688.7 L 741.7 687.5 L 739.9 686.3 L 738.0 685.1 L 736.0 683.9 L 733.9 682.7 L 731.7 681.6 L 729.5 680.5 L 727.1 679.3 L 724.7 678.3 L 722.2 677.2 L 719.5 676.1 L 716.8 675.0 L 714.0 674.0 L 711.0 673.0 L 709.3 671.7 L 709.2 670.1 L 709.0 668.5 L 708.7 666.9 L 708.3 665.4 L 707.9 663.9 L 707.4 662.4 L 706.8 661.0 L 706.1 659.5 L 705.3 658.1 L 704.4 656.7 L 703.4 655.3 L 702.4 654.0 L 701.2 652.6 L 700.0 651.3 L 698.6 649.9 L 697.2 648.6 L 695.7 647.3 L 694.1 646.0 L 692.3 644.7 L 690.5 643.4 L 688.6 642.1 L 686.6 640.8 L 684.5 639.6 L 682.2 638.3 L 679.9 637.0 L 679.8 635.5 L 680.5 633.9 L 681.1 632.4 L 681.7 630.8 L 682.1 629.3 L 682.4 627.8 L 682.7 626.3 L 682.9 624.9 L 682.9 623.4 L 682.9 622.0 L 682.7 620.5 L 682.5 619.1 L 682.2 617.6 L 681.8 616.2 L 681.3 614.8 L 680.6 613.4 L 679.9 612.0 L 679.1 610.5 L 678.2 609.1 L 677.2 607.7 L 676.1 606.3 L 674.9 604.8 L 673.5 603.4 L 672.1 601.9 L 670.6 600.5 L 669.0 599.0 Z"/></clipPath>
<clipPath id="cBU"><path d="M 669.0 599.0 A 407.0 407.0 0 0 0 1483.0 599.0 L 1483.0 599.0 L 1481.4 597.5 L 1479.9 596.1 L 1478.5 594.6 L 1477.1 593.2 L 1475.9 591.7 L 1474.8 590.3 L 1473.8 588.9 L 1472.9 587.5 L 1472.1 586.0 L 1471.4 584.6 L 1470.7 583.2 L 1470.2 581.8 L 1469.8 580.4 L 1469.5 578.9 L 1469.3 577.5 L 1469.1 576.0 L 1469.1 574.6 L 1469.1 573.1 L 1469.3 571.7 L 1469.6 570.2 L 1469.9 568.7 L 1470.3 567.2 L 1470.9 565.6 L 1471.5 564.1 L 1472.2 562.5 L 1472.1 561.0 L 1469.8 559.7 L 1467.5 558.4 L 1465.4 557.2 L 1463.4 555.9 L 1461.5 554.6 L 1459.7 553.3 L 1457.9 552.0 L 1456.3 550.7 L 1454.8 549.4 L 1453.4 548.1 L 1452.0 546.7 L 1450.8 545.4 L 1449.6 544.0 L 1448.6 542.7 L 1447.6 541.3 L 1446.7 539.9 L 1445.9 538.5 L 1445.2 537.0 L 1444.6 535.6 L 1444.1 534.1 L 1443.7 532.6 L 1443.3 531.1 L 1443.0 529.5 L 1442.8 527.9 L 1442.7 526.3 L 1441.0 525.0 L 1438.0 524.0 L 1435.2 523.0 L 1432.5 521.9 L 1429.8 520.8 L 1427.3 519.7 L 1424.9 518.7 L 1422.5 517.5 L 1420.3 516.4 L 1418.1 515.3 L 1416.0 514.1 L 1414.0 512.9 L 1412.1 511.7 L 1410.3 510.5 L 1408.6 509.3 L 1406.9 508.0 L 1405.3 506.7 L 1403.8 505.4 L 1402.4 504.0 L 1401.0 502.7 L 1399.7 501.3 L 1398.5 499.8 L 1397.4 498.4 L 1396.3 496.9 L 1395.3 495.4 L 1394.3 493.8 L 1391.2 492.9 L 1387.8 492.2 L 1384.5 491.4 L 1381.3 490.6 L 1378.2 489.8 L 1375.2 489.0 L 1372.3 488.2 L 1369.4 487.3 L 1366.6 486.4 L 1363.9 485.5 L 1361.3 484.5 L 1358.7 483.6 L 1356.3 482.6 L 1353.9 481.5 L 1351.5 480.5 L 1349.2 479.4 L 1347.0 478.2 L 1344.9 477.1 L 1342.8 475.9 L 1340.7 474.7 L 1338.7 473.4 L 1336.8 472.1 L 1334.9 470.8 L 1333.1 469.4 L 1331.3 468.0 L 1329.2 466.7 L 1325.5 466.3 L 1321.8 465.9 L 1318.2 465.5 L 1314.7 465.0 L 1311.2 464.5 L 1307.8 464.0 L 1304.5 463.4 L 1301.3 462.8 L 1298.1 462.2 L 1295.0 461.5 L 1292.0 460.8 L 1289.0 460.1 L 1286.0 459.3 L 1283.1 458.6 L 1280.3 457.7 L 1277.5 456.9 L 1274.8 456.0 L 1272.1 455.0 L 1269.4 454.0 L 1266.7 453.0 L 1264.1 452.0 L 1261.6 450.9 L 1259.0 449.8 L 1256.5 448.6 L 1254.0 447.4 L 1250.9 446.6 L 1247.1 446.6 L 1243.3 446.5 L 1239.5 446.4 L 1235.9 446.2 L 1232.3 446.1 L 1228.7 445.8 L 1225.2 445.6 L 1221.7 445.3 L 1218.3 445.0 L 1214.9 444.6 L 1211.6 444.2 L 1208.3 443.8 L 1205.0 443.3 L 1201.8 442.8 L 1198.6 442.2 L 1195.4 441.6 L 1192.3 441.0 L 1189.1 440.3 L 1186.0 439.6 L 1182.9 438.8 L 1179.8 438.0 L 1176.7 437.2 L 1173.6 436.3 L 1170.5 435.4 L 1167.4 434.4 L 1163.8 434.4 L 1160.1 434.7 L 1156.3 434.9 L 1152.7 435.2 L 1149.0 435.3 L 1145.4 435.5 L 1141.8 435.6 L 1138.3 435.7 L 1134.7 435.7 L 1131.2 435.7 L 1127.8 435.6 L 1124.3 435.5 L 1120.9 435.4 L 1117.4 435.2 L 1114.0 435.0 L 1110.6 434.7 L 1107.2 434.4 L 1103.8 434.1 L 1100.3 433.7 L 1096.9 433.3 L 1093.5 432.8 L 1090.0 432.3 L 1086.5 431.8 L 1083.0 431.2 L 1079.5 430.6 L 1076.0 429.9 L 1072.5 430.6 L 1069.0 431.2 L 1065.5 431.8 L 1062.0 432.3 L 1058.5 432.8 L 1055.1 433.3 L 1051.7 433.7 L 1048.2 434.1 L 1044.8 434.4 L 1041.4 434.7 L 1038.0 435.0 L 1034.6 435.2 L 1031.1 435.4 L 1027.7 435.5 L 1024.2 435.6 L 1020.8 435.7 L 1017.3 435.7 L 1013.7 435.7 L 1010.2 435.6 L 1006.6 435.5 L 1003.0 435.3 L 999.3 435.2 L 995.7 434.9 L 991.9 434.7 L 988.2 434.4 L 984.6 434.4 L 981.5 435.4 L 978.4 436.3 L 975.3 437.2 L 972.2 438.0 L 969.1 438.8 L 966.0 439.6 L 962.9 440.3 L 959.7 441.0 L 956.6 441.6 L 953.4 442.2 L 950.2 442.8 L 947.0 443.3 L 943.7 443.8 L 940.4 444.2 L 937.1 444.6 L 933.7 445.0 L 930.3 445.3 L 926.8 445.6 L 923.3 445.8 L 919.7 446.1 L 916.1 446.2 L 912.5 446.4 L 908.7 446.5 L 904.9 446.6 L 901.1 446.6 L 898.0 447.4 L 895.5 448.6 L 893.0 449.8 L 890.4 450.9 L 887.9 452.0 L 885.3 453.0 L 882.6 454.0 L 879.9 455.0 L 877.2 456.0 L 874.5 456.9 L 871.7 457.7 L 868.9 458.6 L 866.0 459.3 L 863.0 460.1 L 860.0 460.8 L 857.0 461.5 L 853.9 462.2 L 850.7 462.8 L 847.5 463.4 L 844.2 464.0 L 840.8 464.5 L 837.3 465.0 L 833.8 465.5 L 830.2 465.9 L 826.5 466.3 L 822.8 466.7 L 820.7 468.0 L 818.9 469.4 L 817.1 470.8 L 815.2 472.1 L 813.3 473.4 L 811.3 474.7 L 809.2 475.9 L 807.1 477.1 L 805.0 478.2 L 802.8 479.4 L 800.5 480.5 L 798.1 481.5 L 795.7 482.6 L 793.3 483.6 L 790.7 484.5 L 788.1 485.5 L 785.4 486.4 L 782.6 487.3 L 779.7 488.2 L 776.8 489.0 L 773.8 489.8 L 770.7 490.6 L 767.5 491.4 L 764.2 492.2 L 760.8 492.9 L 757.7 493.8 L 756.7 495.4 L 755.7 496.9 L 754.6 498.4 L 753.5 499.8 L 752.3 501.3 L 751.0 502.7 L 749.6 504.0 L 748.2 505.4 L 746.7 506.7 L 745.1 508.0 L 743.4 509.3 L 741.7 510.5 L 739.9 511.7 L 738.0 512.9 L 736.0 514.1 L 733.9 515.3 L 731.7 516.4 L 729.5 517.5 L 727.1 518.7 L 724.7 519.7 L 722.2 520.8 L 719.5 521.9 L 716.8 523.0 L 714.0 524.0 L 711.0 525.0 L 709.3 526.3 L 709.2 527.9 L 709.0 529.5 L 708.7 531.1 L 708.3 532.6 L 707.9 534.1 L 707.4 535.6 L 706.8 537.0 L 706.1 538.5 L 705.3 539.9 L 704.4 541.3 L 703.4 542.7 L 702.4 544.0 L 701.2 545.4 L 700.0 546.7 L 698.6 548.1 L 697.2 549.4 L 695.7 550.7 L 694.1 552.0 L 692.3 553.3 L 690.5 554.6 L 688.6 555.9 L 686.6 557.2 L 684.5 558.4 L 682.2 559.7 L 679.9 561.0 L 679.8 562.5 L 680.5 564.1 L 681.1 565.6 L 681.7 567.2 L 682.1 568.7 L 682.4 570.2 L 682.7 571.7 L 682.9 573.1 L 682.9 574.6 L 682.9 576.0 L 682.7 577.5 L 682.5 578.9 L 682.2 580.4 L 681.8 581.8 L 681.3 583.2 L 680.6 584.6 L 679.9 586.0 L 679.1 587.5 L 678.2 588.9 L 677.2 590.3 L 676.1 591.7 L 674.9 593.2 L 673.5 594.6 L 672.1 596.1 L 670.6 597.5 L 669.0 599.0 Z"/></clipPath>
<clipPath id="cEll"><path d="M 1483.0 599.0 L 1481.4 597.5 L 1479.9 596.1 L 1478.5 594.6 L 1477.1 593.2 L 1475.9 591.7 L 1474.8 590.3 L 1473.8 588.9 L 1472.9 587.5 L 1472.1 586.0 L 1471.4 584.6 L 1470.7 583.2 L 1470.2 581.8 L 1469.8 580.4 L 1469.5 578.9 L 1469.3 577.5 L 1469.1 576.0 L 1469.1 574.6 L 1469.1 573.1 L 1469.3 571.7 L 1469.6 570.2 L 1469.9 568.7 L 1470.3 567.2 L 1470.9 565.6 L 1471.5 564.1 L 1472.2 562.5 L 1472.1 561.0 L 1469.8 559.7 L 1467.5 558.4 L 1465.4 557.2 L 1463.4 555.9 L 1461.5 554.6 L 1459.7 553.3 L 1457.9 552.0 L 1456.3 550.7 L 1454.8 549.4 L 1453.4 548.1 L 1452.0 546.7 L 1450.8 545.4 L 1449.6 544.0 L 1448.6 542.7 L 1447.6 541.3 L 1446.7 539.9 L 1445.9 538.5 L 1445.2 537.0 L 1444.6 535.6 L 1444.1 534.1 L 1443.7 532.6 L 1443.3 531.1 L 1443.0 529.5 L 1442.8 527.9 L 1442.7 526.3 L 1441.0 525.0 L 1438.0 524.0 L 1435.2 523.0 L 1432.5 521.9 L 1429.8 520.8 L 1427.3 519.7 L 1424.9 518.7 L 1422.5 517.5 L 1420.3 516.4 L 1418.1 515.3 L 1416.0 514.1 L 1414.0 512.9 L 1412.1 511.7 L 1410.3 510.5 L 1408.6 509.3 L 1406.9 508.0 L 1405.3 506.7 L 1403.8 505.4 L 1402.4 504.0 L 1401.0 502.7 L 1399.7 501.3 L 1398.5 499.8 L 1397.4 498.4 L 1396.3 496.9 L 1395.3 495.4 L 1394.3 493.8 L 1391.2 492.9 L 1387.8 492.2 L 1384.5 491.4 L 1381.3 490.6 L 1378.2 489.8 L 1375.2 489.0 L 1372.3 488.2 L 1369.4 487.3 L 1366.6 486.4 L 1363.9 485.5 L 1361.3 484.5 L 1358.7 483.6 L 1356.3 482.6 L 1353.9 481.5 L 1351.5 480.5 L 1349.2 479.4 L 1347.0 478.2 L 1344.9 477.1 L 1342.8 475.9 L 1340.7 474.7 L 1338.7 473.4 L 1336.8 472.1 L 1334.9 470.8 L 1333.1 469.4 L 1331.3 468.0 L 1329.2 466.7 L 1325.5 466.3 L 1321.8 465.9 L 1318.2 465.5 L 1314.7 465.0 L 1311.2 464.5 L 1307.8 464.0 L 1304.5 463.4 L 1301.3 462.8 L 1298.1 462.2 L 1295.0 461.5 L 1292.0 460.8 L 1289.0 460.1 L 1286.0 459.3 L 1283.1 458.6 L 1280.3 457.7 L 1277.5 456.9 L 1274.8 456.0 L 1272.1 455.0 L 1269.4 454.0 L 1266.7 453.0 L 1264.1 452.0 L 1261.6 450.9 L 1259.0 449.8 L 1256.5 448.6 L 1254.0 447.4 L 1250.9 446.6 L 1247.1 446.6 L 1243.3 446.5 L 1239.5 446.4 L 1235.9 446.2 L 1232.3 446.1 L 1228.7 445.8 L 1225.2 445.6 L 1221.7 445.3 L 1218.3 445.0 L 1214.9 444.6 L 1211.6 444.2 L 1208.3 443.8 L 1205.0 443.3 L 1201.8 442.8 L 1198.6 442.2 L 1195.4 441.6 L 1192.3 441.0 L 1189.1 440.3 L 1186.0 439.6 L 1182.9 438.8 L 1179.8 438.0 L 1176.7 437.2 L 1173.6 436.3 L 1170.5 435.4 L 1167.4 434.4 L 1163.8 434.4 L 1160.1 434.7 L 1156.3 434.9 L 1152.7 435.2 L 1149.0 435.3 L 1145.4 435.5 L 1141.8 435.6 L 1138.3 435.7 L 1134.7 435.7 L 1131.2 435.7 L 1127.8 435.6 L 1124.3 435.5 L 1120.9 435.4 L 1117.4 435.2 L 1114.0 435.0 L 1110.6 434.7 L 1107.2 434.4 L 1103.8 434.1 L 1100.3 433.7 L 1096.9 433.3 L 1093.5 432.8 L 1090.0 432.3 L 1086.5 431.8 L 1083.0 431.2 L 1079.5 430.6 L 1076.0 429.9 L 1072.5 430.6 L 1069.0 431.2 L 1065.5 431.8 L 1062.0 432.3 L 1058.5 432.8 L 1055.1 433.3 L 1051.7 433.7 L 1048.2 434.1 L 1044.8 434.4 L 1041.4 434.7 L 1038.0 435.0 L 1034.6 435.2 L 1031.1 435.4 L 1027.7 435.5 L 1024.2 435.6 L 1020.8 435.7 L 1017.3 435.7 L 1013.7 435.7 L 1010.2 435.6 L 1006.6 435.5 L 1003.0 435.3 L 999.3 435.2 L 995.7 434.9 L 991.9 434.7 L 988.2 434.4 L 984.6 434.4 L 981.5 435.4 L 978.4 436.3 L 975.3 437.2 L 972.2 438.0 L 969.1 438.8 L 966.0 439.6 L 962.9 440.3 L 959.7 441.0 L 956.6 441.6 L 953.4 442.2 L 950.2 442.8 L 947.0 443.3 L 943.7 443.8 L 940.4 444.2 L 937.1 444.6 L 933.7 445.0 L 930.3 445.3 L 926.8 445.6 L 923.3 445.8 L 919.7 446.1 L 916.1 446.2 L 912.5 446.4 L 908.7 446.5 L 904.9 446.6 L 901.1 446.6 L 898.0 447.4 L 895.5 448.6 L 893.0 449.8 L 890.4 450.9 L 887.9 452.0 L 885.3 453.0 L 882.6 454.0 L 879.9 455.0 L 877.2 456.0 L 874.5 456.9 L 871.7 457.7 L 868.9 458.6 L 866.0 459.3 L 863.0 460.1 L 860.0 460.8 L 857.0 461.5 L 853.9 462.2 L 850.7 462.8 L 847.5 463.4 L 844.2 464.0 L 840.8 464.5 L 837.3 465.0 L 833.8 465.5 L 830.2 465.9 L 826.5 466.3 L 822.8 466.7 L 820.7 468.0 L 818.9 469.4 L 817.1 470.8 L 815.2 472.1 L 813.3 473.4 L 811.3 474.7 L 809.2 475.9 L 807.1 477.1 L 805.0 478.2 L 802.8 479.4 L 800.5 480.5 L 798.1 481.5 L 795.7 482.6 L 793.3 483.6 L 790.7 484.5 L 788.1 485.5 L 785.4 486.4 L 782.6 487.3 L 779.7 488.2 L 776.8 489.0 L 773.8 489.8 L 770.7 490.6 L 767.5 491.4 L 764.2 492.2 L 760.8 492.9 L 757.7 493.8 L 756.7 495.4 L 755.7 496.9 L 754.6 498.4 L 753.5 499.8 L 752.3 501.3 L 751.0 502.7 L 749.6 504.0 L 748.2 505.4 L 746.7 506.7 L 745.1 508.0 L 743.4 509.3 L 741.7 510.5 L 739.9 511.7 L 738.0 512.9 L 736.0 514.1 L 733.9 515.3 L 731.7 516.4 L 729.5 517.5 L 727.1 518.7 L 724.7 519.7 L 722.2 520.8 L 719.5 521.9 L 716.8 523.0 L 714.0 524.0 L 711.0 525.0 L 709.3 526.3 L 709.2 527.9 L 709.0 529.5 L 708.7 531.1 L 708.3 532.6 L 707.9 534.1 L 707.4 535.6 L 706.8 537.0 L 706.1 538.5 L 705.3 539.9 L 704.4 541.3 L 703.4 542.7 L 702.4 544.0 L 701.2 545.4 L 700.0 546.7 L 698.6 548.1 L 697.2 549.4 L 695.7 550.7 L 694.1 552.0 L 692.3 553.3 L 690.5 554.6 L 688.6 555.9 L 686.6 557.2 L 684.5 558.4 L 682.2 559.7 L 679.9 561.0 L 679.8 562.5 L 680.5 564.1 L 681.1 565.6 L 681.7 567.2 L 682.1 568.7 L 682.4 570.2 L 682.7 571.7 L 682.9 573.1 L 682.9 574.6 L 682.9 576.0 L 682.7 577.5 L 682.5 578.9 L 682.2 580.4 L 681.8 581.8 L 681.3 583.2 L 680.6 584.6 L 679.9 586.0 L 679.1 587.5 L 678.2 588.9 L 677.2 590.3 L 676.1 591.7 L 674.9 593.2 L 673.5 594.6 L 672.1 596.1 L 670.6 597.5 L 669.0 599.0 L 669.0 599.0 L 670.6 600.5 L 672.1 601.9 L 673.5 603.4 L 674.9 604.8 L 676.1 606.3 L 677.2 607.7 L 678.2 609.1 L 679.1 610.5 L 679.9 612.0 L 680.6 613.4 L 681.3 614.8 L 681.8 616.2 L 682.2 617.6 L 682.5 619.1 L 682.7 620.5 L 682.9 622.0 L 682.9 623.4 L 682.9 624.9 L 682.7 626.3 L 682.4 627.8 L 682.1 629.3 L 681.7 630.8 L 681.1 632.4 L 680.5 633.9 L 679.8 635.5 L 679.9 637.0 L 682.2 638.3 L 684.5 639.6 L 686.6 640.8 L 688.6 642.1 L 690.5 643.4 L 692.3 644.7 L 694.1 646.0 L 695.7 647.3 L 697.2 648.6 L 698.6 649.9 L 700.0 651.3 L 701.2 652.6 L 702.4 654.0 L 703.4 655.3 L 704.4 656.7 L 705.3 658.1 L 706.1 659.5 L 706.8 661.0 L 707.4 662.4 L 707.9 663.9 L 708.3 665.4 L 708.7 666.9 L 709.0 668.5 L 709.2 670.1 L 709.3 671.7 L 711.0 673.0 L 714.0 674.0 L 716.8 675.0 L 719.5 676.1 L 722.2 677.2 L 724.7 678.3 L 727.1 679.3 L 729.5 680.5 L 731.7 681.6 L 733.9 682.7 L 736.0 683.9 L 738.0 685.1 L 739.9 686.3 L 741.7 687.5 L 743.4 688.7 L 745.1 690.0 L 746.7 691.3 L 748.2 692.6 L 749.6 694.0 L 751.0 695.3 L 752.3 696.7 L 753.5 698.2 L 754.6 699.6 L 755.7 701.1 L 756.7 702.6 L 757.7 704.2 L 760.8 705.1 L 764.2 705.8 L 767.5 706.6 L 770.7 707.4 L 773.8 708.2 L 776.8 709.0 L 779.7 709.8 L 782.6 710.7 L 785.4 711.6 L 788.1 712.5 L 790.7 713.5 L 793.3 714.4 L 795.7 715.4 L 798.1 716.5 L 800.5 717.5 L 802.8 718.6 L 805.0 719.8 L 807.1 720.9 L 809.2 722.1 L 811.3 723.3 L 813.3 724.6 L 815.2 725.9 L 817.1 727.2 L 818.9 728.6 L 820.7 730.0 L 822.8 731.3 L 826.5 731.7 L 830.2 732.1 L 833.8 732.5 L 837.3 733.0 L 840.8 733.5 L 844.2 734.0 L 847.5 734.6 L 850.7 735.2 L 853.9 735.8 L 857.0 736.5 L 860.0 737.2 L 863.0 737.9 L 866.0 738.7 L 868.9 739.4 L 871.7 740.3 L 874.5 741.1 L 877.2 742.0 L 879.9 743.0 L 882.6 744.0 L 885.3 745.0 L 887.9 746.0 L 890.4 747.1 L 893.0 748.2 L 895.5 749.4 L 898.0 750.6 L 901.1 751.4 L 904.9 751.4 L 908.7 751.5 L 912.5 751.6 L 916.1 751.8 L 919.7 751.9 L 923.3 752.2 L 926.8 752.4 L 930.3 752.7 L 933.7 753.0 L 937.1 753.4 L 940.4 753.8 L 943.7 754.2 L 947.0 754.7 L 950.2 755.2 L 953.4 755.8 L 956.6 756.4 L 959.7 757.0 L 962.9 757.7 L 966.0 758.4 L 969.1 759.2 L 972.2 760.0 L 975.3 760.8 L 978.4 761.7 L 981.5 762.6 L 984.6 763.6 L 988.2 763.6 L 991.9 763.3 L 995.7 763.1 L 999.3 762.8 L 1003.0 762.7 L 1006.6 762.5 L 1010.2 762.4 L 1013.7 762.3 L 1017.3 762.3 L 1020.8 762.3 L 1024.2 762.4 L 1027.7 762.5 L 1031.1 762.6 L 1034.6 762.8 L 1038.0 763.0 L 1041.4 763.3 L 1044.8 763.6 L 1048.2 763.9 L 1051.7 764.3 L 1055.1 764.7 L 1058.5 765.2 L 1062.0 765.7 L 1065.5 766.2 L 1069.0 766.8 L 1072.5 767.4 L 1076.0 768.1 L 1079.5 767.4 L 1083.0 766.8 L 1086.5 766.2 L 1090.0 765.7 L 1093.5 765.2 L 1096.9 764.7 L 1100.3 764.3 L 1103.8 763.9 L 1107.2 763.6 L 1110.6 763.3 L 1114.0 763.0 L 1117.4 762.8 L 1120.9 762.6 L 1124.3 762.5 L 1127.8 762.4 L 1131.2 762.3 L 1134.7 762.3 L 1138.3 762.3 L 1141.8 762.4 L 1145.4 762.5 L 1149.0 762.7 L 1152.7 762.8 L 1156.3 763.1 L 1160.1 763.3 L 1163.8 763.6 L 1167.4 763.6 L 1170.5 762.6 L 1173.6 761.7 L 1176.7 760.8 L 1179.8 760.0 L 1182.9 759.2 L 1186.0 758.4 L 1189.1 757.7 L 1192.3 757.0 L 1195.4 756.4 L 1198.6 755.8 L 1201.8 755.2 L 1205.0 754.7 L 1208.3 754.2 L 1211.6 753.8 L 1214.9 753.4 L 1218.3 753.0 L 1221.7 752.7 L 1225.2 752.4 L 1228.7 752.2 L 1232.3 751.9 L 1235.9 751.8 L 1239.5 751.6 L 1243.3 751.5 L 1247.1 751.4 L 1250.9 751.4 L 1254.0 750.6 L 1256.5 749.4 L 1259.0 748.2 L 1261.6 747.1 L 1264.1 746.0 L 1266.7 745.0 L 1269.4 744.0 L 1272.1 743.0 L 1274.8 742.0 L 1277.5 741.1 L 1280.3 740.3 L 1283.1 739.4 L 1286.0 738.7 L 1289.0 737.9 L 1292.0 737.2 L 1295.0 736.5 L 1298.1 735.8 L 1301.3 735.2 L 1304.5 734.6 L 1307.8 734.0 L 1311.2 733.5 L 1314.7 733.0 L 1318.2 732.5 L 1321.8 732.1 L 1325.5 731.7 L 1329.2 731.3 L 1331.3 730.0 L 1333.1 728.6 L 1334.9 727.2 L 1336.8 725.9 L 1338.7 724.6 L 1340.7 723.3 L 1342.8 722.1 L 1344.9 720.9 L 1347.0 719.8 L 1349.2 718.6 L 1351.5 717.5 L 1353.9 716.5 L 1356.3 715.4 L 1358.7 714.4 L 1361.3 713.5 L 1363.9 712.5 L 1366.6 711.6 L 1369.4 710.7 L 1372.3 709.8 L 1375.2 709.0 L 1378.2 708.2 L 1381.3 707.4 L 1384.5 706.6 L 1387.8 705.8 L 1391.2 705.1 L 1394.3 704.2 L 1395.3 702.6 L 1396.3 701.1 L 1397.4 699.6 L 1398.5 698.2 L 1399.7 696.7 L 1401.0 695.3 L 1402.4 694.0 L 1403.8 692.6 L 1405.3 691.3 L 1406.9 690.0 L 1408.6 688.7 L 1410.3 687.5 L 1412.1 686.3 L 1414.0 685.1 L 1416.0 683.9 L 1418.1 682.7 L 1420.3 681.6 L 1422.5 680.5 L 1424.9 679.3 L 1427.3 678.3 L 1429.8 677.2 L 1432.5 676.1 L 1435.2 675.0 L 1438.0 674.0 L 1441.0 673.0 L 1442.7 671.7 L 1442.8 670.1 L 1443.0 668.5 L 1443.3 666.9 L 1443.7 665.4 L 1444.1 663.9 L 1444.6 662.4 L 1445.2 661.0 L 1445.9 659.5 L 1446.7 658.1 L 1447.6 656.7 L 1448.6 655.3 L 1449.6 654.0 L 1450.8 652.6 L 1452.0 651.3 L 1453.4 649.9 L 1454.8 648.6 L 1456.3 647.3 L 1457.9 646.0 L 1459.7 644.7 L 1461.5 643.4 L 1463.4 642.1 L 1465.4 640.8 L 1467.5 639.6 L 1469.8 638.3 L 1472.1 637.0 L 1472.2 635.5 L 1471.5 633.9 L 1470.9 632.4 L 1470.3 630.8 L 1469.9 629.3 L 1469.6 627.8 L 1469.3 626.3 L 1469.1 624.9 L 1469.1 623.4 L 1469.1 622.0 L 1469.3 620.5 L 1469.5 619.1 L 1469.8 617.6 L 1470.2 616.2 L 1470.7 614.8 L 1471.4 613.4 L 1472.1 612.0 L 1472.9 610.5 L 1473.8 609.1 L 1474.8 607.7 L 1475.9 606.3 L 1477.1 604.8 L 1478.5 603.4 L 1479.9 601.9 L 1481.4 600.5 L 1483.0 599.0 Z"/></clipPath>
<radialGradient id="gDome" gradientUnits="userSpaceOnUse" cx="1260" cy="290" r="650"><stop offset="0" stop-color="#1862b4"/><stop offset="0.4" stop-color="#1254a2"/><stop offset="0.8" stop-color="#0c478a"/><stop offset="1" stop-color="#0a4080"/></radialGradient>
<radialGradient id="gDimp" cx="0.38" cy="0.52" r="0.62" fx="0.45" fy="0.6"><stop offset="0" stop-color="#1d66b4"/><stop offset="0.3" stop-color="#0f4f9a"/><stop offset="0.72" stop-color="#09427f"/><stop offset="1" stop-color="#1152a0"/></radialGradient>
</defs>
<path fill-rule="evenodd" d="M 669.0 599.0 A 407.0 407.0 0 0 1 1483.0 599.0 Z M 1483.0 599.0 L 1483.0 599.0 L 1481.4 597.5 L 1479.9 596.1 L 1478.5 594.6 L 1477.1 593.2 L 1475.9 591.7 L 1474.8 590.3 L 1473.8 588.9 L 1472.9 587.5 L 1472.1 586.0 L 1471.4 584.6 L 1470.7 583.2 L 1470.2 581.8 L 1469.8 580.4 L 1469.5 578.9 L 1469.3 577.5 L 1469.1 576.0 L 1469.1 574.6 L 1469.1 573.1 L 1469.3 571.7 L 1469.6 570.2 L 1469.9 568.7 L 1470.3 567.2 L 1470.9 565.6 L 1471.5 564.1 L 1472.2 562.5 L 1472.1 561.0 L 1469.8 559.7 L 1467.5 558.4 L 1465.4 557.2 L 1463.4 555.9 L 1461.5 554.6 L 1459.7 553.3 L 1457.9 552.0 L 1456.3 550.7 L 1454.8 549.4 L 1453.4 548.1 L 1452.0 546.7 L 1450.8 545.4 L 1449.6 544.0 L 1448.6 542.7 L 1447.6 541.3 L 1446.7 539.9 L 1445.9 538.5 L 1445.2 537.0 L 1444.6 535.6 L 1444.1 534.1 L 1443.7 532.6 L 1443.3 531.1 L 1443.0 529.5 L 1442.8 527.9 L 1442.7 526.3 L 1441.0 525.0 L 1438.0 524.0 L 1435.2 523.0 L 1432.5 521.9 L 1429.8 520.8 L 1427.3 519.7 L 1424.9 518.7 L 1422.5 517.5 L 1420.3 516.4 L 1418.1 515.3 L 1416.0 514.1 L 1414.0 512.9 L 1412.1 511.7 L 1410.3 510.5 L 1408.6 509.3 L 1406.9 508.0 L 1405.3 506.7 L 1403.8 505.4 L 1402.4 504.0 L 1401.0 502.7 L 1399.7 501.3 L 1398.5 499.8 L 1397.4 498.4 L 1396.3 496.9 L 1395.3 495.4 L 1394.3 493.8 L 1391.2 492.9 L 1387.8 492.2 L 1384.5 491.4 L 1381.3 490.6 L 1378.2 489.8 L 1375.2 489.0 L 1372.3 488.2 L 1369.4 487.3 L 1366.6 486.4 L 1363.9 485.5 L 1361.3 484.5 L 1358.7 483.6 L 1356.3 482.6 L 1353.9 481.5 L 1351.5 480.5 L 1349.2 479.4 L 1347.0 478.2 L 1344.9 477.1 L 1342.8 475.9 L 1340.7 474.7 L 1338.7 473.4 L 1336.8 472.1 L 1334.9 470.8 L 1333.1 469.4 L 1331.3 468.0 L 1329.2 466.7 L 1325.5 466.3 L 1321.8 465.9 L 1318.2 465.5 L 1314.7 465.0 L 1311.2 464.5 L 1307.8 464.0 L 1304.5 463.4 L 1301.3 462.8 L 1298.1 462.2 L 1295.0 461.5 L 1292.0 460.8 L 1289.0 460.1 L 1286.0 459.3 L 1283.1 458.6 L 1280.3 457.7 L 1277.5 456.9 L 1274.8 456.0 L 1272.1 455.0 L 1269.4 454.0 L 1266.7 453.0 L 1264.1 452.0 L 1261.6 450.9 L 1259.0 449.8 L 1256.5 448.6 L 1254.0 447.4 L 1250.9 446.6 L 1247.1 446.6 L 1243.3 446.5 L 1239.5 446.4 L 1235.9 446.2 L 1232.3 446.1 L 1228.7 445.8 L 1225.2 445.6 L 1221.7 445.3 L 1218.3 445.0 L 1214.9 444.6 L 1211.6 444.2 L 1208.3 443.8 L 1205.0 443.3 L 1201.8 442.8 L 1198.6 442.2 L 1195.4 441.6 L 1192.3 441.0 L 1189.1 440.3 L 1186.0 439.6 L 1182.9 438.8 L 1179.8 438.0 L 1176.7 437.2 L 1173.6 436.3 L 1170.5 435.4 L 1167.4 434.4 L 1163.8 434.4 L 1160.1 434.7 L 1156.3 434.9 L 1152.7 435.2 L 1149.0 435.3 L 1145.4 435.5 L 1141.8 435.6 L 1138.3 435.7 L 1134.7 435.7 L 1131.2 435.7 L 1127.8 435.6 L 1124.3 435.5 L 1120.9 435.4 L 1117.4 435.2 L 1114.0 435.0 L 1110.6 434.7 L 1107.2 434.4 L 1103.8 434.1 L 1100.3 433.7 L 1096.9 433.3 L 1093.5 432.8 L 1090.0 432.3 L 1086.5 431.8 L 1083.0 431.2 L 1079.5 430.6 L 1076.0 429.9 L 1072.5 430.6 L 1069.0 431.2 L 1065.5 431.8 L 1062.0 432.3 L 1058.5 432.8 L 1055.1 433.3 L 1051.7 433.7 L 1048.2 434.1 L 1044.8 434.4 L 1041.4 434.7 L 1038.0 435.0 L 1034.6 435.2 L 1031.1 435.4 L 1027.7 435.5 L 1024.2 435.6 L 1020.8 435.7 L 1017.3 435.7 L 1013.7 435.7 L 1010.2 435.6 L 1006.6 435.5 L 1003.0 435.3 L 999.3 435.2 L 995.7 434.9 L 991.9 434.7 L 988.2 434.4 L 984.6 434.4 L 981.5 435.4 L 978.4 436.3 L 975.3 437.2 L 972.2 438.0 L 969.1 438.8 L 966.0 439.6 L 962.9 440.3 L 959.7 441.0 L 956.6 441.6 L 953.4 442.2 L 950.2 442.8 L 947.0 443.3 L 943.7 443.8 L 940.4 444.2 L 937.1 444.6 L 933.7 445.0 L 930.3 445.3 L 926.8 445.6 L 923.3 445.8 L 919.7 446.1 L 916.1 446.2 L 912.5 446.4 L 908.7 446.5 L 904.9 446.6 L 901.1 446.6 L 898.0 447.4 L 895.5 448.6 L 893.0 449.8 L 890.4 450.9 L 887.9 452.0 L 885.3 453.0 L 882.6 454.0 L 879.9 455.0 L 877.2 456.0 L 874.5 456.9 L 871.7 457.7 L 868.9 458.6 L 866.0 459.3 L 863.0 460.1 L 860.0 460.8 L 857.0 461.5 L 853.9 462.2 L 850.7 462.8 L 847.5 463.4 L 844.2 464.0 L 840.8 464.5 L 837.3 465.0 L 833.8 465.5 L 830.2 465.9 L 826.5 466.3 L 822.8 466.7 L 820.7 468.0 L 818.9 469.4 L 817.1 470.8 L 815.2 472.1 L 813.3 473.4 L 811.3 474.7 L 809.2 475.9 L 807.1 477.1 L 805.0 478.2 L 802.8 479.4 L 800.5 480.5 L 798.1 481.5 L 795.7 482.6 L 793.3 483.6 L 790.7 484.5 L 788.1 485.5 L 785.4 486.4 L 782.6 487.3 L 779.7 488.2 L 776.8 489.0 L 773.8 489.8 L 770.7 490.6 L 767.5 491.4 L 764.2 492.2 L 760.8 492.9 L 757.7 493.8 L 756.7 495.4 L 755.7 496.9 L 754.6 498.4 L 753.5 499.8 L 752.3 501.3 L 751.0 502.7 L 749.6 504.0 L 748.2 505.4 L 746.7 506.7 L 745.1 508.0 L 743.4 509.3 L 741.7 510.5 L 739.9 511.7 L 738.0 512.9 L 736.0 514.1 L 733.9 515.3 L 731.7 516.4 L 729.5 517.5 L 727.1 518.7 L 724.7 519.7 L 722.2 520.8 L 719.5 521.9 L 716.8 523.0 L 714.0 524.0 L 711.0 525.0 L 709.3 526.3 L 709.2 527.9 L 709.0 529.5 L 708.7 531.1 L 708.3 532.6 L 707.9 534.1 L 707.4 535.6 L 706.8 537.0 L 706.1 538.5 L 705.3 539.9 L 704.4 541.3 L 703.4 542.7 L 702.4 544.0 L 701.2 545.4 L 700.0 546.7 L 698.6 548.1 L 697.2 549.4 L 695.7 550.7 L 694.1 552.0 L 692.3 553.3 L 690.5 554.6 L 688.6 555.9 L 686.6 557.2 L 684.5 558.4 L 682.2 559.7 L 679.9 561.0 L 679.8 562.5 L 680.5 564.1 L 681.1 565.6 L 681.7 567.2 L 682.1 568.7 L 682.4 570.2 L 682.7 571.7 L 682.9 573.1 L 682.9 574.6 L 682.9 576.0 L 682.7 577.5 L 682.5 578.9 L 682.2 580.4 L 681.8 581.8 L 681.3 583.2 L 680.6 584.6 L 679.9 586.0 L 679.1 587.5 L 678.2 588.9 L 677.2 590.3 L 676.1 591.7 L 674.9 593.2 L 673.5 594.6 L 672.1 596.1 L 670.6 597.5 L 669.0 599.0 Z" fill="url(#gDome)"/>
<g clip-path="url(#cTop)" fill="url(#gDimp)"><ellipse cx="1030.9" cy="437.4" rx="41.3" ry="45.4" transform="rotate(-105.6 1030.9 437.4)"/><ellipse cx="942.6" cy="445.8" rx="39.2" ry="45.4" transform="rotate(-131.0 942.6 445.8)"/><ellipse cx="861.0" cy="462.1" rx="35.2" ry="45.4" transform="rotate(-147.5 861.0 462.1)"/><ellipse cx="790.2" cy="485.5" rx="29.5" ry="45.4" transform="rotate(-158.3 790.2 485.5)"/><ellipse cx="733.7" cy="514.9" rx="22.2" ry="45.4" transform="rotate(-166.2 733.7 514.9)"/><ellipse cx="694.3" cy="548.8" rx="13.9" ry="45.4" transform="rotate(-172.5 694.3 548.8)"/><ellipse cx="674.1" cy="585.5" rx="4.9" ry="45.4" transform="rotate(-178.1 674.1 585.5)"/><ellipse cx="1477.9" cy="585.7" rx="4.9" ry="45.4" transform="rotate(-1.9 1477.9 585.7)"/><ellipse cx="1457.8" cy="549.0" rx="13.9" ry="45.4" transform="rotate(-7.5 1457.8 549.0)"/><ellipse cx="1418.5" cy="515.1" rx="22.2" ry="45.4" transform="rotate(-13.8 1418.5 515.1)"/><ellipse cx="1362.1" cy="485.6" rx="29.4" ry="45.4" transform="rotate(-21.6 1362.1 485.6)"/><ellipse cx="1291.3" cy="462.2" rx="35.2" ry="45.4" transform="rotate(-32.4 1291.3 462.2)"/><ellipse cx="1209.8" cy="445.8" rx="39.2" ry="45.4" transform="rotate(-48.9 1209.8 445.8)"/><ellipse cx="1121.5" cy="437.4" rx="41.3" ry="45.4" transform="rotate(-74.3 1121.5 437.4)"/><ellipse cx="1043.0" cy="354.1" rx="33.1" ry="41.8" transform="rotate(-97.7 1043.0 354.1)"/><ellipse cx="953.1" cy="361.6" rx="31.4" ry="41.8" transform="rotate(-117.4 953.1 361.6)"/><ellipse cx="869.9" cy="377.6" rx="27.8" ry="41.8" transform="rotate(-133.0 869.9 377.6)"/><ellipse cx="797.8" cy="401.1" rx="22.5" ry="41.8" transform="rotate(-144.6 797.8 401.1)"/><ellipse cx="740.7" cy="430.9" rx="15.7" ry="41.8" transform="rotate(-153.4 740.7 430.9)"/><ellipse cx="701.7" cy="465.4" rx="8.0" ry="41.8" transform="rotate(-160.4 701.7 465.4)"/><ellipse cx="1457.7" cy="475.6" rx="5.6" ry="41.8" transform="rotate(-17.9 1457.7 475.6)"/><ellipse cx="1424.2" cy="440.2" rx="13.7" ry="41.8" transform="rotate(-24.5 1424.2 440.2)"/><ellipse cx="1371.9" cy="408.9" rx="20.7" ry="41.8" transform="rotate(-32.7 1371.9 408.9)"/><ellipse cx="1303.6" cy="383.5" rx="26.5" ry="41.8" transform="rotate(-43.4 1303.6 383.5)"/><ellipse cx="1223.0" cy="365.3" rx="30.6" ry="41.8" transform="rotate(-57.8 1223.0 365.3)"/><ellipse cx="1134.6" cy="355.3" rx="32.9" ry="41.8" transform="rotate(-76.5 1134.6 355.3)"/><ellipse cx="1063.9" cy="287.6" rx="26.7" ry="41.8" transform="rotate(-92.2 1063.9 287.6)"/><ellipse cx="973.7" cy="293.6" rx="25.3" ry="41.8" transform="rotate(-108.5 973.7 293.6)"/><ellipse cx="889.8" cy="308.7" rx="21.9" ry="41.8" transform="rotate(-122.7 889.8 308.7)"/><ellipse cx="817.7" cy="332.1" rx="16.6" ry="41.8" transform="rotate(-134.1 817.7 332.1)"/><ellipse cx="761.8" cy="362.1" rx="9.8" ry="41.8" transform="rotate(-143.0 761.8 362.1)"/><ellipse cx="725.7" cy="397.0" rx="2.0" ry="41.8" transform="rotate(-150.0 725.7 397.0)"/><ellipse cx="1418.9" cy="387.4" rx="4.1" ry="41.8" transform="rotate(-31.7 1418.9 387.4)"/><ellipse cx="1377.2" cy="353.6" rx="11.8" ry="41.8" transform="rotate(-39.2 1377.2 353.6)"/><ellipse cx="1316.7" cy="325.2" rx="18.2" ry="41.8" transform="rotate(-48.7 1316.7 325.2)"/><ellipse cx="1241.0" cy="303.9" rx="23.0" ry="41.8" transform="rotate(-60.8 1241.0 303.9)"/><ellipse cx="1154.9" cy="291.1" rx="25.9" ry="41.8" transform="rotate(-75.6 1154.9 291.1)"/><ellipse cx="1099.7" cy="237.7" rx="18.7" ry="41.8" transform="rotate(-86.3 1099.7 237.7)"/><ellipse cx="1010.0" cy="240.3" rx="18.1" ry="41.8" transform="rotate(-100.4 1010.0 240.3)"/><ellipse cx="925.7" cy="253.2" rx="15.2" ry="41.8" transform="rotate(-113.5 925.7 253.2)"/><ellipse cx="853.5" cy="275.4" rx="10.2" ry="41.8" transform="rotate(-124.5 853.5 275.4)"/><ellipse cx="799.4" cy="305.3" rx="3.4" ry="41.8" transform="rotate(-133.3 799.4 305.3)"/><ellipse cx="1329.5" cy="290.3" rx="6.8" ry="41.8" transform="rotate(-50.6 1329.5 290.3)"/><ellipse cx="1266.2" cy="263.8" rx="12.8" ry="41.8" transform="rotate(-60.4 1266.2 263.8)"/><ellipse cx="1187.4" cy="245.8" rx="16.9" ry="41.8" transform="rotate(-72.5 1187.4 245.8)"/><ellipse cx="1076.0" cy="206.0" rx="8.1" ry="32.6" transform="rotate(-90.0 1076.0 206.0)"/><ellipse cx="1004.2" cy="210.3" rx="7.3" ry="32.6" transform="rotate(-100.5 1004.2 210.3)"/><ellipse cx="938.3" cy="222.8" rx="5.1" ry="32.6" transform="rotate(-110.1 938.3 222.8)"/><ellipse cx="883.5" cy="242.5" rx="1.7" ry="32.6" transform="rotate(-118.4 883.5 242.5)"/><ellipse cx="1268.5" cy="242.5" rx="1.7" ry="32.6" transform="rotate(-61.6 1268.5 242.5)"/><ellipse cx="1213.7" cy="222.8" rx="5.1" ry="32.6" transform="rotate(-69.9 1213.7 222.8)"/><ellipse cx="1147.8" cy="210.3" rx="7.3" ry="32.6" transform="rotate(-79.5 1147.8 210.3)"/><ellipse cx="1096.4" cy="194.8" rx="2.3" ry="32.6" transform="rotate(-87.1 1096.4 194.8)"/><ellipse cx="1025.0" cy="197.2" rx="1.9" ry="32.6" transform="rotate(-97.2 1025.0 197.2)"/><ellipse cx="1165.0" cy="203.3" rx="0.8" ry="32.6" transform="rotate(-77.3 1165.0 203.3)"/></g>
<path d="M 1483.0 599.0 L 1481.4 597.5 L 1479.9 596.1 L 1478.5 594.6 L 1477.1 593.2 L 1475.9 591.7 L 1474.8 590.3 L 1473.8 588.9 L 1472.9 587.5 L 1472.1 586.0 L 1471.4 584.6 L 1470.7 583.2 L 1470.2 581.8 L 1469.8 580.4 L 1469.5 578.9 L 1469.3 577.5 L 1469.1 576.0 L 1469.1 574.6 L 1469.1 573.1 L 1469.3 571.7 L 1469.6 570.2 L 1469.9 568.7 L 1470.3 567.2 L 1470.9 565.6 L 1471.5 564.1 L 1472.2 562.5 L 1472.1 561.0 L 1469.8 559.7 L 1467.5 558.4 L 1465.4 557.2 L 1463.4 555.9 L 1461.5 554.6 L 1459.7 553.3 L 1457.9 552.0 L 1456.3 550.7 L 1454.8 549.4 L 1453.4 548.1 L 1452.0 546.7 L 1450.8 545.4 L 1449.6 544.0 L 1448.6 542.7 L 1447.6 541.3 L 1446.7 539.9 L 1445.9 538.5 L 1445.2 537.0 L 1444.6 535.6 L 1444.1 534.1 L 1443.7 532.6 L 1443.3 531.1 L 1443.0 529.5 L 1442.8 527.9 L 1442.7 526.3 L 1441.0 525.0 L 1438.0 524.0 L 1435.2 523.0 L 1432.5 521.9 L 1429.8 520.8 L 1427.3 519.7 L 1424.9 518.7 L 1422.5 517.5 L 1420.3 516.4 L 1418.1 515.3 L 1416.0 514.1 L 1414.0 512.9 L 1412.1 511.7 L 1410.3 510.5 L 1408.6 509.3 L 1406.9 508.0 L 1405.3 506.7 L 1403.8 505.4 L 1402.4 504.0 L 1401.0 502.7 L 1399.7 501.3 L 1398.5 499.8 L 1397.4 498.4 L 1396.3 496.9 L 1395.3 495.4 L 1394.3 493.8 L 1391.2 492.9 L 1387.8 492.2 L 1384.5 491.4 L 1381.3 490.6 L 1378.2 489.8 L 1375.2 489.0 L 1372.3 488.2 L 1369.4 487.3 L 1366.6 486.4 L 1363.9 485.5 L 1361.3 484.5 L 1358.7 483.6 L 1356.3 482.6 L 1353.9 481.5 L 1351.5 480.5 L 1349.2 479.4 L 1347.0 478.2 L 1344.9 477.1 L 1342.8 475.9 L 1340.7 474.7 L 1338.7 473.4 L 1336.8 472.1 L 1334.9 470.8 L 1333.1 469.4 L 1331.3 468.0 L 1329.2 466.7 L 1325.5 466.3 L 1321.8 465.9 L 1318.2 465.5 L 1314.7 465.0 L 1311.2 464.5 L 1307.8 464.0 L 1304.5 463.4 L 1301.3 462.8 L 1298.1 462.2 L 1295.0 461.5 L 1292.0 460.8 L 1289.0 460.1 L 1286.0 459.3 L 1283.1 458.6 L 1280.3 457.7 L 1277.5 456.9 L 1274.8 456.0 L 1272.1 455.0 L 1269.4 454.0 L 1266.7 453.0 L 1264.1 452.0 L 1261.6 450.9 L 1259.0 449.8 L 1256.5 448.6 L 1254.0 447.4 L 1250.9 446.6 L 1247.1 446.6 L 1243.3 446.5 L 1239.5 446.4 L 1235.9 446.2 L 1232.3 446.1 L 1228.7 445.8 L 1225.2 445.6 L 1221.7 445.3 L 1218.3 445.0 L 1214.9 444.6 L 1211.6 444.2 L 1208.3 443.8 L 1205.0 443.3 L 1201.8 442.8 L 1198.6 442.2 L 1195.4 441.6 L 1192.3 441.0 L 1189.1 440.3 L 1186.0 439.6 L 1182.9 438.8 L 1179.8 438.0 L 1176.7 437.2 L 1173.6 436.3 L 1170.5 435.4 L 1167.4 434.4 L 1163.8 434.4 L 1160.1 434.7 L 1156.3 434.9 L 1152.7 435.2 L 1149.0 435.3 L 1145.4 435.5 L 1141.8 435.6 L 1138.3 435.7 L 1134.7 435.7 L 1131.2 435.7 L 1127.8 435.6 L 1124.3 435.5 L 1120.9 435.4 L 1117.4 435.2 L 1114.0 435.0 L 1110.6 434.7 L 1107.2 434.4 L 1103.8 434.1 L 1100.3 433.7 L 1096.9 433.3 L 1093.5 432.8 L 1090.0 432.3 L 1086.5 431.8 L 1083.0 431.2 L 1079.5 430.6 L 1076.0 429.9 L 1072.5 430.6 L 1069.0 431.2 L 1065.5 431.8 L 1062.0 432.3 L 1058.5 432.8 L 1055.1 433.3 L 1051.7 433.7 L 1048.2 434.1 L 1044.8 434.4 L 1041.4 434.7 L 1038.0 435.0 L 1034.6 435.2 L 1031.1 435.4 L 1027.7 435.5 L 1024.2 435.6 L 1020.8 435.7 L 1017.3 435.7 L 1013.7 435.7 L 1010.2 435.6 L 1006.6 435.5 L 1003.0 435.3 L 999.3 435.2 L 995.7 434.9 L 991.9 434.7 L 988.2 434.4 L 984.6 434.4 L 981.5 435.4 L 978.4 436.3 L 975.3 437.2 L 972.2 438.0 L 969.1 438.8 L 966.0 439.6 L 962.9 440.3 L 959.7 441.0 L 956.6 441.6 L 953.4 442.2 L 950.2 442.8 L 947.0 443.3 L 943.7 443.8 L 940.4 444.2 L 937.1 444.6 L 933.7 445.0 L 930.3 445.3 L 926.8 445.6 L 923.3 445.8 L 919.7 446.1 L 916.1 446.2 L 912.5 446.4 L 908.7 446.5 L 904.9 446.6 L 901.1 446.6 L 898.0 447.4 L 895.5 448.6 L 893.0 449.8 L 890.4 450.9 L 887.9 452.0 L 885.3 453.0 L 882.6 454.0 L 879.9 455.0 L 877.2 456.0 L 874.5 456.9 L 871.7 457.7 L 868.9 458.6 L 866.0 459.3 L 863.0 460.1 L 860.0 460.8 L 857.0 461.5 L 853.9 462.2 L 850.7 462.8 L 847.5 463.4 L 844.2 464.0 L 840.8 464.5 L 837.3 465.0 L 833.8 465.5 L 830.2 465.9 L 826.5 466.3 L 822.8 466.7 L 820.7 468.0 L 818.9 469.4 L 817.1 470.8 L 815.2 472.1 L 813.3 473.4 L 811.3 474.7 L 809.2 475.9 L 807.1 477.1 L 805.0 478.2 L 802.8 479.4 L 800.5 480.5 L 798.1 481.5 L 795.7 482.6 L 793.3 483.6 L 790.7 484.5 L 788.1 485.5 L 785.4 486.4 L 782.6 487.3 L 779.7 488.2 L 776.8 489.0 L 773.8 489.8 L 770.7 490.6 L 767.5 491.4 L 764.2 492.2 L 760.8 492.9 L 757.7 493.8 L 756.7 495.4 L 755.7 496.9 L 754.6 498.4 L 753.5 499.8 L 752.3 501.3 L 751.0 502.7 L 749.6 504.0 L 748.2 505.4 L 746.7 506.7 L 745.1 508.0 L 743.4 509.3 L 741.7 510.5 L 739.9 511.7 L 738.0 512.9 L 736.0 514.1 L 733.9 515.3 L 731.7 516.4 L 729.5 517.5 L 727.1 518.7 L 724.7 519.7 L 722.2 520.8 L 719.5 521.9 L 716.8 523.0 L 714.0 524.0 L 711.0 525.0 L 709.3 526.3 L 709.2 527.9 L 709.0 529.5 L 708.7 531.1 L 708.3 532.6 L 707.9 534.1 L 707.4 535.6 L 706.8 537.0 L 706.1 538.5 L 705.3 539.9 L 704.4 541.3 L 703.4 542.7 L 702.4 544.0 L 701.2 545.4 L 700.0 546.7 L 698.6 548.1 L 697.2 549.4 L 695.7 550.7 L 694.1 552.0 L 692.3 553.3 L 690.5 554.6 L 688.6 555.9 L 686.6 557.2 L 684.5 558.4 L 682.2 559.7 L 679.9 561.0 L 679.8 562.5 L 680.5 564.1 L 681.1 565.6 L 681.7 567.2 L 682.1 568.7 L 682.4 570.2 L 682.7 571.7 L 682.9 573.1 L 682.9 574.6 L 682.9 576.0 L 682.7 577.5 L 682.5 578.9 L 682.2 580.4 L 681.8 581.8 L 681.3 583.2 L 680.6 584.6 L 679.9 586.0 L 679.1 587.5 L 678.2 588.9 L 677.2 590.3 L 676.1 591.7 L 674.9 593.2 L 673.5 594.6 L 672.1 596.1 L 670.6 597.5 L 669.0 599.0 L 669.0 599.0 L 670.6 600.5 L 672.1 601.9 L 673.5 603.4 L 674.9 604.8 L 676.1 606.3 L 677.2 607.7 L 678.2 609.1 L 679.1 610.5 L 679.9 612.0 L 680.6 613.4 L 681.3 614.8 L 681.8 616.2 L 682.2 617.6 L 682.5 619.1 L 682.7 620.5 L 682.9 622.0 L 682.9 623.4 L 682.9 624.9 L 682.7 626.3 L 682.4 627.8 L 682.1 629.3 L 681.7 630.8 L 681.1 632.4 L 680.5 633.9 L 679.8 635.5 L 679.9 637.0 L 682.2 638.3 L 684.5 639.6 L 686.6 640.8 L 688.6 642.1 L 690.5 643.4 L 692.3 644.7 L 694.1 646.0 L 695.7 647.3 L 697.2 648.6 L 698.6 649.9 L 700.0 651.3 L 701.2 652.6 L 702.4 654.0 L 703.4 655.3 L 704.4 656.7 L 705.3 658.1 L 706.1 659.5 L 706.8 661.0 L 707.4 662.4 L 707.9 663.9 L 708.3 665.4 L 708.7 666.9 L 709.0 668.5 L 709.2 670.1 L 709.3 671.7 L 711.0 673.0 L 714.0 674.0 L 716.8 675.0 L 719.5 676.1 L 722.2 677.2 L 724.7 678.3 L 727.1 679.3 L 729.5 680.5 L 731.7 681.6 L 733.9 682.7 L 736.0 683.9 L 738.0 685.1 L 739.9 686.3 L 741.7 687.5 L 743.4 688.7 L 745.1 690.0 L 746.7 691.3 L 748.2 692.6 L 749.6 694.0 L 751.0 695.3 L 752.3 696.7 L 753.5 698.2 L 754.6 699.6 L 755.7 701.1 L 756.7 702.6 L 757.7 704.2 L 760.8 705.1 L 764.2 705.8 L 767.5 706.6 L 770.7 707.4 L 773.8 708.2 L 776.8 709.0 L 779.7 709.8 L 782.6 710.7 L 785.4 711.6 L 788.1 712.5 L 790.7 713.5 L 793.3 714.4 L 795.7 715.4 L 798.1 716.5 L 800.5 717.5 L 802.8 718.6 L 805.0 719.8 L 807.1 720.9 L 809.2 722.1 L 811.3 723.3 L 813.3 724.6 L 815.2 725.9 L 817.1 727.2 L 818.9 728.6 L 820.7 730.0 L 822.8 731.3 L 826.5 731.7 L 830.2 732.1 L 833.8 732.5 L 837.3 733.0 L 840.8 733.5 L 844.2 734.0 L 847.5 734.6 L 850.7 735.2 L 853.9 735.8 L 857.0 736.5 L 860.0 737.2 L 863.0 737.9 L 866.0 738.7 L 868.9 739.4 L 871.7 740.3 L 874.5 741.1 L 877.2 742.0 L 879.9 743.0 L 882.6 744.0 L 885.3 745.0 L 887.9 746.0 L 890.4 747.1 L 893.0 748.2 L 895.5 749.4 L 898.0 750.6 L 901.1 751.4 L 904.9 751.4 L 908.7 751.5 L 912.5 751.6 L 916.1 751.8 L 919.7 751.9 L 923.3 752.2 L 926.8 752.4 L 930.3 752.7 L 933.7 753.0 L 937.1 753.4 L 940.4 753.8 L 943.7 754.2 L 947.0 754.7 L 950.2 755.2 L 953.4 755.8 L 956.6 756.4 L 959.7 757.0 L 962.9 757.7 L 966.0 758.4 L 969.1 759.2 L 972.2 760.0 L 975.3 760.8 L 978.4 761.7 L 981.5 762.6 L 984.6 763.6 L 988.2 763.6 L 991.9 763.3 L 995.7 763.1 L 999.3 762.8 L 1003.0 762.7 L 1006.6 762.5 L 1010.2 762.4 L 1013.7 762.3 L 1017.3 762.3 L 1020.8 762.3 L 1024.2 762.4 L 1027.7 762.5 L 1031.1 762.6 L 1034.6 762.8 L 1038.0 763.0 L 1041.4 763.3 L 1044.8 763.6 L 1048.2 763.9 L 1051.7 764.3 L 1055.1 764.7 L 1058.5 765.2 L 1062.0 765.7 L 1065.5 766.2 L 1069.0 766.8 L 1072.5 767.4 L 1076.0 768.1 L 1079.5 767.4 L 1083.0 766.8 L 1086.5 766.2 L 1090.0 765.7 L 1093.5 765.2 L 1096.9 764.7 L 1100.3 764.3 L 1103.8 763.9 L 1107.2 763.6 L 1110.6 763.3 L 1114.0 763.0 L 1117.4 762.8 L 1120.9 762.6 L 1124.3 762.5 L 1127.8 762.4 L 1131.2 762.3 L 1134.7 762.3 L 1138.3 762.3 L 1141.8 762.4 L 1145.4 762.5 L 1149.0 762.7 L 1152.7 762.8 L 1156.3 763.1 L 1160.1 763.3 L 1163.8 763.6 L 1167.4 763.6 L 1170.5 762.6 L 1173.6 761.7 L 1176.7 760.8 L 1179.8 760.0 L 1182.9 759.2 L 1186.0 758.4 L 1189.1 757.7 L 1192.3 757.0 L 1195.4 756.4 L 1198.6 755.8 L 1201.8 755.2 L 1205.0 754.7 L 1208.3 754.2 L 1211.6 753.8 L 1214.9 753.4 L 1218.3 753.0 L 1221.7 752.7 L 1225.2 752.4 L 1228.7 752.2 L 1232.3 751.9 L 1235.9 751.8 L 1239.5 751.6 L 1243.3 751.5 L 1247.1 751.4 L 1250.9 751.4 L 1254.0 750.6 L 1256.5 749.4 L 1259.0 748.2 L 1261.6 747.1 L 1264.1 746.0 L 1266.7 745.0 L 1269.4 744.0 L 1272.1 743.0 L 1274.8 742.0 L 1277.5 741.1 L 1280.3 740.3 L 1283.1 739.4 L 1286.0 738.7 L 1289.0 737.9 L 1292.0 737.2 L 1295.0 736.5 L 1298.1 735.8 L 1301.3 735.2 L 1304.5 734.6 L 1307.8 734.0 L 1311.2 733.5 L 1314.7 733.0 L 1318.2 732.5 L 1321.8 732.1 L 1325.5 731.7 L 1329.2 731.3 L 1331.3 730.0 L 1333.1 728.6 L 1334.9 727.2 L 1336.8 725.9 L 1338.7 724.6 L 1340.7 723.3 L 1342.8 722.1 L 1344.9 720.9 L 1347.0 719.8 L 1349.2 718.6 L 1351.5 717.5 L 1353.9 716.5 L 1356.3 715.4 L 1358.7 714.4 L 1361.3 713.5 L 1363.9 712.5 L 1366.6 711.6 L 1369.4 710.7 L 1372.3 709.8 L 1375.2 709.0 L 1378.2 708.2 L 1381.3 707.4 L 1384.5 706.6 L 1387.8 705.8 L 1391.2 705.1 L 1394.3 704.2 L 1395.3 702.6 L 1396.3 701.1 L 1397.4 699.6 L 1398.5 698.2 L 1399.7 696.7 L 1401.0 695.3 L 1402.4 694.0 L 1403.8 692.6 L 1405.3 691.3 L 1406.9 690.0 L 1408.6 688.7 L 1410.3 687.5 L 1412.1 686.3 L 1414.0 685.1 L 1416.0 683.9 L 1418.1 682.7 L 1420.3 681.6 L 1422.5 680.5 L 1424.9 679.3 L 1427.3 678.3 L 1429.8 677.2 L 1432.5 676.1 L 1435.2 675.0 L 1438.0 674.0 L 1441.0 673.0 L 1442.7 671.7 L 1442.8 670.1 L 1443.0 668.5 L 1443.3 666.9 L 1443.7 665.4 L 1444.1 663.9 L 1444.6 662.4 L 1445.2 661.0 L 1445.9 659.5 L 1446.7 658.1 L 1447.6 656.7 L 1448.6 655.3 L 1449.6 654.0 L 1450.8 652.6 L 1452.0 651.3 L 1453.4 649.9 L 1454.8 648.6 L 1456.3 647.3 L 1457.9 646.0 L 1459.7 644.7 L 1461.5 643.4 L 1463.4 642.1 L 1465.4 640.8 L 1467.5 639.6 L 1469.8 638.3 L 1472.1 637.0 L 1472.2 635.5 L 1471.5 633.9 L 1470.9 632.4 L 1470.3 630.8 L 1469.9 629.3 L 1469.6 627.8 L 1469.3 626.3 L 1469.1 624.9 L 1469.1 623.4 L 1469.1 622.0 L 1469.3 620.5 L 1469.5 619.1 L 1469.8 617.6 L 1470.2 616.2 L 1470.7 614.8 L 1471.4 613.4 L 1472.1 612.0 L 1472.9 610.5 L 1473.8 609.1 L 1474.8 607.7 L 1475.9 606.3 L 1477.1 604.8 L 1478.5 603.4 L 1479.9 601.9 L 1481.4 600.5 L 1483.0 599.0 Z" fill="#04356c"/>
<g clip-path="url(#cAL)" fill="none" stroke="#4d9ae8" stroke-width="1.3"><ellipse cx="674.1" cy="623.1" rx="4.3" ry="45.4" transform="rotate(176.6 674.1 623.1)"/><ellipse cx="694.2" cy="659.8" rx="13.3" ry="45.4" transform="rotate(170.9 694.2 659.8)"/><ellipse cx="733.5" cy="693.7" rx="21.7" ry="45.4" transform="rotate(164.5 733.5 693.7)"/><ellipse cx="789.9" cy="723.2" rx="28.9" ry="45.4" transform="rotate(156.5 789.9 723.2)"/><ellipse cx="860.7" cy="746.6" rx="34.7" ry="45.4" transform="rotate(145.6 860.7 746.6)"/><ellipse cx="942.2" cy="763.0" rx="38.7" ry="45.4" transform="rotate(129.2 942.2 763.0)"/><ellipse cx="1030.5" cy="771.4" rx="40.7" ry="45.4" transform="rotate(104.8 1030.5 771.4)"/><ellipse cx="1121.1" cy="771.4" rx="40.7" ry="45.4" transform="rotate(75.3 1121.1 771.4)"/><ellipse cx="1209.4" cy="763.0" rx="38.7" ry="45.4" transform="rotate(50.9 1209.4 763.0)"/><ellipse cx="1291.0" cy="746.7" rx="34.7" ry="45.4" transform="rotate(34.5 1291.0 746.7)"/><ellipse cx="1361.8" cy="723.3" rx="28.9" ry="45.4" transform="rotate(23.5 1361.8 723.3)"/><ellipse cx="1418.3" cy="693.9" rx="21.7" ry="45.4" transform="rotate(15.5 1418.3 693.9)"/><ellipse cx="1457.7" cy="660.0" rx="13.4" ry="45.4" transform="rotate(9.1 1457.7 660.0)"/><ellipse cx="1477.9" cy="623.3" rx="4.4" ry="45.4" transform="rotate(3.5 1477.9 623.3)"/><ellipse cx="682.8" cy="502.7" rx="0.5" ry="41.8" transform="rotate(-166.2 682.8 502.7)"/><ellipse cx="685.2" cy="540.7" rx="9.1" ry="41.8" transform="rotate(-171.5 685.2 540.7)"/><ellipse cx="708.6" cy="577.6" rx="17.4" ry="41.8" transform="rotate(-176.7 708.6 577.6)"/><ellipse cx="751.8" cy="611.2" rx="25.0" ry="41.8" transform="rotate(177.9 751.8 611.2)"/><ellipse cx="812.5" cy="639.7" rx="31.5" ry="41.8" transform="rotate(171.2 812.5 639.7)"/><ellipse cx="887.4" cy="661.7" rx="36.4" ry="41.8" transform="rotate(161.6 887.4 661.7)"/><ellipse cx="972.5" cy="675.8" rx="39.7" ry="41.8" transform="rotate(143.4 972.5 675.8)"/><ellipse cx="1063.1" cy="681.5" rx="40.9" ry="41.8" transform="rotate(98.9 1063.1 681.5)"/><ellipse cx="1154.5" cy="678.3" rx="40.2" ry="41.8" transform="rotate(45.3 1154.5 678.3)"/><ellipse cx="1241.6" cy="666.5" rx="37.5" ry="41.8" transform="rotate(22.2 1241.6 666.5)"/><ellipse cx="1319.8" cy="646.6" rx="33.0" ry="41.8" transform="rotate(11.0 1319.8 646.6)"/><ellipse cx="1384.8" cy="619.7" rx="27.0" ry="41.8" transform="rotate(3.8 1384.8 619.7)"/><ellipse cx="1433.2" cy="587.4" rx="19.6" ry="41.8" transform="rotate(-1.9 1433.2 587.4)"/><ellipse cx="1462.4" cy="551.3" rx="11.5" ry="41.8" transform="rotate(-7.0 1462.4 551.3)"/><ellipse cx="1470.7" cy="513.3" rx="2.9" ry="41.8" transform="rotate(-12.2 1470.7 513.3)"/><ellipse cx="711.5" cy="434.5" rx="6.5" ry="41.8" transform="rotate(-155.7 711.5 434.5)"/><ellipse cx="720.3" cy="472.3" rx="15.1" ry="41.8" transform="rotate(-160.4 720.3 472.3)"/><ellipse cx="751.4" cy="508.0" rx="23.2" ry="41.8" transform="rotate(-164.3 751.4 508.0)"/><ellipse cx="802.9" cy="539.4" rx="30.3" ry="41.8" transform="rotate(-167.7 802.9 539.4)"/><ellipse cx="871.6" cy="564.5" rx="35.9" ry="41.8" transform="rotate(-170.4 871.6 564.5)"/><ellipse cx="953.1" cy="581.7" rx="39.8" ry="41.8" transform="rotate(-172.0 953.1 581.7)"/><ellipse cx="1042.3" cy="589.9" rx="41.7" ry="41.8" transform="rotate(-164.8 1042.3 589.9)"/><ellipse cx="1133.7" cy="588.6" rx="41.4" ry="41.8" transform="rotate(-10.2 1133.7 588.6)"/><ellipse cx="1221.4" cy="578.0" rx="39.0" ry="41.8" transform="rotate(-8.2 1221.4 578.0)"/><ellipse cx="1300.0" cy="558.6" rx="34.6" ry="41.8" transform="rotate(-10.2 1300.0 558.6)"/><ellipse cx="1364.5" cy="531.7" rx="28.5" ry="41.8" transform="rotate(-13.1 1364.5 531.7)"/><ellipse cx="1410.9" cy="498.9" rx="21.1" ry="41.8" transform="rotate(-16.6 1410.9 498.9)"/><ellipse cx="1436.3" cy="462.5" rx="12.9" ry="41.8" transform="rotate(-20.8 1436.3 462.5)"/><ellipse cx="1439.0" cy="424.5" rx="4.3" ry="41.8" transform="rotate(-25.7 1439.0 424.5)"/><ellipse cx="767.7" cy="340.2" rx="4.5" ry="41.8" transform="rotate(-140.0 767.7 340.2)"/><ellipse cx="760.9" cy="377.4" rx="12.9" ry="41.8" transform="rotate(-144.9 760.9 377.4)"/><ellipse cx="779.7" cy="414.0" rx="21.1" ry="41.8" transform="rotate(-148.0 779.7 414.0)"/><ellipse cx="822.5" cy="446.8" rx="28.6" ry="41.8" transform="rotate(-149.0 822.5 446.8)"/><ellipse cx="885.8" cy="473.3" rx="34.6" ry="41.8" transform="rotate(-146.5 885.8 473.3)"/><ellipse cx="964.6" cy="491.3" rx="38.7" ry="41.8" transform="rotate(-136.0 964.6 491.3)"/><ellipse cx="1052.3" cy="499.4" rx="40.5" ry="41.8" transform="rotate(-103.4 1052.3 499.4)"/><ellipse cx="1142.0" cy="496.9" rx="39.9" ry="41.8" transform="rotate(-57.1 1142.0 496.9)"/><ellipse cx="1226.3" cy="483.9" rx="37.0" ry="41.8" transform="rotate(-37.4 1226.3 483.9)"/><ellipse cx="1298.5" cy="461.7" rx="31.9" ry="41.8" transform="rotate(-31.7 1298.5 461.7)"/><ellipse cx="1352.6" cy="431.9" rx="25.2" ry="41.8" transform="rotate(-31.1 1352.6 431.9)"/><ellipse cx="1384.3" cy="396.9" rx="17.3" ry="41.8" transform="rotate(-33.2 1384.3 396.9)"/><ellipse cx="1391.1" cy="359.7" rx="8.9" ry="41.8" transform="rotate(-37.2 1391.1 359.7)"/><ellipse cx="1372.3" cy="323.2" rx="0.6" ry="41.8" transform="rotate(-43.0 1372.3 323.2)"/><ellipse cx="844.3" cy="267.8" rx="2.8" ry="32.6" transform="rotate(-125.0 844.3 267.8)"/><ellipse cx="823.8" cy="296.8" rx="7.9" ry="32.6" transform="rotate(-129.8 823.8 296.8)"/><ellipse cx="823.8" cy="326.9" rx="13.2" ry="32.6" transform="rotate(-132.8 823.8 326.9)"/><ellipse cx="844.3" cy="355.8" rx="18.3" ry="32.6" transform="rotate(-133.6 844.3 355.8)"/><ellipse cx="883.5" cy="381.1" rx="22.8" ry="32.6" transform="rotate(-131.5 883.5 381.1)"/><ellipse cx="938.3" cy="400.9" rx="26.2" ry="32.6" transform="rotate(-124.8 938.3 400.9)"/><ellipse cx="1004.2" cy="413.4" rx="28.4" ry="32.6" transform="rotate(-111.1 1004.2 413.4)"/><ellipse cx="1076.0" cy="417.7" rx="29.2" ry="32.6" transform="rotate(-90.0 1076.0 417.7)"/><ellipse cx="1147.8" cy="413.4" rx="28.4" ry="32.6" transform="rotate(-68.9 1147.8 413.4)"/><ellipse cx="1213.7" cy="400.9" rx="26.2" ry="32.6" transform="rotate(-55.2 1213.7 400.9)"/><ellipse cx="1268.5" cy="381.1" rx="22.8" ry="32.6" transform="rotate(-48.5 1268.5 381.1)"/><ellipse cx="1307.7" cy="355.8" rx="18.3" ry="32.6" transform="rotate(-46.4 1307.7 355.8)"/><ellipse cx="1328.2" cy="326.9" rx="13.2" ry="32.6" transform="rotate(-47.2 1328.2 326.9)"/><ellipse cx="1328.2" cy="296.8" rx="7.9" ry="32.6" transform="rotate(-50.2 1328.2 296.8)"/><ellipse cx="1307.7" cy="267.8" rx="2.8" ry="32.6" transform="rotate(-55.0 1307.7 267.8)"/><ellipse cx="960.5" cy="210.1" rx="0.4" ry="32.6" transform="rotate(-106.5 960.5 210.1)"/><ellipse cx="911.6" cy="231.9" rx="4.2" ry="32.6" transform="rotate(-114.1 911.6 231.9)"/><ellipse cx="885.0" cy="259.5" rx="9.1" ry="32.6" transform="rotate(-119.4 885.0 259.5)"/><ellipse cx="884.1" cy="289.2" rx="14.3" ry="32.6" transform="rotate(-121.8 884.1 289.2)"/><ellipse cx="909.1" cy="317.1" rx="19.3" ry="32.6" transform="rotate(-120.6 909.1 317.1)"/><ellipse cx="956.7" cy="339.3" rx="23.2" ry="32.6" transform="rotate(-114.7 956.7 339.3)"/><ellipse cx="1020.4" cy="352.9" rx="25.6" ry="32.6" transform="rotate(-102.7 1020.4 352.9)"/><ellipse cx="1091.6" cy="356.0" rx="26.1" ry="32.6" transform="rotate(-86.3 1091.6 356.0)"/><ellipse cx="1160.7" cy="348.2" rx="24.7" ry="32.6" transform="rotate(-71.3 1160.7 348.2)"/><ellipse cx="1218.3" cy="330.6" rx="21.6" ry="32.6" transform="rotate(-62.1 1218.3 330.6)"/><ellipse cx="1256.8" cy="305.5" rx="17.2" ry="32.6" transform="rotate(-58.4 1256.8 305.5)"/><ellipse cx="1270.8" cy="276.3" rx="12.1" ry="32.6" transform="rotate(-58.9 1270.8 276.3)"/><ellipse cx="1258.5" cy="247.0" rx="6.9" ry="32.6" transform="rotate(-62.6 1258.5 247.0)"/><ellipse cx="1221.6" cy="221.5" rx="2.4" ry="32.6" transform="rotate(-68.9 1221.6 221.5)"/><ellipse cx="1076.0" cy="195.4" rx="3.3" ry="32.6" transform="rotate(-90.0 1076.0 195.4)"/><ellipse cx="1005.7" cy="204.0" rx="4.8" ry="32.6" transform="rotate(-100.1 1005.7 204.0)"/><ellipse cx="957.7" cy="227.0" rx="8.9" ry="32.6" transform="rotate(-107.6 957.7 227.0)"/><ellipse cx="947.3" cy="257.2" rx="14.2" ry="32.6" transform="rotate(-110.6 947.3 257.2)"/><ellipse cx="977.7" cy="284.9" rx="19.1" ry="32.6" transform="rotate(-107.4 977.7 284.9)"/><ellipse cx="1039.4" cy="301.3" rx="22.0" ry="32.6" transform="rotate(-97.0 1039.4 301.3)"/><ellipse cx="1112.6" cy="301.3" rx="22.0" ry="32.6" transform="rotate(-83.0 1112.6 301.3)"/><ellipse cx="1174.3" cy="284.9" rx="19.1" ry="32.6" transform="rotate(-72.6 1174.3 284.9)"/><ellipse cx="1204.7" cy="257.2" rx="14.2" ry="32.6" transform="rotate(-69.4 1204.7 257.2)"/><ellipse cx="1194.3" cy="227.0" rx="8.9" ry="32.6" transform="rotate(-72.4 1194.3 227.0)"/><ellipse cx="1146.3" cy="204.0" rx="4.8" ry="32.6" transform="rotate(-79.9 1146.3 204.0)"/><ellipse cx="1087.0" cy="208.6" rx="8.8" ry="32.6" transform="rotate(-88.4 1087.0 208.6)"/><ellipse cx="1020.0" cy="222.1" rx="11.2" ry="32.6" transform="rotate(-98.5 1020.0 222.1)"/><ellipse cx="1030.3" cy="252.8" rx="16.6" ry="32.6" transform="rotate(-97.5 1030.3 252.8)"/><ellipse cx="1103.8" cy="258.2" rx="17.6" ry="32.6" transform="rotate(-85.3 1103.8 258.2)"/><ellipse cx="1138.8" cy="230.9" rx="12.7" ry="32.6" transform="rotate(-80.3 1138.8 230.9)"/><ellipse cx="1076.0" cy="230.0" rx="13.6" ry="32.6" transform="rotate(-90.0 1076.0 230.0)"/></g>
<g clip-path="url(#cTop)" fill="none" stroke="#52a4f6" stroke-width="1.5"><ellipse cx="1030.9" cy="437.4" rx="41.3" ry="45.4" transform="rotate(-105.6 1030.9 437.4)"/><ellipse cx="942.6" cy="445.8" rx="39.2" ry="45.4" transform="rotate(-131.0 942.6 445.8)"/><ellipse cx="861.0" cy="462.1" rx="35.2" ry="45.4" transform="rotate(-147.5 861.0 462.1)"/><ellipse cx="790.2" cy="485.5" rx="29.5" ry="45.4" transform="rotate(-158.3 790.2 485.5)"/><ellipse cx="733.7" cy="514.9" rx="22.2" ry="45.4" transform="rotate(-166.2 733.7 514.9)"/><ellipse cx="694.3" cy="548.8" rx="13.9" ry="45.4" transform="rotate(-172.5 694.3 548.8)"/><ellipse cx="674.1" cy="585.5" rx="4.9" ry="45.4" transform="rotate(-178.1 674.1 585.5)"/><ellipse cx="1477.9" cy="585.7" rx="4.9" ry="45.4" transform="rotate(-1.9 1477.9 585.7)"/><ellipse cx="1457.8" cy="549.0" rx="13.9" ry="45.4" transform="rotate(-7.5 1457.8 549.0)"/><ellipse cx="1418.5" cy="515.1" rx="22.2" ry="45.4" transform="rotate(-13.8 1418.5 515.1)"/><ellipse cx="1362.1" cy="485.6" rx="29.4" ry="45.4" transform="rotate(-21.6 1362.1 485.6)"/><ellipse cx="1291.3" cy="462.2" rx="35.2" ry="45.4" transform="rotate(-32.4 1291.3 462.2)"/><ellipse cx="1209.8" cy="445.8" rx="39.2" ry="45.4" transform="rotate(-48.9 1209.8 445.8)"/><ellipse cx="1121.5" cy="437.4" rx="41.3" ry="45.4" transform="rotate(-74.3 1121.5 437.4)"/><ellipse cx="1043.0" cy="354.1" rx="33.1" ry="41.8" transform="rotate(-97.7 1043.0 354.1)"/><ellipse cx="953.1" cy="361.6" rx="31.4" ry="41.8" transform="rotate(-117.4 953.1 361.6)"/><ellipse cx="869.9" cy="377.6" rx="27.8" ry="41.8" transform="rotate(-133.0 869.9 377.6)"/><ellipse cx="797.8" cy="401.1" rx="22.5" ry="41.8" transform="rotate(-144.6 797.8 401.1)"/><ellipse cx="740.7" cy="430.9" rx="15.7" ry="41.8" transform="rotate(-153.4 740.7 430.9)"/><ellipse cx="701.7" cy="465.4" rx="8.0" ry="41.8" transform="rotate(-160.4 701.7 465.4)"/><ellipse cx="1457.7" cy="475.6" rx="5.6" ry="41.8" transform="rotate(-17.9 1457.7 475.6)"/><ellipse cx="1424.2" cy="440.2" rx="13.7" ry="41.8" transform="rotate(-24.5 1424.2 440.2)"/><ellipse cx="1371.9" cy="408.9" rx="20.7" ry="41.8" transform="rotate(-32.7 1371.9 408.9)"/><ellipse cx="1303.6" cy="383.5" rx="26.5" ry="41.8" transform="rotate(-43.4 1303.6 383.5)"/><ellipse cx="1223.0" cy="365.3" rx="30.6" ry="41.8" transform="rotate(-57.8 1223.0 365.3)"/><ellipse cx="1134.6" cy="355.3" rx="32.9" ry="41.8" transform="rotate(-76.5 1134.6 355.3)"/><ellipse cx="1063.9" cy="287.6" rx="26.7" ry="41.8" transform="rotate(-92.2 1063.9 287.6)"/><ellipse cx="973.7" cy="293.6" rx="25.3" ry="41.8" transform="rotate(-108.5 973.7 293.6)"/><ellipse cx="889.8" cy="308.7" rx="21.9" ry="41.8" transform="rotate(-122.7 889.8 308.7)"/><ellipse cx="817.7" cy="332.1" rx="16.6" ry="41.8" transform="rotate(-134.1 817.7 332.1)"/><ellipse cx="761.8" cy="362.1" rx="9.8" ry="41.8" transform="rotate(-143.0 761.8 362.1)"/><ellipse cx="725.7" cy="397.0" rx="2.0" ry="41.8" transform="rotate(-150.0 725.7 397.0)"/><ellipse cx="1418.9" cy="387.4" rx="4.1" ry="41.8" transform="rotate(-31.7 1418.9 387.4)"/><ellipse cx="1377.2" cy="353.6" rx="11.8" ry="41.8" transform="rotate(-39.2 1377.2 353.6)"/><ellipse cx="1316.7" cy="325.2" rx="18.2" ry="41.8" transform="rotate(-48.7 1316.7 325.2)"/><ellipse cx="1241.0" cy="303.9" rx="23.0" ry="41.8" transform="rotate(-60.8 1241.0 303.9)"/><ellipse cx="1154.9" cy="291.1" rx="25.9" ry="41.8" transform="rotate(-75.6 1154.9 291.1)"/><ellipse cx="1099.7" cy="237.7" rx="18.7" ry="41.8" transform="rotate(-86.3 1099.7 237.7)"/><ellipse cx="1010.0" cy="240.3" rx="18.1" ry="41.8" transform="rotate(-100.4 1010.0 240.3)"/><ellipse cx="925.7" cy="253.2" rx="15.2" ry="41.8" transform="rotate(-113.5 925.7 253.2)"/><ellipse cx="853.5" cy="275.4" rx="10.2" ry="41.8" transform="rotate(-124.5 853.5 275.4)"/><ellipse cx="799.4" cy="305.3" rx="3.4" ry="41.8" transform="rotate(-133.3 799.4 305.3)"/><ellipse cx="1329.5" cy="290.3" rx="6.8" ry="41.8" transform="rotate(-50.6 1329.5 290.3)"/><ellipse cx="1266.2" cy="263.8" rx="12.8" ry="41.8" transform="rotate(-60.4 1266.2 263.8)"/><ellipse cx="1187.4" cy="245.8" rx="16.9" ry="41.8" transform="rotate(-72.5 1187.4 245.8)"/><ellipse cx="1076.0" cy="206.0" rx="8.1" ry="32.6" transform="rotate(-90.0 1076.0 206.0)"/><ellipse cx="1004.2" cy="210.3" rx="7.3" ry="32.6" transform="rotate(-100.5 1004.2 210.3)"/><ellipse cx="938.3" cy="222.8" rx="5.1" ry="32.6" transform="rotate(-110.1 938.3 222.8)"/><ellipse cx="883.5" cy="242.5" rx="1.7" ry="32.6" transform="rotate(-118.4 883.5 242.5)"/><ellipse cx="1268.5" cy="242.5" rx="1.7" ry="32.6" transform="rotate(-61.6 1268.5 242.5)"/><ellipse cx="1213.7" cy="222.8" rx="5.1" ry="32.6" transform="rotate(-69.9 1213.7 222.8)"/><ellipse cx="1147.8" cy="210.3" rx="7.3" ry="32.6" transform="rotate(-79.5 1147.8 210.3)"/><ellipse cx="1096.4" cy="194.8" rx="2.3" ry="32.6" transform="rotate(-87.1 1096.4 194.8)"/><ellipse cx="1025.0" cy="197.2" rx="1.9" ry="32.6" transform="rotate(-97.2 1025.0 197.2)"/><ellipse cx="1165.0" cy="203.3" rx="0.8" ry="32.6" transform="rotate(-77.3 1165.0 203.3)"/></g>
<path d="M 1483.0 599.0 L 1481.4 597.5 L 1479.9 596.1 L 1478.5 594.6 L 1477.1 593.2 L 1475.9 591.7 L 1474.8 590.3 L 1473.8 588.9 L 1472.9 587.5 L 1472.1 586.0 L 1471.4 584.6 L 1470.7 583.2 L 1470.2 581.8 L 1469.8 580.4 L 1469.5 578.9 L 1469.3 577.5 L 1469.1 576.0 L 1469.1 574.6 L 1469.1 573.1 L 1469.3 571.7 L 1469.6 570.2 L 1469.9 568.7 L 1470.3 567.2 L 1470.9 565.6 L 1471.5 564.1 L 1472.2 562.5 L 1472.1 561.0 L 1469.8 559.7 L 1467.5 558.4 L 1465.4 557.2 L 1463.4 555.9 L 1461.5 554.6 L 1459.7 553.3 L 1457.9 552.0 L 1456.3 550.7 L 1454.8 549.4 L 1453.4 548.1 L 1452.0 546.7 L 1450.8 545.4 L 1449.6 544.0 L 1448.6 542.7 L 1447.6 541.3 L 1446.7 539.9 L 1445.9 538.5 L 1445.2 537.0 L 1444.6 535.6 L 1444.1 534.1 L 1443.7 532.6 L 1443.3 531.1 L 1443.0 529.5 L 1442.8 527.9 L 1442.7 526.3 L 1441.0 525.0 L 1438.0 524.0 L 1435.2 523.0 L 1432.5 521.9 L 1429.8 520.8 L 1427.3 519.7 L 1424.9 518.7 L 1422.5 517.5 L 1420.3 516.4 L 1418.1 515.3 L 1416.0 514.1 L 1414.0 512.9 L 1412.1 511.7 L 1410.3 510.5 L 1408.6 509.3 L 1406.9 508.0 L 1405.3 506.7 L 1403.8 505.4 L 1402.4 504.0 L 1401.0 502.7 L 1399.7 501.3 L 1398.5 499.8 L 1397.4 498.4 L 1396.3 496.9 L 1395.3 495.4 L 1394.3 493.8 L 1391.2 492.9 L 1387.8 492.2 L 1384.5 491.4 L 1381.3 490.6 L 1378.2 489.8 L 1375.2 489.0 L 1372.3 488.2 L 1369.4 487.3 L 1366.6 486.4 L 1363.9 485.5 L 1361.3 484.5 L 1358.7 483.6 L 1356.3 482.6 L 1353.9 481.5 L 1351.5 480.5 L 1349.2 479.4 L 1347.0 478.2 L 1344.9 477.1 L 1342.8 475.9 L 1340.7 474.7 L 1338.7 473.4 L 1336.8 472.1 L 1334.9 470.8 L 1333.1 469.4 L 1331.3 468.0 L 1329.2 466.7 L 1325.5 466.3 L 1321.8 465.9 L 1318.2 465.5 L 1314.7 465.0 L 1311.2 464.5 L 1307.8 464.0 L 1304.5 463.4 L 1301.3 462.8 L 1298.1 462.2 L 1295.0 461.5 L 1292.0 460.8 L 1289.0 460.1 L 1286.0 459.3 L 1283.1 458.6 L 1280.3 457.7 L 1277.5 456.9 L 1274.8 456.0 L 1272.1 455.0 L 1269.4 454.0 L 1266.7 453.0 L 1264.1 452.0 L 1261.6 450.9 L 1259.0 449.8 L 1256.5 448.6 L 1254.0 447.4 L 1250.9 446.6 L 1247.1 446.6 L 1243.3 446.5 L 1239.5 446.4 L 1235.9 446.2 L 1232.3 446.1 L 1228.7 445.8 L 1225.2 445.6 L 1221.7 445.3 L 1218.3 445.0 L 1214.9 444.6 L 1211.6 444.2 L 1208.3 443.8 L 1205.0 443.3 L 1201.8 442.8 L 1198.6 442.2 L 1195.4 441.6 L 1192.3 441.0 L 1189.1 440.3 L 1186.0 439.6 L 1182.9 438.8 L 1179.8 438.0 L 1176.7 437.2 L 1173.6 436.3 L 1170.5 435.4 L 1167.4 434.4 L 1163.8 434.4 L 1160.1 434.7 L 1156.3 434.9 L 1152.7 435.2 L 1149.0 435.3 L 1145.4 435.5 L 1141.8 435.6 L 1138.3 435.7 L 1134.7 435.7 L 1131.2 435.7 L 1127.8 435.6 L 1124.3 435.5 L 1120.9 435.4 L 1117.4 435.2 L 1114.0 435.0 L 1110.6 434.7 L 1107.2 434.4 L 1103.8 434.1 L 1100.3 433.7 L 1096.9 433.3 L 1093.5 432.8 L 1090.0 432.3 L 1086.5 431.8 L 1083.0 431.2 L 1079.5 430.6 L 1076.0 429.9 L 1072.5 430.6 L 1069.0 431.2 L 1065.5 431.8 L 1062.0 432.3 L 1058.5 432.8 L 1055.1 433.3 L 1051.7 433.7 L 1048.2 434.1 L 1044.8 434.4 L 1041.4 434.7 L 1038.0 435.0 L 1034.6 435.2 L 1031.1 435.4 L 1027.7 435.5 L 1024.2 435.6 L 1020.8 435.7 L 1017.3 435.7 L 1013.7 435.7 L 1010.2 435.6 L 1006.6 435.5 L 1003.0 435.3 L 999.3 435.2 L 995.7 434.9 L 991.9 434.7 L 988.2 434.4 L 984.6 434.4 L 981.5 435.4 L 978.4 436.3 L 975.3 437.2 L 972.2 438.0 L 969.1 438.8 L 966.0 439.6 L 962.9 440.3 L 959.7 441.0 L 956.6 441.6 L 953.4 442.2 L 950.2 442.8 L 947.0 443.3 L 943.7 443.8 L 940.4 444.2 L 937.1 444.6 L 933.7 445.0 L 930.3 445.3 L 926.8 445.6 L 923.3 445.8 L 919.7 446.1 L 916.1 446.2 L 912.5 446.4 L 908.7 446.5 L 904.9 446.6 L 901.1 446.6 L 898.0 447.4 L 895.5 448.6 L 893.0 449.8 L 890.4 450.9 L 887.9 452.0 L 885.3 453.0 L 882.6 454.0 L 879.9 455.0 L 877.2 456.0 L 874.5 456.9 L 871.7 457.7 L 868.9 458.6 L 866.0 459.3 L 863.0 460.1 L 860.0 460.8 L 857.0 461.5 L 853.9 462.2 L 850.7 462.8 L 847.5 463.4 L 844.2 464.0 L 840.8 464.5 L 837.3 465.0 L 833.8 465.5 L 830.2 465.9 L 826.5 466.3 L 822.8 466.7 L 820.7 468.0 L 818.9 469.4 L 817.1 470.8 L 815.2 472.1 L 813.3 473.4 L 811.3 474.7 L 809.2 475.9 L 807.1 477.1 L 805.0 478.2 L 802.8 479.4 L 800.5 480.5 L 798.1 481.5 L 795.7 482.6 L 793.3 483.6 L 790.7 484.5 L 788.1 485.5 L 785.4 486.4 L 782.6 487.3 L 779.7 488.2 L 776.8 489.0 L 773.8 489.8 L 770.7 490.6 L 767.5 491.4 L 764.2 492.2 L 760.8 492.9 L 757.7 493.8 L 756.7 495.4 L 755.7 496.9 L 754.6 498.4 L 753.5 499.8 L 752.3 501.3 L 751.0 502.7 L 749.6 504.0 L 748.2 505.4 L 746.7 506.7 L 745.1 508.0 L 743.4 509.3 L 741.7 510.5 L 739.9 511.7 L 738.0 512.9 L 736.0 514.1 L 733.9 515.3 L 731.7 516.4 L 729.5 517.5 L 727.1 518.7 L 724.7 519.7 L 722.2 520.8 L 719.5 521.9 L 716.8 523.0 L 714.0 524.0 L 711.0 525.0 L 709.3 526.3 L 709.2 527.9 L 709.0 529.5 L 708.7 531.1 L 708.3 532.6 L 707.9 534.1 L 707.4 535.6 L 706.8 537.0 L 706.1 538.5 L 705.3 539.9 L 704.4 541.3 L 703.4 542.7 L 702.4 544.0 L 701.2 545.4 L 700.0 546.7 L 698.6 548.1 L 697.2 549.4 L 695.7 550.7 L 694.1 552.0 L 692.3 553.3 L 690.5 554.6 L 688.6 555.9 L 686.6 557.2 L 684.5 558.4 L 682.2 559.7 L 679.9 561.0 L 679.8 562.5 L 680.5 564.1 L 681.1 565.6 L 681.7 567.2 L 682.1 568.7 L 682.4 570.2 L 682.7 571.7 L 682.9 573.1 L 682.9 574.6 L 682.9 576.0 L 682.7 577.5 L 682.5 578.9 L 682.2 580.4 L 681.8 581.8 L 681.3 583.2 L 680.6 584.6 L 679.9 586.0 L 679.1 587.5 L 678.2 588.9 L 677.2 590.3 L 676.1 591.7 L 674.9 593.2 L 673.5 594.6 L 672.1 596.1 L 670.6 597.5 L 669.0 599.0 L 669.0 599.0 L 670.6 600.5 L 672.1 601.9 L 673.5 603.4 L 674.9 604.8 L 676.1 606.3 L 677.2 607.7 L 678.2 609.1 L 679.1 610.5 L 679.9 612.0 L 680.6 613.4 L 681.3 614.8 L 681.8 616.2 L 682.2 617.6 L 682.5 619.1 L 682.7 620.5 L 682.9 622.0 L 682.9 623.4 L 682.9 624.9 L 682.7 626.3 L 682.4 627.8 L 682.1 629.3 L 681.7 630.8 L 681.1 632.4 L 680.5 633.9 L 679.8 635.5 L 679.9 637.0 L 682.2 638.3 L 684.5 639.6 L 686.6 640.8 L 688.6 642.1 L 690.5 643.4 L 692.3 644.7 L 694.1 646.0 L 695.7 647.3 L 697.2 648.6 L 698.6 649.9 L 700.0 651.3 L 701.2 652.6 L 702.4 654.0 L 703.4 655.3 L 704.4 656.7 L 705.3 658.1 L 706.1 659.5 L 706.8 661.0 L 707.4 662.4 L 707.9 663.9 L 708.3 665.4 L 708.7 666.9 L 709.0 668.5 L 709.2 670.1 L 709.3 671.7 L 711.0 673.0 L 714.0 674.0 L 716.8 675.0 L 719.5 676.1 L 722.2 677.2 L 724.7 678.3 L 727.1 679.3 L 729.5 680.5 L 731.7 681.6 L 733.9 682.7 L 736.0 683.9 L 738.0 685.1 L 739.9 686.3 L 741.7 687.5 L 743.4 688.7 L 745.1 690.0 L 746.7 691.3 L 748.2 692.6 L 749.6 694.0 L 751.0 695.3 L 752.3 696.7 L 753.5 698.2 L 754.6 699.6 L 755.7 701.1 L 756.7 702.6 L 757.7 704.2 L 760.8 705.1 L 764.2 705.8 L 767.5 706.6 L 770.7 707.4 L 773.8 708.2 L 776.8 709.0 L 779.7 709.8 L 782.6 710.7 L 785.4 711.6 L 788.1 712.5 L 790.7 713.5 L 793.3 714.4 L 795.7 715.4 L 798.1 716.5 L 800.5 717.5 L 802.8 718.6 L 805.0 719.8 L 807.1 720.9 L 809.2 722.1 L 811.3 723.3 L 813.3 724.6 L 815.2 725.9 L 817.1 727.2 L 818.9 728.6 L 820.7 730.0 L 822.8 731.3 L 826.5 731.7 L 830.2 732.1 L 833.8 732.5 L 837.3 733.0 L 840.8 733.5 L 844.2 734.0 L 847.5 734.6 L 850.7 735.2 L 853.9 735.8 L 857.0 736.5 L 860.0 737.2 L 863.0 737.9 L 866.0 738.7 L 868.9 739.4 L 871.7 740.3 L 874.5 741.1 L 877.2 742.0 L 879.9 743.0 L 882.6 744.0 L 885.3 745.0 L 887.9 746.0 L 890.4 747.1 L 893.0 748.2 L 895.5 749.4 L 898.0 750.6 L 901.1 751.4 L 904.9 751.4 L 908.7 751.5 L 912.5 751.6 L 916.1 751.8 L 919.7 751.9 L 923.3 752.2 L 926.8 752.4 L 930.3 752.7 L 933.7 753.0 L 937.1 753.4 L 940.4 753.8 L 943.7 754.2 L 947.0 754.7 L 950.2 755.2 L 953.4 755.8 L 956.6 756.4 L 959.7 757.0 L 962.9 757.7 L 966.0 758.4 L 969.1 759.2 L 972.2 760.0 L 975.3 760.8 L 978.4 761.7 L 981.5 762.6 L 984.6 763.6 L 988.2 763.6 L 991.9 763.3 L 995.7 763.1 L 999.3 762.8 L 1003.0 762.7 L 1006.6 762.5 L 1010.2 762.4 L 1013.7 762.3 L 1017.3 762.3 L 1020.8 762.3 L 1024.2 762.4 L 1027.7 762.5 L 1031.1 762.6 L 1034.6 762.8 L 1038.0 763.0 L 1041.4 763.3 L 1044.8 763.6 L 1048.2 763.9 L 1051.7 764.3 L 1055.1 764.7 L 1058.5 765.2 L 1062.0 765.7 L 1065.5 766.2 L 1069.0 766.8 L 1072.5 767.4 L 1076.0 768.1 L 1079.5 767.4 L 1083.0 766.8 L 1086.5 766.2 L 1090.0 765.7 L 1093.5 765.2 L 1096.9 764.7 L 1100.3 764.3 L 1103.8 763.9 L 1107.2 763.6 L 1110.6 763.3 L 1114.0 763.0 L 1117.4 762.8 L 1120.9 762.6 L 1124.3 762.5 L 1127.8 762.4 L 1131.2 762.3 L 1134.7 762.3 L 1138.3 762.3 L 1141.8 762.4 L 1145.4 762.5 L 1149.0 762.7 L 1152.7 762.8 L 1156.3 763.1 L 1160.1 763.3 L 1163.8 763.6 L 1167.4 763.6 L 1170.5 762.6 L 1173.6 761.7 L 1176.7 760.8 L 1179.8 760.0 L 1182.9 759.2 L 1186.0 758.4 L 1189.1 757.7 L 1192.3 757.0 L 1195.4 756.4 L 1198.6 755.8 L 1201.8 755.2 L 1205.0 754.7 L 1208.3 754.2 L 1211.6 753.8 L 1214.9 753.4 L 1218.3 753.0 L 1221.7 752.7 L 1225.2 752.4 L 1228.7 752.2 L 1232.3 751.9 L 1235.9 751.8 L 1239.5 751.6 L 1243.3 751.5 L 1247.1 751.4 L 1250.9 751.4 L 1254.0 750.6 L 1256.5 749.4 L 1259.0 748.2 L 1261.6 747.1 L 1264.1 746.0 L 1266.7 745.0 L 1269.4 744.0 L 1272.1 743.0 L 1274.8 742.0 L 1277.5 741.1 L 1280.3 740.3 L 1283.1 739.4 L 1286.0 738.7 L 1289.0 737.9 L 1292.0 737.2 L 1295.0 736.5 L 1298.1 735.8 L 1301.3 735.2 L 1304.5 734.6 L 1307.8 734.0 L 1311.2 733.5 L 1314.7 733.0 L 1318.2 732.5 L 1321.8 732.1 L 1325.5 731.7 L 1329.2 731.3 L 1331.3 730.0 L 1333.1 728.6 L 1334.9 727.2 L 1336.8 725.9 L 1338.7 724.6 L 1340.7 723.3 L 1342.8 722.1 L 1344.9 720.9 L 1347.0 719.8 L 1349.2 718.6 L 1351.5 717.5 L 1353.9 716.5 L 1356.3 715.4 L 1358.7 714.4 L 1361.3 713.5 L 1363.9 712.5 L 1366.6 711.6 L 1369.4 710.7 L 1372.3 709.8 L 1375.2 709.0 L 1378.2 708.2 L 1381.3 707.4 L 1384.5 706.6 L 1387.8 705.8 L 1391.2 705.1 L 1394.3 704.2 L 1395.3 702.6 L 1396.3 701.1 L 1397.4 699.6 L 1398.5 698.2 L 1399.7 696.7 L 1401.0 695.3 L 1402.4 694.0 L 1403.8 692.6 L 1405.3 691.3 L 1406.9 690.0 L 1408.6 688.7 L 1410.3 687.5 L 1412.1 686.3 L 1414.0 685.1 L 1416.0 683.9 L 1418.1 682.7 L 1420.3 681.6 L 1422.5 680.5 L 1424.9 679.3 L 1427.3 678.3 L 1429.8 677.2 L 1432.5 676.1 L 1435.2 675.0 L 1438.0 674.0 L 1441.0 673.0 L 1442.7 671.7 L 1442.8 670.1 L 1443.0 668.5 L 1443.3 666.9 L 1443.7 665.4 L 1444.1 663.9 L 1444.6 662.4 L 1445.2 661.0 L 1445.9 659.5 L 1446.7 658.1 L 1447.6 656.7 L 1448.6 655.3 L 1449.6 654.0 L 1450.8 652.6 L 1452.0 651.3 L 1453.4 649.9 L 1454.8 648.6 L 1456.3 647.3 L 1457.9 646.0 L 1459.7 644.7 L 1461.5 643.4 L 1463.4 642.1 L 1465.4 640.8 L 1467.5 639.6 L 1469.8 638.3 L 1472.1 637.0 L 1472.2 635.5 L 1471.5 633.9 L 1470.9 632.4 L 1470.3 630.8 L 1469.9 629.3 L 1469.6 627.8 L 1469.3 626.3 L 1469.1 624.9 L 1469.1 623.4 L 1469.1 622.0 L 1469.3 620.5 L 1469.5 619.1 L 1469.8 617.6 L 1470.2 616.2 L 1470.7 614.8 L 1471.4 613.4 L 1472.1 612.0 L 1472.9 610.5 L 1473.8 609.1 L 1474.8 607.7 L 1475.9 606.3 L 1477.1 604.8 L 1478.5 603.4 L 1479.9 601.9 L 1481.4 600.5 L 1483.0 599.0 Z" fill="none" stroke="#9ccbb0" stroke-width="2.2"/>
<g clip-path="url(#cBU)" fill="none" stroke="#f4f40c" stroke-width="2.6"><ellipse cx="1030.9" cy="426.6" rx="40.7" ry="45.4" transform="rotate(-104.7 1030.9 426.6)"/><ellipse cx="942.6" cy="435.0" rx="38.7" ry="45.4" transform="rotate(-129.1 942.6 435.0)"/><ellipse cx="861.0" cy="451.3" rx="34.7" ry="45.4" transform="rotate(-145.5 861.0 451.3)"/><ellipse cx="790.2" cy="474.7" rx="28.9" ry="45.4" transform="rotate(-156.5 790.2 474.7)"/><ellipse cx="733.7" cy="504.1" rx="21.7" ry="45.4" transform="rotate(-164.5 733.7 504.1)"/><ellipse cx="694.3" cy="538.0" rx="13.4" ry="45.4" transform="rotate(-170.9 694.3 538.0)"/><ellipse cx="674.1" cy="574.7" rx="4.4" ry="45.4" transform="rotate(-176.5 674.1 574.7)"/><ellipse cx="1477.9" cy="574.9" rx="4.3" ry="45.4" transform="rotate(-3.4 1477.9 574.9)"/><ellipse cx="1457.8" cy="538.2" rx="13.3" ry="45.4" transform="rotate(-9.1 1457.8 538.2)"/><ellipse cx="1418.5" cy="504.3" rx="21.7" ry="45.4" transform="rotate(-15.5 1418.5 504.3)"/><ellipse cx="1362.1" cy="474.8" rx="28.9" ry="45.4" transform="rotate(-23.5 1362.1 474.8)"/><ellipse cx="1291.3" cy="451.4" rx="34.7" ry="45.4" transform="rotate(-34.4 1291.3 451.4)"/><ellipse cx="1209.8" cy="435.0" rx="38.7" ry="45.4" transform="rotate(-50.8 1209.8 435.0)"/><ellipse cx="1121.5" cy="426.6" rx="40.7" ry="45.4" transform="rotate(-75.2 1121.5 426.6)"/><ellipse cx="1043.0" cy="517.0" rx="40.8" ry="41.8" transform="rotate(-111.9 1043.0 517.0)"/><ellipse cx="953.1" cy="524.6" rx="39.1" ry="41.8" transform="rotate(-148.8 953.1 524.6)"/><ellipse cx="869.9" cy="540.5" rx="35.5" ry="41.8" transform="rotate(-164.2 869.9 540.5)"/><ellipse cx="797.8" cy="564.1" rx="30.2" ry="41.8" transform="rotate(-172.8 797.8 564.1)"/><ellipse cx="740.7" cy="593.9" rx="23.4" ry="41.8" transform="rotate(-179.1 740.7 593.9)"/><ellipse cx="701.7" cy="628.3" rx="15.6" ry="41.8" transform="rotate(175.5 701.7 628.3)"/><ellipse cx="682.8" cy="665.6" rx="7.2" ry="41.8" transform="rotate(170.4 682.8 665.6)"/><ellipse cx="1470.7" cy="676.3" rx="4.8" ry="41.8" transform="rotate(11.1 1470.7 676.3)"/><ellipse cx="1457.7" cy="638.6" rx="13.3" ry="41.8" transform="rotate(5.9 1457.7 638.6)"/><ellipse cx="1424.2" cy="603.1" rx="21.3" ry="41.8" transform="rotate(0.7 1424.2 603.1)"/><ellipse cx="1371.9" cy="571.8" rx="28.4" ry="41.8" transform="rotate(-5.2 1371.9 571.8)"/><ellipse cx="1303.6" cy="546.4" rx="34.2" ry="41.8" transform="rotate(-13.0 1303.6 546.4)"/><ellipse cx="1223.0" cy="528.2" rx="38.3" ry="41.8" transform="rotate(-25.7 1223.0 528.2)"/><ellipse cx="1134.6" cy="518.2" rx="40.5" ry="41.8" transform="rotate(-54.0 1134.6 518.2)"/><ellipse cx="1063.9" cy="607.6" rx="41.8" ry="41.8" transform="rotate(144.7 1063.9 607.6)"/><ellipse cx="973.7" cy="613.6" rx="40.4" ry="41.8" transform="rotate(171.9 973.7 613.6)"/><ellipse cx="889.8" cy="628.7" rx="37.0" ry="41.8" transform="rotate(170.9 889.8 628.7)"/><ellipse cx="817.7" cy="652.0" rx="31.7" ry="41.8" transform="rotate(168.4 817.7 652.0)"/><ellipse cx="761.8" cy="682.1" rx="24.9" ry="41.8" transform="rotate(165.2 761.8 682.1)"/><ellipse cx="725.7" cy="717.0" rx="17.1" ry="41.8" transform="rotate(161.4 725.7 717.0)"/><ellipse cx="711.5" cy="754.5" rx="8.6" ry="41.8" transform="rotate(156.9 711.5 754.5)"/><ellipse cx="720.3" cy="792.3" rx="0.3" ry="41.8" transform="rotate(151.5 720.3 792.3)"/><ellipse cx="1436.3" cy="782.4" rx="2.2" ry="41.8" transform="rotate(27.0 1436.3 782.4)"/><ellipse cx="1439.0" cy="744.5" rx="10.8" ry="41.8" transform="rotate(21.8 1439.0 744.5)"/><ellipse cx="1418.9" cy="707.4" rx="19.2" ry="41.8" transform="rotate(17.5 1418.9 707.4)"/><ellipse cx="1377.2" cy="673.6" rx="26.9" ry="41.8" transform="rotate(13.9 1377.2 673.6)"/><ellipse cx="1316.7" cy="645.2" rx="33.3" ry="41.8" transform="rotate(10.9 1316.7 645.2)"/><ellipse cx="1241.0" cy="623.9" rx="38.1" ry="41.8" transform="rotate(8.6 1241.0 623.9)"/><ellipse cx="1154.9" cy="611.1" rx="41.0" ry="41.8" transform="rotate(8.7 1154.9 611.1)"/><ellipse cx="1099.7" cy="698.6" rx="40.5" ry="41.8" transform="rotate(76.6 1099.7 698.6)"/><ellipse cx="1010.0" cy="701.1" rx="39.9" ry="41.8" transform="rotate(122.9 1010.0 701.1)"/><ellipse cx="925.7" cy="714.1" rx="37.0" ry="41.8" transform="rotate(142.6 925.7 714.1)"/><ellipse cx="853.5" cy="736.3" rx="31.9" ry="41.8" transform="rotate(148.3 853.5 736.3)"/><ellipse cx="799.4" cy="766.1" rx="25.2" ry="41.8" transform="rotate(148.9 799.4 766.1)"/><ellipse cx="767.7" cy="801.1" rx="17.3" ry="41.8" transform="rotate(146.8 767.7 801.1)"/><ellipse cx="760.9" cy="838.3" rx="8.9" ry="41.8" transform="rotate(142.8 760.9 838.3)"/><ellipse cx="779.7" cy="874.8" rx="0.6" ry="41.8" transform="rotate(137.0 779.7 874.8)"/><ellipse cx="1384.3" cy="857.8" rx="4.5" ry="41.8" transform="rotate(40.0 1384.3 857.8)"/><ellipse cx="1391.1" cy="820.6" rx="12.9" ry="41.8" transform="rotate(35.1 1391.1 820.6)"/><ellipse cx="1372.3" cy="784.0" rx="21.1" ry="41.8" transform="rotate(32.0 1372.3 784.0)"/><ellipse cx="1329.5" cy="751.2" rx="28.6" ry="41.8" transform="rotate(31.0 1329.5 751.2)"/><ellipse cx="1266.2" cy="724.7" rx="34.6" ry="41.8" transform="rotate(33.5 1266.2 724.7)"/><ellipse cx="1187.4" cy="706.7" rx="38.7" ry="41.8" transform="rotate(44.0 1187.4 706.7)"/><ellipse cx="1076.0" cy="780.3" rx="29.2" ry="32.6" transform="rotate(90.0 1076.0 780.3)"/><ellipse cx="1004.2" cy="784.6" rx="28.4" ry="32.6" transform="rotate(111.1 1004.2 784.6)"/><ellipse cx="938.3" cy="797.1" rx="26.2" ry="32.6" transform="rotate(124.8 938.3 797.1)"/><ellipse cx="883.5" cy="816.9" rx="22.8" ry="32.6" transform="rotate(131.5 883.5 816.9)"/><ellipse cx="844.3" cy="842.2" rx="18.3" ry="32.6" transform="rotate(133.6 844.3 842.2)"/><ellipse cx="823.8" cy="871.1" rx="13.2" ry="32.6" transform="rotate(132.8 823.8 871.1)"/><ellipse cx="823.8" cy="901.2" rx="7.9" ry="32.6" transform="rotate(129.8 823.8 901.2)"/><ellipse cx="844.3" cy="930.2" rx="2.8" ry="32.6" transform="rotate(125.0 844.3 930.2)"/><ellipse cx="1307.7" cy="930.2" rx="2.8" ry="32.6" transform="rotate(55.0 1307.7 930.2)"/><ellipse cx="1328.2" cy="901.2" rx="7.9" ry="32.6" transform="rotate(50.2 1328.2 901.2)"/><ellipse cx="1328.2" cy="871.1" rx="13.2" ry="32.6" transform="rotate(47.2 1328.2 871.1)"/><ellipse cx="1307.7" cy="842.2" rx="18.3" ry="32.6" transform="rotate(46.4 1307.7 842.2)"/><ellipse cx="1268.5" cy="816.9" rx="22.8" ry="32.6" transform="rotate(48.5 1268.5 816.9)"/><ellipse cx="1213.7" cy="797.1" rx="26.2" ry="32.6" transform="rotate(55.2 1213.7 797.1)"/><ellipse cx="1147.8" cy="784.6" rx="28.4" ry="32.6" transform="rotate(68.9 1147.8 784.6)"/><ellipse cx="1096.4" cy="842.2" rx="26.1" ry="32.6" transform="rotate(85.2 1096.4 842.2)"/><ellipse cx="1025.0" cy="844.6" rx="25.7" ry="32.6" transform="rotate(101.7 1025.0 844.6)"/><ellipse cx="960.5" cy="857.5" rx="23.4" ry="32.6" transform="rotate(114.1 960.5 857.5)"/><ellipse cx="911.6" cy="879.2" rx="19.6" ry="32.6" transform="rotate(120.4 911.6 879.2)"/><ellipse cx="885.0" cy="906.8" rx="14.7" ry="32.6" transform="rotate(121.8 885.0 906.8)"/><ellipse cx="884.1" cy="936.6" rx="9.4" ry="32.6" transform="rotate(119.6 884.1 936.6)"/><ellipse cx="909.1" cy="964.4" rx="4.5" ry="32.6" transform="rotate(114.5 909.1 964.4)"/><ellipse cx="956.7" cy="986.7" rx="0.6" ry="32.6" transform="rotate(107.1 956.7 986.7)"/><ellipse cx="1218.3" cy="977.9" rx="2.2" ry="32.6" transform="rotate(69.4 1218.3 977.9)"/><ellipse cx="1256.8" cy="952.8" rx="6.6" ry="32.6" transform="rotate(62.9 1256.8 952.8)"/><ellipse cx="1270.8" cy="923.7" rx="11.7" ry="32.6" transform="rotate(59.0 1270.8 923.7)"/><ellipse cx="1258.5" cy="894.4" rx="16.9" ry="32.6" transform="rotate(58.3 1258.5 894.4)"/><ellipse cx="1221.6" cy="868.9" rx="21.4" ry="32.6" transform="rotate(61.7 1221.6 868.9)"/><ellipse cx="1165.0" cy="850.7" rx="24.6" ry="32.6" transform="rotate(70.5 1165.0 850.7)"/><ellipse cx="1076.0" cy="894.5" rx="22.4" ry="32.6" transform="rotate(90.0 1076.0 894.5)"/><ellipse cx="1005.7" cy="903.1" rx="20.9" ry="32.6" transform="rotate(103.0 1005.7 903.1)"/><ellipse cx="957.7" cy="926.1" rx="16.8" ry="32.6" transform="rotate(109.9 957.7 926.1)"/><ellipse cx="947.3" cy="956.2" rx="11.5" ry="32.6" transform="rotate(109.8 947.3 956.2)"/><ellipse cx="977.7" cy="983.9" rx="6.6" ry="32.6" transform="rotate(104.3 977.7 983.9)"/><ellipse cx="1039.4" cy="1000.4" rx="3.7" ry="32.6" transform="rotate(95.2 1039.4 1000.4)"/><ellipse cx="1112.6" cy="1000.4" rx="3.7" ry="32.6" transform="rotate(84.8 1112.6 1000.4)"/><ellipse cx="1174.3" cy="983.9" rx="6.6" ry="32.6" transform="rotate(75.7 1174.3 983.9)"/><ellipse cx="1204.7" cy="956.2" rx="11.5" ry="32.6" transform="rotate(70.2 1204.7 956.2)"/><ellipse cx="1194.3" cy="926.1" rx="16.8" ry="32.6" transform="rotate(70.1 1194.3 926.1)"/><ellipse cx="1146.3" cy="903.1" rx="20.9" ry="32.6" transform="rotate(77.0 1146.3 903.1)"/><ellipse cx="1087.0" cy="937.5" rx="18.0" ry="32.6" transform="rotate(88.1 1087.0 937.5)"/><ellipse cx="1020.0" cy="951.1" rx="15.6" ry="32.6" transform="rotate(99.0 1020.0 951.1)"/><ellipse cx="1030.3" cy="981.8" rx="10.2" ry="32.6" transform="rotate(96.8 1030.3 981.8)"/><ellipse cx="1103.8" cy="987.2" rx="9.2" ry="32.6" transform="rotate(85.9 1103.8 987.2)"/><ellipse cx="1138.8" cy="959.8" rx="14.0" ry="32.6" transform="rotate(80.1 1138.8 959.8)"/><ellipse cx="1076.0" cy="968.0" rx="13.6" ry="32.6" transform="rotate(90.0 1076.0 968.0)"/></g>
<g clip-path="url(#cBot)" fill="none" stroke="#f6f610" stroke-width="2.3"><ellipse cx="674.1" cy="612.3" rx="4.9" ry="45.4" transform="rotate(178.1 674.1 612.3)"/><ellipse cx="694.2" cy="649.0" rx="13.9" ry="45.4" transform="rotate(172.5 694.2 649.0)"/><ellipse cx="733.5" cy="682.9" rx="22.2" ry="45.4" transform="rotate(166.2 733.5 682.9)"/><ellipse cx="789.9" cy="712.4" rx="29.4" ry="45.4" transform="rotate(158.4 789.9 712.4)"/><ellipse cx="860.7" cy="735.8" rx="35.2" ry="45.4" transform="rotate(147.6 860.7 735.8)"/><ellipse cx="942.2" cy="752.2" rx="39.2" ry="45.4" transform="rotate(131.1 942.2 752.2)"/><ellipse cx="1030.5" cy="760.6" rx="41.3" ry="45.4" transform="rotate(105.7 1030.5 760.6)"/><ellipse cx="1121.1" cy="760.6" rx="41.3" ry="45.4" transform="rotate(74.4 1121.1 760.6)"/><ellipse cx="1209.4" cy="752.2" rx="39.2" ry="45.4" transform="rotate(49.0 1209.4 752.2)"/><ellipse cx="1291.0" cy="735.9" rx="35.2" ry="45.4" transform="rotate(32.5 1291.0 735.9)"/><ellipse cx="1361.8" cy="712.5" rx="29.5" ry="45.4" transform="rotate(21.7 1361.8 712.5)"/><ellipse cx="1418.3" cy="683.1" rx="22.2" ry="45.4" transform="rotate(13.8 1418.3 683.1)"/><ellipse cx="1457.7" cy="649.2" rx="13.9" ry="45.4" transform="rotate(7.5 1457.7 649.2)"/><ellipse cx="1477.9" cy="612.5" rx="4.9" ry="45.4" transform="rotate(1.9 1477.9 612.5)"/><ellipse cx="685.2" cy="703.7" rx="1.4" ry="41.8" transform="rotate(165.0 685.2 703.7)"/><ellipse cx="708.6" cy="740.5" rx="9.7" ry="41.8" transform="rotate(158.9 708.6 740.5)"/><ellipse cx="751.8" cy="774.1" rx="17.3" ry="41.8" transform="rotate(151.6 751.8 774.1)"/><ellipse cx="812.5" cy="802.6" rx="23.8" ry="41.8" transform="rotate(142.3 812.5 802.6)"/><ellipse cx="887.4" cy="824.6" rx="28.8" ry="41.8" transform="rotate(129.9 887.4 824.6)"/><ellipse cx="972.5" cy="838.8" rx="32.0" ry="41.8" transform="rotate(113.4 972.5 838.8)"/><ellipse cx="1063.1" cy="844.4" rx="33.2" ry="41.8" transform="rotate(93.0 1063.1 844.4)"/><ellipse cx="1154.5" cy="841.2" rx="32.5" ry="41.8" transform="rotate(72.0 1154.5 841.2)"/><ellipse cx="1241.6" cy="829.4" rx="29.8" ry="41.8" transform="rotate(54.3 1241.6 829.4)"/><ellipse cx="1319.8" cy="809.5" rx="25.3" ry="41.8" transform="rotate(40.8 1319.8 809.5)"/><ellipse cx="1384.8" cy="782.7" rx="19.3" ry="41.8" transform="rotate(30.7 1384.8 782.7)"/><ellipse cx="1433.2" cy="750.3" rx="12.0" ry="41.8" transform="rotate(23.0 1433.2 750.3)"/><ellipse cx="1462.4" cy="714.2" rx="3.8" ry="41.8" transform="rotate(16.6 1462.4 714.2)"/><ellipse cx="751.4" cy="828.0" rx="8.1" ry="41.8" transform="rotate(144.8 751.4 828.0)"/><ellipse cx="802.9" cy="859.4" rx="15.2" ry="41.8" transform="rotate(136.4 802.9 859.4)"/><ellipse cx="871.6" cy="884.4" rx="20.8" ry="41.8" transform="rotate(125.6 871.6 884.4)"/><ellipse cx="953.1" cy="901.6" rx="24.7" ry="41.8" transform="rotate(112.1 953.1 901.6)"/><ellipse cx="1042.3" cy="909.8" rx="26.6" ry="41.8" transform="rotate(96.2 1042.3 909.8)"/><ellipse cx="1133.7" cy="908.6" rx="26.3" ry="41.8" transform="rotate(79.4 1133.7 908.6)"/><ellipse cx="1221.4" cy="897.9" rx="23.9" ry="41.8" transform="rotate(64.1 1221.4 897.9)"/><ellipse cx="1300.0" cy="878.5" rx="19.5" ry="41.8" transform="rotate(51.3 1300.0 878.5)"/><ellipse cx="1364.5" cy="851.6" rx="13.4" ry="41.8" transform="rotate(41.2 1364.5 851.6)"/><ellipse cx="1410.9" cy="818.9" rx="6.0" ry="41.8" transform="rotate(33.3 1410.9 818.9)"/><ellipse cx="822.5" cy="907.7" rx="6.8" ry="41.8" transform="rotate(129.4 822.5 907.7)"/><ellipse cx="885.8" cy="934.2" rx="12.8" ry="41.8" transform="rotate(119.6 885.8 934.2)"/><ellipse cx="964.6" cy="952.2" rx="16.9" ry="41.8" transform="rotate(107.5 964.6 952.2)"/><ellipse cx="1052.3" cy="960.3" rx="18.7" ry="41.8" transform="rotate(93.7 1052.3 960.3)"/><ellipse cx="1142.0" cy="957.7" rx="18.1" ry="41.8" transform="rotate(79.6 1142.0 957.7)"/><ellipse cx="1226.3" cy="944.8" rx="15.2" ry="41.8" transform="rotate(66.5 1226.3 944.8)"/><ellipse cx="1298.5" cy="922.6" rx="10.2" ry="41.8" transform="rotate(55.5 1298.5 922.6)"/><ellipse cx="1352.6" cy="892.7" rx="3.4" ry="41.8" transform="rotate(46.7 1352.6 892.7)"/><ellipse cx="883.5" cy="955.5" rx="1.7" ry="32.6" transform="rotate(118.4 883.5 955.5)"/><ellipse cx="938.3" cy="975.2" rx="5.1" ry="32.6" transform="rotate(110.1 938.3 975.2)"/><ellipse cx="1004.2" cy="987.7" rx="7.3" ry="32.6" transform="rotate(100.5 1004.2 987.7)"/><ellipse cx="1076.0" cy="992.0" rx="8.1" ry="32.6" transform="rotate(90.0 1076.0 992.0)"/><ellipse cx="1147.8" cy="987.7" rx="7.3" ry="32.6" transform="rotate(79.5 1147.8 987.7)"/><ellipse cx="1213.7" cy="975.2" rx="5.1" ry="32.6" transform="rotate(69.9 1213.7 975.2)"/><ellipse cx="1268.5" cy="955.5" rx="1.7" ry="32.6" transform="rotate(61.6 1268.5 955.5)"/><ellipse cx="1020.4" cy="1000.3" rx="1.8" ry="32.6" transform="rotate(97.9 1020.4 1000.3)"/><ellipse cx="1091.6" cy="1003.4" rx="2.3" ry="32.6" transform="rotate(87.8 1091.6 1003.4)"/><ellipse cx="1160.7" cy="995.6" rx="0.9" ry="32.6" transform="rotate(77.9 1160.7 995.6)"/></g>
<path d="M 669.0 599.0 A 407.0 407.0 0 0 1 1483.0 599.0" fill="none" stroke="#4f9ae8" stroke-width="1.6"/>
<path d="M 669.0 599.0 A 407.0 407.0 0 0 0 1483.0 599.0" fill="none" stroke="#f6f610" stroke-width="2.3"/>
</svg>
<svg class="a" style="left:0;top:0" width="1941" height="1051"><polygon points="694.1,219.0 768.6,276.9 759.2,288.9 824.5,312.5 785.6,255.0 776.3,267.0 701.9,209.0" fill="#f7931e"/></svg>
<svg class="a" style="left:1043px;top:569px;" width="10" height="10" viewBox="0 0 10 10"><path d="M5 1 V9 M1 5 H9" stroke="#5ea8f0" stroke-width="1.1"/></svg>
<svg class="a" style="left:1072px;top:325px;" width="14" height="21" viewBox="0 0 14 21"><path d="M1 1 V16 L4.5 12.5 L7.5 19 L10 18 L7 11.5 H12 Z" fill="#fff" stroke="#111" stroke-width="1" stroke-linejoin="round"/></svg>
<div class="a" style="left:0px;top:1015px;width:1941px;height:2px;background:#a3a3a3"></div>
<div class="a" style="left:0px;top:1017px;width:1941px;height:15px;background:#f0f0f0"></div>
<div class="a" style="left:2px;top:1017px;width:66px;height:15px;background:#c9c9c9;border-top:2px solid #555"></div>
<div class="a" style="left:2px;top:1019px;width:16px;height:13px;background:#cdcdcd;border-right:1px solid #b3b3b3"></div>
<div class="a" style="left:18px;top:1019px;width:16px;height:13px;background:#cdcdcd;border-right:1px solid #b3b3b3"></div>
<div class="a" style="left:34px;top:1019px;width:16px;height:13px;background:#cdcdcd;border-right:1px solid #b3b3b3"></div>
<div class="a" style="left:50px;top:1019px;width:16px;height:13px;background:#cdcdcd;border-right:1px solid #b3b3b3"></div>
<svg class="a" style="left:5px;top:1020px;" width="60" height="11" viewBox="0 0 60 11"><g fill="#a6a6a6"><path d="M4 1 V10 M11 1 L6 5.5 L11 10 Z" stroke="#a6a6a6"/><path d="M27 1 L22 5.5 L27 10 Z"/><path d="M38 1 L43 5.5 L38 10 Z"/><path d="M54 1 L59 5.5 L54 10 Z M59.5 1 V10" stroke="#a6a6a6"/></g></svg>
<div class="a" style="left:68px;top:1017px;width:57px;height:15px;background:#fff"></div>
<div class="t" style="left:80.8px;top:1018.9px;font-size:11.9px;color:#111;font-weight:bold;">Model</div>
<div class="a" style="left:125px;top:1017px;width:69px;height:15px;background:#d8d8d8;border:1px solid #b0b0b0;border-top:none"></div>
<div class="t" style="left:136.0px;top:1019.2px;font-size:11.1px;color:#333;font-weight:normal;">3D Views</div>
<div class="a" style="left:193px;top:1017px;width:110px;height:15px;background:#d8d8d8;border:1px solid #b0b0b0;border-top:none"></div>
<div class="t" style="left:203.0px;top:1018.4px;font-size:12.1px;color:#333;font-weight:normal;">Motion Study 1</div>
<div class="a" style="left:303px;top:1017px;width:1636px;height:15px;background:#f7f7f7;border-right:1px solid #b0b0b0"></div>
<div class="a" style="left:0px;top:1032px;width:1941px;height:1px;background:#b4b4b4"></div>
<div class="a" style="left:0px;top:1033px;width:1941px;height:18px;background:#f3f3f3"></div>
<div class="t" style="left:1.3px;top:1038.1px;font-size:11.95px;color:#222;font-weight:normal;">Select the features to mirror</div>
<div class="t" style="left:1653.3px;top:1037.1px;font-size:11.7px;color:#222;font-weight:normal;">Editing Part</div>
<svg class="a" style="left:1743px;top:1035px;" width="17" height="16" viewBox="0 0 17 16"><path d="M1 11 L6 2 L11 11 Z" fill="#f5c518" stroke="#333" stroke-width="0.8"/><path d="M6 5 V8.5" stroke="#222" stroke-width="1.2"/><path d="M9 9 L15 3 M12 3 H15 V6" fill="none" stroke="#222" stroke-width="1.5"/><rect x="1" y="13" width="2" height="3" fill="#2b5f86"/><rect x="5" y="13" width="2" height="3" fill="#2b5f86"/><rect x="9" y="12" width="2" height="4" fill="#2b5f86"/><rect x="13" y="10" width="2" height="6" fill="#2b5f86"/></svg>
<div class="t" style="left:1834.2px;top:1037.3px;font-size:11.5px;color:#a8a8a8;font-weight:normal;">MMGS</div>
<svg class="a" style="left:1888px;top:1039px;" width="8" height="6" viewBox="0 0 8 6"><path d="M0.5 5 L4 1 L7.5 5 Z" fill="#666"/></svg>
<svg class="a" style="left:1921px;top:1035px;" width="18" height="15" viewBox="0 0 18 15"><path d="M1 5 L11 1 L17 5 V10 L7 14 L1 10 Z" fill="#e8e8e8" stroke="#333" stroke-width="1"/><path d="M1 5 L7 9 L17 5 M7 9 V14" fill="none" stroke="#333" stroke-width="0.9"/><rect x="8" y="3.5" width="5" height="3" fill="#fff" stroke="#333" stroke-width="0.8" transform="rotate(-20 10 5)"/></svg>
</body></html>
